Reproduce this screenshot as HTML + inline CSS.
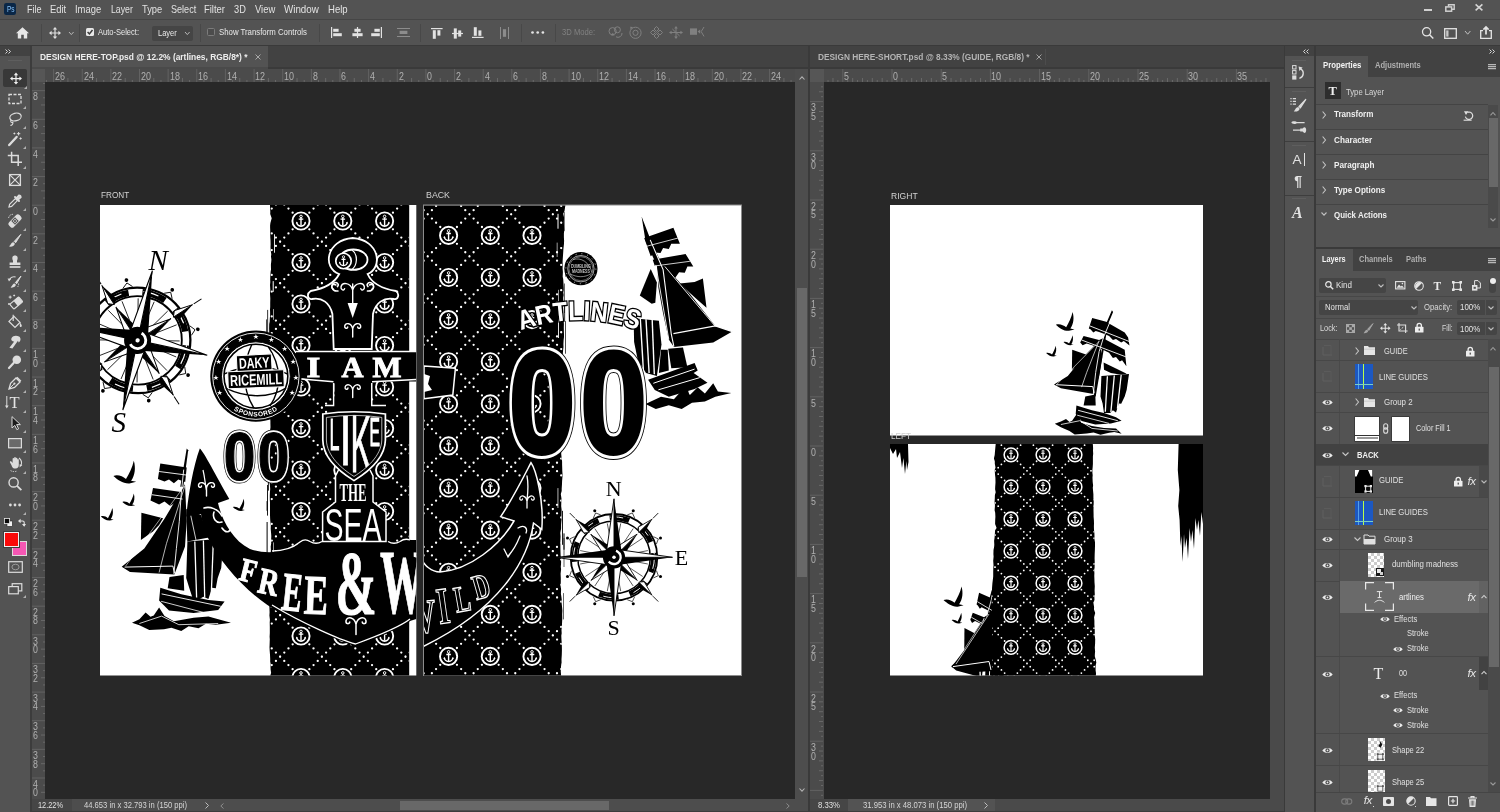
<!DOCTYPE html>
<html lang="en"><head><meta charset="utf-8"><title>Photoshop</title><style>
html,body{margin:0;padding:0;background:#535353;}
body{width:1500px;height:812px;position:relative;overflow:hidden;font-family:"Liberation Sans",sans-serif;}
#app{position:absolute;left:0;top:0;width:1500px;height:812px;will-change:transform;}
.r{position:absolute;}
.t{position:absolute;white-space:nowrap;}
svg{position:absolute;overflow:visible;}
</style></head><body>
<div id="app">
<!-- chrome_top -->
<div class="r" style="left:0px;top:0px;width:1500px;height:812px;background:#535353;"></div>
<div class="r" style="left:0px;top:19px;width:1500px;height:1px;background:#454545;"></div>
<div class="r" style="left:4px;top:3.2px;width:12px;height:12px;background:#0a2747;border-radius:2.2px"></div>
<span class="t" style="left:6.60px;top:4.88px;font-size:8.6px;line-height:9.881px;color:#86c2fa;transform:scaleX(0.7572);transform-origin:0 0;">Ps</span>
<span class="t" style="left:26.90px;top:3.33px;font-size:10.5px;line-height:12.065px;color:#e2e2e2;transform:scaleX(0.8629);transform-origin:0 0;">File</span>
<span class="t" style="left:50.10px;top:3.33px;font-size:10.5px;line-height:12.065px;color:#e2e2e2;transform:scaleX(0.8953);transform-origin:0 0;">Edit</span>
<span class="t" style="left:75.10px;top:3.33px;font-size:10.5px;line-height:12.065px;color:#e2e2e2;transform:scaleX(0.8978);transform-origin:0 0;">Image</span>
<span class="t" style="left:110.70px;top:3.33px;font-size:10.5px;line-height:12.065px;color:#e2e2e2;transform:scaleX(0.8300);transform-origin:0 0;">Layer</span>
<span class="t" style="left:141.50px;top:3.33px;font-size:10.5px;line-height:12.065px;color:#e2e2e2;transform:scaleX(0.8873);transform-origin:0 0;">Type</span>
<span class="t" style="left:170.50px;top:3.33px;font-size:10.5px;line-height:12.065px;color:#e2e2e2;transform:scaleX(0.8635);transform-origin:0 0;">Select</span>
<span class="t" style="left:204.10px;top:3.33px;font-size:10.5px;line-height:12.065px;color:#e2e2e2;transform:scaleX(0.9000);transform-origin:0 0;">Filter</span>
<span class="t" style="left:233.90px;top:3.33px;font-size:10.5px;line-height:12.065px;color:#e2e2e2;transform:scaleX(0.8791);transform-origin:0 0;">3D</span>
<span class="t" style="left:254.90px;top:3.33px;font-size:10.5px;line-height:12.065px;color:#e2e2e2;transform:scaleX(0.8950);transform-origin:0 0;">View</span>
<span class="t" style="left:283.90px;top:3.33px;font-size:10.5px;line-height:12.065px;color:#e2e2e2;transform:scaleX(0.9318);transform-origin:0 0;">Window</span>
<span class="t" style="left:327.90px;top:3.33px;font-size:10.5px;line-height:12.065px;color:#e2e2e2;transform:scaleX(0.9076);transform-origin:0 0;">Help</span>
<div class="r" style="left:0px;top:45px;width:1500px;height:1px;background:#3a3a3a;"></div>
<div class="r" style="left:0px;top:46px;width:1500px;height:22px;background:#424242;"></div>
<!-- chrome_opts -->
<div class="r" style="left:1424px;top:9px;width:8px;height:2px;background:#d0d0d0;"></div>
<svg style="left:1445px;top:4px" width="10" height="8" viewBox="0 0 10 8"><path d="M3.5 2.5 V0.8 H9.2 V5.2 H7" fill="none" stroke="#cfcfcf" stroke-width="1.4"/><rect x="0.8" y="2.9" width="5.8" height="4.3" fill="none" stroke="#cfcfcf" stroke-width="1.5"/></svg>
<svg style="left:1475px;top:4px" width="8" height="7" viewBox="0 0 8 7"><path d="M0.6 0.4 L7.4 6.4 M7.4 0.4 L0.6 6.4" stroke="#d4d4d4" stroke-width="1.6"/></svg>
<svg style="left:1421px;top:26px" width="14" height="14" viewBox="0 0 14 14"><circle cx="5.6" cy="5.8" r="4.1" fill="none" stroke="#e4e4e4" stroke-width="1.3"/><path d="M8.6 8.8 L12.3 12.5" stroke="#e4e4e4" stroke-width="1.5"/></svg>
<svg style="left:1444px;top:28px" width="13" height="11" viewBox="0 0 13 11"><rect x="0.7" y="0.7" width="11.6" height="9.6" fill="none" stroke="#e4e4e4" stroke-width="1.3"/><rect x="2.2" y="2.4" width="2.3" height="6.2" fill="#c8c8c8"/></svg>
<svg style="left:1465px;top:31px" width="5.4" height="3.2" viewBox="0 0 5.4 3.2"><path d="M0 0 L2.7 3.2 L5.4 0" fill="none" stroke="#c0c0c0" stroke-width="1"/></svg>
<svg style="left:1480px;top:26px" width="12" height="13" viewBox="0 0 12 13"><path d="M3 4.6 H0.7 V12.3 H11.3 V4.6 H9" fill="none" stroke="#e4e4e4" stroke-width="1.3"/><path d="M6 8.5 V2.2 M3.4 3.6 L6 1 L8.6 3.6" fill="none" stroke="#e4e4e4" stroke-width="1.7"/></svg>
<svg style="left:15.5px;top:26.5px" width="13" height="12" viewBox="0 0 13 12"><path d="M6.5 0.3 L0 6.2 H1.8 V11.5 H5.2 V7.8 H7.8 V11.5 H11.2 V6.2 H13 Z" fill="#e6e6e6"/></svg>
<div class="r" style="left:41px;top:24px;width:1px;height:18px;background:#484848;"></div>
<svg style="left:48.5px;top:27px" width="12" height="12" viewBox="0 0 12 12"><path d="M6 0 L8.2 2.6 H6.6 V5.4 H9.4 V3.8 L12 6 L9.4 8.2 V6.6 H6.6 V9.4 H8.2 L6 12 L3.8 9.4 H5.4 V6.6 H2.6 V8.2 L0 6 L2.6 3.8 V5.4 H5.4 V2.6 H3.8 Z" fill="#e0e0e0"/></svg>
<svg style="left:68.6px;top:32px" width="4.6" height="2.6" viewBox="0 0 4.6 2.6"><path d="M0 0 L2.3 2.6 L4.6 0" fill="none" stroke="#b8b8b8" stroke-width="1"/></svg>
<div class="r" style="left:79px;top:24px;width:1px;height:18px;background:#484848;"></div>
<div class="r" style="left:86px;top:28px;width:8px;height:8px;background:#e8e8e8;border-radius:1.5px"></div>
<svg style="left:86px;top:28px" width="8" height="8" viewBox="0 0 8 8"><path d="M1.6 4 L3.4 5.9 L6.5 2" fill="none" stroke="#3a3a3a" stroke-width="1.5"/></svg>
<span class="t" style="left:97.60px;top:27.35px;font-size:9.5px;line-height:10.915px;color:#e9e9e9;transform:scaleX(0.7923);transform-origin:0 0;">Auto-Select:</span>
<div class="r" style="left:152px;top:25.5px;width:41px;height:15px;background:#454545;border-radius:2px"></div>
<span class="t" style="left:157.60px;top:28.15px;font-size:9.5px;line-height:10.915px;color:#e9e9e9;transform:scaleX(0.7911);transform-origin:0 0;">Layer</span>
<svg style="left:185.4px;top:32px" width="4.6" height="2.6" viewBox="0 0 4.6 2.6"><path d="M0 0 L2.3 2.6 L4.6 0" fill="none" stroke="#b8b8b8" stroke-width="1"/></svg>
<div class="r" style="left:200px;top:24px;width:1px;height:18px;background:#484848;"></div>
<div class="r" style="left:207px;top:28.4px;width:5.6px;height:5.6px;border:1px solid #7c7c7c;border-radius:1.5px;background:#4c4c4c"></div>
<span class="t" style="left:218.60px;top:27.35px;font-size:9.5px;line-height:10.915px;color:#e9e9e9;transform:scaleX(0.8210);transform-origin:0 0;">Show Transform Controls</span>
<div class="r" style="left:319px;top:24px;width:1px;height:18px;background:#484848;"></div>
<svg style="left:331px;top:27px" width="12" height="11" viewBox="0 0 12 11"><rect x="0" y="0" width="1.2" height="11" fill="#e2e2e2"/><rect x="2.2" y="1.8" width="5.4" height="3" fill="#e2e2e2"/><rect x="2.2" y="6.2" width="8.6" height="3" fill="#e2e2e2"/></svg>
<svg style="left:351.5px;top:27px" width="11" height="11" viewBox="0 0 11 11"><rect x="4.9" y="0" width="1.2" height="11" fill="#e2e2e2"/><rect x="2.4" y="1.8" width="6.2" height="3" fill="#e2e2e2"/><rect x="0.4" y="6.2" width="10.2" height="3" fill="#e2e2e2"/></svg>
<svg style="left:371px;top:27px" width="11" height="11" viewBox="0 0 11 11"><rect x="9.8" y="0" width="1.2" height="11" fill="#e2e2e2"/><rect x="3.4" y="1.8" width="5.4" height="3" fill="#e2e2e2"/><rect x="0.2" y="6.2" width="8.6" height="3" fill="#e2e2e2"/></svg>
<svg style="left:396.5px;top:28px" width="13" height="9" viewBox="0 0 13 9"><rect x="0" y="0" width="13" height="1" fill="#8c8c8c"/><rect x="0" y="8" width="13" height="1" fill="#8c8c8c"/><rect x="2.6" y="2.8" width="7.8" height="3.2" fill="#8c8c8c"/></svg>
<div class="r" style="left:420px;top:24px;width:1px;height:18px;background:#484848;"></div>
<svg style="left:431px;top:28px" width="12" height="11" viewBox="0 0 12 11"><rect x="0" y="0" width="11.6" height="1.2" fill="#e2e2e2"/><rect x="1.8" y="2.2" width="3" height="8.6" fill="#e2e2e2"/><rect x="6.4" y="2.2" width="3" height="5.4" fill="#e2e2e2"/></svg>
<svg style="left:451.5px;top:27.5px" width="11" height="11" viewBox="0 0 11 11"><rect x="0" y="4.9" width="11" height="1.2" fill="#e2e2e2"/><rect x="1.8" y="0.4" width="3" height="10.2" fill="#e2e2e2"/><rect x="6.2" y="2.4" width="3" height="6.2" fill="#e2e2e2"/></svg>
<svg style="left:472px;top:27px" width="12" height="11" viewBox="0 0 12 11"><rect x="0" y="9.8" width="11.6" height="1.2" fill="#e2e2e2"/><rect x="1.8" y="0.2" width="3" height="8.6" fill="#e2e2e2"/><rect x="6.4" y="3.4" width="3" height="5.4" fill="#e2e2e2"/></svg>
<svg style="left:500px;top:26.5px" width="9" height="12" viewBox="0 0 9 12"><rect x="0" y="0" width="1" height="12" fill="#8c8c8c"/><rect x="8" y="0" width="1" height="12" fill="#8c8c8c"/><rect x="2.9" y="2.2" width="3.2" height="7.6" fill="#8c8c8c"/></svg>
<div class="r" style="left:520.5px;top:24px;width:1px;height:18px;background:#484848;"></div>
<svg style="left:531px;top:31.3px" width="14" height="3" viewBox="0 0 14 3"><circle cx="1.5" cy="1.5" r="1.35" fill="#e4e4e4"/><circle cx="6.7" cy="1.5" r="1.35" fill="#e4e4e4"/><circle cx="11.9" cy="1.5" r="1.35" fill="#e4e4e4"/></svg>
<div class="r" style="left:554.5px;top:24px;width:1px;height:18px;background:#484848;"></div>
<span class="t" style="left:562.20px;top:27.35px;font-size:9.5px;line-height:10.915px;color:#818181;transform:scaleX(0.8061);transform-origin:0 0;">3D Mode:</span>
<svg style="left:608px;top:25.5px" width="15" height="13" viewBox="0 0 15 13"><circle cx="4.6" cy="5.2" r="3.6" fill="none" stroke="#808080" stroke-width="1"/><circle cx="9.4" cy="3.8" r="3" fill="none" stroke="#808080" stroke-width="1"/><path d="M8 10.8 A4 4 0 0 0 14 7" fill="none" stroke="#808080" stroke-width="1"/><path d="M3 9.6 L6.6 9.6 L4.8 6.8Z" fill="#808080"/></svg>
<svg style="left:629px;top:25.5px" width="13" height="13" viewBox="0 0 13 13"><circle cx="6.5" cy="6.8" r="5.6" fill="none" stroke="#808080" stroke-width="1"/><circle cx="6.5" cy="6.8" r="2.6" fill="none" stroke="#808080" stroke-width="1"/><path d="M1.2 0.8 L4 1 L1.6 3.4Z" fill="#808080"/></svg>
<svg style="left:649.5px;top:25.5px" width="13" height="13" viewBox="0 0 13 13"><path d="M6.5 0.5 L9 3 L6.5 5.5 L4 3Z M6.5 7.5 L9 10 L6.5 12.5 L4 10Z M0.5 6.5 L3 4 L5.5 6.5 L3 9Z M7.5 6.5 L10 4 L12.5 6.5 L10 9Z" fill="none" stroke="#808080" stroke-width="1"/></svg>
<svg style="left:669px;top:25.5px" width="14" height="13" viewBox="0 0 14 13"><path d="M7 2 V11 M2 6.5 H12 M3.4 3 L10.6 10" fill="none" stroke="#808080" stroke-width="1"/><path d="M7 0 L8.8 2.6 H5.2Z M7 13 L8.8 10.4 H5.2Z M0 6.5 L2.6 4.8 V8.2Z M14 6.5 L11.4 4.8 V8.2Z" fill="#808080"/></svg>
<svg style="left:689.5px;top:27px" width="15" height="10" viewBox="0 0 15 10"><rect x="0" y="1.4" width="7" height="6.4" fill="#808080"/><path d="M7.6 4.6 L10.2 2.4 V6.8Z" fill="#808080"/><path d="M14 0 L11.2 4.6 L14 9.4" fill="none" stroke="#808080" stroke-width="1"/></svg>
<!-- chrome_tools -->
<div class="r" style="left:0px;top:46px;width:30px;height:10px;background:#424242;"></div>
<div class="r" style="left:0px;top:56px;width:30px;height:14px;background:#535353;"></div>
<div class="r" style="left:30px;top:46px;width:2px;height:766px;background:#3c3c3c;"></div>
<svg style="left:4.5px;top:48.5px" width="6" height="5" viewBox="0 0 6 5"><path d="M0.5 0.5 L2.5 2.5 L0.5 4.5 M3.5 0.5 L5.5 2.5 L3.5 4.5" fill="none" stroke="#d8d8d8" stroke-width="1"/></svg>
<div class="r" style="left:8px;top:59.5px;width:14px;height:1px;background:#5e5e5e;"></div>
<div class="r" style="left:3px;top:69px;width:24px;height:18px;background:#383838;border-radius:2px"></div>
<svg style="left:7.5px;top:71.0px" width="16" height="16" viewBox="0 0 16 16"><path d="M6 0 L8.2 2.6 H6.6 V5.4 H9.4 V3.8 L12 6 L9.4 8.2 V6.6 H6.6 V9.4 H8.2 L6 12 L3.8 9.4 H5.4 V6.6 H2.6 V8.2 L0 6 L2.6 3.8 V5.4 H5.4 V2.6 H3.8 Z" fill="#f0f0f0" transform="translate(2,1.6)"/></svg><svg style="left:23.5px;top:86.2px" width="3" height="3" viewBox="0 0 3 3"><path d="M3 0 V3 H0Z" fill="#b0b0b0"/></svg>
<svg style="left:7.0px;top:90.5px" width="16" height="16" viewBox="0 0 16 16"><rect x="2" y="3.5" width="12" height="9" fill="none" stroke="#dcdcdc" stroke-width="1.3" stroke-dasharray="3 1.5"/></svg><svg style="left:23px;top:105.7px" width="3" height="3" viewBox="0 0 3 3"><path d="M3 0 V3 H0Z" fill="#b0b0b0"/></svg>
<svg style="left:7.0px;top:110.5px" width="16" height="16" viewBox="0 0 16 16"><ellipse cx="8.5" cy="6" rx="5.8" ry="3.8" fill="none" stroke="#dcdcdc" stroke-width="1.2" transform="rotate(-15 8.5 6)"/><path d="M4.2 8.8 C3 10.5 4.2 12.2 5.8 11.2 C6.4 12.6 5 14.4 3.4 14.4" fill="none" stroke="#dcdcdc" stroke-width="1.1"/></svg><svg style="left:23px;top:125.7px" width="3" height="3" viewBox="0 0 3 3"><path d="M3 0 V3 H0Z" fill="#b0b0b0"/></svg>
<svg style="left:7.0px;top:131.0px" width="16" height="16" viewBox="0 0 16 16"><path d="M2.2 14 L9.6 6" stroke="#dcdcdc" stroke-width="2.4" stroke-linecap="round"/><path d="M11.6 1 V4.4 M9.9 2.7 H13.3 M13.6 6.4 V8.6 M12.5 7.5 H14.7 M7.4 1.6 V3.4 M6.5 2.5 H8.3" stroke="#dcdcdc" stroke-width="1"/></svg><svg style="left:23px;top:146.2px" width="3" height="3" viewBox="0 0 3 3"><path d="M3 0 V3 H0Z" fill="#b0b0b0"/></svg>
<svg style="left:7.0px;top:151.0px" width="16" height="16" viewBox="0 0 16 16"><path d="M4.6 0.8 V11.2 H15 M0.8 4.6 H11.2 V15" fill="none" stroke="#dcdcdc" stroke-width="1.5"/></svg><svg style="left:23px;top:166.2px" width="3" height="3" viewBox="0 0 3 3"><path d="M3 0 V3 H0Z" fill="#b0b0b0"/></svg>
<svg style="left:7.0px;top:171.5px" width="16" height="16" viewBox="0 0 16 16"><rect x="2.6" y="2.6" width="10.8" height="10.8" fill="none" stroke="#dcdcdc" stroke-width="1.3"/><path d="M2.6 2.6 L13.4 13.4 M13.4 2.6 L2.6 13.4" stroke="#dcdcdc" stroke-width="1.1"/></svg>
<svg style="left:7.0px;top:192.5px" width="16" height="16" viewBox="0 0 16 16"><path d="M2 14 L2.6 11.4 L8.4 5.6 L10.4 7.6 L4.6 13.4 Z" fill="none" stroke="#dcdcdc" stroke-width="1.2"/><path d="M8 4 L12 8 M9.6 5.2 L12 2.6 A1.6 1.6 0 0 1 13.6 4.2 L11 6.6" stroke="#dcdcdc" stroke-width="2" fill="none" stroke-linecap="round"/></svg><svg style="left:23px;top:207.7px" width="3" height="3" viewBox="0 0 3 3"><path d="M3 0 V3 H0Z" fill="#b0b0b0"/></svg>
<svg style="left:7.0px;top:212.5px" width="16" height="16" viewBox="0 0 16 16"><g transform="rotate(-45 8 8)"><rect x="0.6" y="4.6" width="14.8" height="6.8" rx="2.4" fill="#dcdcdc"/><rect x="5.4" y="5.4" width="5.2" height="5.2" fill="#535353"/><circle cx="7" cy="7" r="0.7" fill="#dcdcdc"/><circle cx="9" cy="7" r="0.7" fill="#dcdcdc"/><circle cx="7" cy="9" r="0.7" fill="#dcdcdc"/><circle cx="9" cy="9" r="0.7" fill="#dcdcdc"/></g><path d="M1.6 5 A4 4 0 0 1 6 1.4" stroke="#dcdcdc" fill="none" stroke-dasharray="1.4 1"/></svg><svg style="left:23px;top:227.7px" width="3" height="3" viewBox="0 0 3 3"><path d="M3 0 V3 H0Z" fill="#b0b0b0"/></svg>
<svg style="left:7.0px;top:233.0px" width="16" height="16" viewBox="0 0 16 16"><path d="M13.8 1.4 L7.2 8.4 L8.6 9.8 Z" fill="#dcdcdc" stroke="#dcdcdc" stroke-width="1"/><path d="M6.4 9.2 C4.4 9.2 4.2 11.2 2 13.6 C5 14.2 8 12.6 7.8 10.6 Z" fill="#dcdcdc"/></svg><svg style="left:23px;top:248.2px" width="3" height="3" viewBox="0 0 3 3"><path d="M3 0 V3 H0Z" fill="#b0b0b0"/></svg>
<svg style="left:7.0px;top:253.5px" width="16" height="16" viewBox="0 0 16 16"><path d="M6 6.8 C4.6 3.6 5.4 1.4 8 1.4 C10.6 1.4 11.4 3.6 10 6.8 V8.4 H13.4 V11 H2.6 V8.4 H6 Z" fill="#dcdcdc"/><rect x="2.6" y="12.2" width="10.8" height="1.6" fill="#dcdcdc"/></svg><svg style="left:23px;top:268.7px" width="3" height="3" viewBox="0 0 3 3"><path d="M3 0 V3 H0Z" fill="#b0b0b0"/></svg>
<svg style="left:7.0px;top:274.0px" width="16" height="16" viewBox="0 0 16 16"><path d="M14 2 L8.4 8.6 L9.6 9.8 Z" fill="#dcdcdc" stroke="#dcdcdc" stroke-width="1"/><path d="M7.6 9.4 C5.8 9.4 5.6 11.2 3.6 13.6 C6.4 14 9 12.6 8.8 10.6 Z" fill="#dcdcdc"/><path d="M2.4 6 A5 5 0 0 1 8.6 3" fill="none" stroke="#dcdcdc" stroke-width="1.1"/><path d="M0.6 4.4 L4.2 4.8 L2 7.6Z" fill="#dcdcdc"/><path d="M11.6 9.6 A5 5 0 0 1 10.6 13" fill="none" stroke="#dcdcdc" stroke-dasharray="1.2 1"/></svg><svg style="left:23px;top:289.2px" width="3" height="3" viewBox="0 0 3 3"><path d="M3 0 V3 H0Z" fill="#b0b0b0"/></svg>
<svg style="left:7.0px;top:293.5px" width="16" height="16" viewBox="0 0 16 16"><g transform="rotate(-40 9 9)"><rect x="3.4" y="6" width="11.6" height="6.4" rx="1" fill="none" stroke="#dcdcdc" stroke-width="1.2"/><rect x="8.4" y="6" width="6.6" height="6.4" fill="#dcdcdc"/></g><path d="M3.2 1.6 V4.6 M1.7 3.1 H4.7 M2 9 V11 M1 10 H3 M7.2 0.6 V2.4 M6.3 1.5 H8.1" stroke="#dcdcdc" stroke-width="1"/></svg><svg style="left:23px;top:308.7px" width="3" height="3" viewBox="0 0 3 3"><path d="M3 0 V3 H0Z" fill="#b0b0b0"/></svg>
<svg style="left:7.0px;top:313.5px" width="16" height="16" viewBox="0 0 16 16"><path d="M7 2.4 L13 8.4 L8 13.4 L2 7.4 Z" fill="none" stroke="#dcdcdc" stroke-width="1.3"/><path d="M6.2 7 V0.8" stroke="#dcdcdc" stroke-width="1.2"/><path d="M13 8.4 C14.6 10.4 15.4 11.8 14.4 12.8 C13.4 13.6 12.4 12.6 12.8 11 Z" fill="#dcdcdc"/><path d="M3 7 L12 7.6 L7.6 12 Z" fill="#dcdcdc" opacity="0.0"/></svg><svg style="left:23px;top:328.7px" width="3" height="3" viewBox="0 0 3 3"><path d="M3 0 V3 H0Z" fill="#b0b0b0"/></svg>
<svg style="left:7.0px;top:334.0px" width="16" height="16" viewBox="0 0 16 16"><path d="M2.4 13.8 L7.2 7.6 C5 7.4 3.6 5.8 4.6 4 C5.8 1.8 9.4 1.2 12 2.6 C14.4 4 13.8 7.6 11.6 8.6 L11 6.8 L5.4 14.4 Z" fill="#dcdcdc"/></svg><svg style="left:23px;top:349.2px" width="3" height="3" viewBox="0 0 3 3"><path d="M3 0 V3 H0Z" fill="#b0b0b0"/></svg>
<svg style="left:7.0px;top:354.0px" width="16" height="16" viewBox="0 0 16 16"><circle cx="9.8" cy="5.8" r="4.3" fill="#dcdcdc"/><path d="M6.6 9 L2 14" stroke="#dcdcdc" stroke-width="2.2" stroke-linecap="round"/></svg><svg style="left:23px;top:369.2px" width="3" height="3" viewBox="0 0 3 3"><path d="M3 0 V3 H0Z" fill="#b0b0b0"/></svg>
<svg style="left:7.0px;top:375.0px" width="16" height="16" viewBox="0 0 16 16"><path d="M2 14 L3.6 8.4 L9 3 L13 7 L7.6 12.4 Z" fill="none" stroke="#dcdcdc" stroke-width="1.3"/><path d="M2 14 L6.8 9.2" stroke="#dcdcdc" stroke-width="1"/><circle cx="7.4" cy="8.6" r="1.1" fill="#dcdcdc"/><path d="M9.8 2.2 L13.8 6.2" stroke="#dcdcdc" stroke-width="1.6"/></svg><svg style="left:23px;top:390.2px" width="3" height="3" viewBox="0 0 3 3"><path d="M3 0 V3 H0Z" fill="#b0b0b0"/></svg>
<span class="t" style="left:9.40px;top:393.90px;font-size:16.5px;line-height:18.959px;color:#e4e4e4;font-family:'Liberation Serif',serif;">T</span>
<svg style="left:5px;top:396px" width="4" height="13" viewBox="0 0 4 13"><path d="M1.8 0 V11" stroke="#dcdcdc" stroke-width="1"/><path d="M0 9.4 H3.6 L1.8 12.6Z" fill="#dcdcdc"/></svg>
<svg style="left:23px;top:410.2px" width="3" height="3" viewBox="0 0 3 3"><path d="M3 0 V3 H0Z" fill="#b0b0b0"/></svg>
<svg style="left:7.0px;top:415.0px" width="16" height="16" viewBox="0 0 16 16"><path d="M5 1.6 V13 L7.8 10.4 L9.8 14.6 L11.6 13.8 L9.6 9.6 H13.4 Z" fill="#1c1c1c" stroke="#dcdcdc" stroke-width="1"/></svg><svg style="left:23px;top:430.2px" width="3" height="3" viewBox="0 0 3 3"><path d="M3 0 V3 H0Z" fill="#b0b0b0"/></svg>
<svg style="left:7.0px;top:435.0px" width="16" height="16" viewBox="0 0 16 16"><rect x="1.6" y="3.6" width="12.8" height="9.2" fill="#6a6a6a" stroke="#dcdcdc" stroke-width="1.2"/></svg><svg style="left:23px;top:450.2px" width="3" height="3" viewBox="0 0 3 3"><path d="M3 0 V3 H0Z" fill="#b0b0b0"/></svg>
<svg style="left:7.0px;top:455.5px" width="16" height="16" viewBox="0 0 16 16"><path d="M4.4 9 L3 6.6 C2.4 5.4 3.8 4.8 4.6 5.8 L5.6 7 V2.8 C5.6 1.6 7.2 1.6 7.2 2.8 V1.8 C7.2 0.6 8.8 0.6 8.8 1.8 V2.6 C8.8 1.6 10.4 1.6 10.4 2.8 V3.8 C10.4 2.8 11.8 2.8 11.8 4 V9 C11.8 11 10.6 12.6 8.6 12.6 H7.4 C5.8 12.6 5.2 11 4.4 9 Z" fill="#dcdcdc"/><path d="M12 2 A6.6 6.6 0 0 1 14 9.6" fill="none" stroke="#dcdcdc" stroke-width="1.1"/><path d="M12.6 11.4 L15.4 9 L12.6 8.2Z" fill="#dcdcdc"/><path d="M3.6 14.6 A7 7 0 0 0 10 15" fill="none" stroke="#dcdcdc" stroke-dasharray="1.3 1"/></svg><svg style="left:23px;top:470.7px" width="3" height="3" viewBox="0 0 3 3"><path d="M3 0 V3 H0Z" fill="#b0b0b0"/></svg>
<svg style="left:7.0px;top:476.0px" width="16" height="16" viewBox="0 0 16 16"><circle cx="6.6" cy="6.4" r="4.6" fill="none" stroke="#dcdcdc" stroke-width="1.4"/><path d="M10 9.8 L14.4 14.2" stroke="#dcdcdc" stroke-width="1.8"/></svg>
<svg style="left:7.0px;top:496.5px" width="16" height="16" viewBox="0 0 16 16"><circle cx="3.4" cy="8" r="1.4" fill="#dcdcdc"/><circle cx="8" cy="8" r="1.4" fill="#dcdcdc"/><circle cx="12.6" cy="8" r="1.4" fill="#dcdcdc"/></svg><svg style="left:23px;top:511.7px" width="3" height="3" viewBox="0 0 3 3"><path d="M3 0 V3 H0Z" fill="#b0b0b0"/></svg>
<svg style="left:4px;top:518px" width="9" height="9" viewBox="0 0 9 9"><rect x="3" y="3" width="5.4" height="5.4" fill="#f2f2f2" stroke="#222" stroke-width="0.6"/><rect x="0.4" y="0.4" width="5.2" height="5.2" fill="#0a0a0a" stroke="#e8e8e8" stroke-width="0.8"/></svg>
<svg style="left:18px;top:518px" width="8" height="9" viewBox="0 0 8 9"><path d="M1.4 3 H4.6 A1.6 1.6 0 0 1 6.2 4.6 V7.6" fill="none" stroke="#e4e4e4" stroke-width="1.1"/><path d="M2.6 0.8 L0 3 L2.6 5.2Z M4 6 L6.2 8.8 L8 6Z" fill="#e4e4e4"/></svg>
<div class="r" style="left:11.5px;top:541px;width:13px;height:13px;background:#f657b4;border:1px solid #dcdcdc"></div>
<div class="r" style="left:3.5px;top:531.5px;width:13.5px;height:13.5px;background:#fa0909;border:1px solid #efefef;box-shadow:0 0 0 1px #3c3c3c"></div>
<svg style="left:8px;top:560.5px" width="15" height="12" viewBox="0 0 15 12"><rect x="0.7" y="0.7" width="13.6" height="10.6" fill="none" stroke="#dcdcdc" stroke-width="1.2"/><ellipse cx="7.5" cy="6" rx="3.6" ry="2.8" fill="none" stroke="#9a9a9a" stroke-width="1"/></svg>
<svg style="left:8px;top:582.5px" width="15" height="12" viewBox="0 0 15 12"><rect x="4.2" y="0.7" width="9.6" height="7.2" fill="none" stroke="#dcdcdc" stroke-width="1.2"/><rect x="0.7" y="3.6" width="9.6" height="7.2" fill="#535353" stroke="#dcdcdc" stroke-width="1.2"/></svg>
<svg style="left:23px;top:595px" width="3" height="3" viewBox="0 0 3 3"><path d="M3 0 V3 H0Z" fill="#b0b0b0"/></svg>
<!-- chrome_docs -->
<div class="r" style="left:32px;top:46px;width:236px;height:22px;background:#535353;"></div>
<span class="t" style="left:39.60px;top:52.35px;font-size:9.5px;line-height:10.915px;color:#eeeeee;transform:scaleX(0.8835);transform-origin:0 0;font-weight:700;">DESIGN HERE-TOP.psd @ 12.2% (artlines, RGB/8*) *</span>
<svg style="left:254.5px;top:54px" width="6" height="6" viewBox="0 0 6 6"><path d="M0.5 0.5 L5.5 5.5 M5.5 0.5 L0.5 5.5" stroke="#a8a8a8" stroke-width="1"/></svg>
<div class="r" style="left:32px;top:67px;width:1468px;height:1.5px;background:#3a3a3a;"></div>
<div class="r" style="left:32px;top:67px;width:236px;height:1.5px;background:#4a4a4a;"></div>
<div class="r" style="left:32px;top:68.5px;width:776px;height:744px;background:#4b4b4b;"></div>
<div class="r" style="left:45px;top:82px;width:750px;height:717px;background:#282828;"></div>
<div class="r" style="left:45px;top:68.5px;width:750px;height:13.5px;background:#4b4b4b;"></div>
<svg style="left:45px;top:68.5px" width="750" height="13.5" viewBox="0 0 750 13.5"><rect x="0.92" y="11" width="1" height="2" fill="#686868"/><rect x="8.08" y="0" width="1" height="13" fill="#626262"/><rect x="15.24" y="11" width="1" height="2" fill="#686868"/><rect x="22.40" y="9" width="1" height="4" fill="#686868"/><rect x="29.56" y="11" width="1" height="2" fill="#686868"/><rect x="36.72" y="0" width="1" height="13" fill="#626262"/><rect x="43.88" y="11" width="1" height="2" fill="#686868"/><rect x="51.04" y="9" width="1" height="4" fill="#686868"/><rect x="58.20" y="11" width="1" height="2" fill="#686868"/><rect x="65.36" y="0" width="1" height="13" fill="#626262"/><rect x="72.52" y="11" width="1" height="2" fill="#686868"/><rect x="79.68" y="9" width="1" height="4" fill="#686868"/><rect x="86.84" y="11" width="1" height="2" fill="#686868"/><rect x="94.00" y="0" width="1" height="13" fill="#626262"/><rect x="101.16" y="11" width="1" height="2" fill="#686868"/><rect x="108.32" y="9" width="1" height="4" fill="#686868"/><rect x="115.48" y="11" width="1" height="2" fill="#686868"/><rect x="122.64" y="0" width="1" height="13" fill="#626262"/><rect x="129.80" y="11" width="1" height="2" fill="#686868"/><rect x="136.96" y="9" width="1" height="4" fill="#686868"/><rect x="144.12" y="11" width="1" height="2" fill="#686868"/><rect x="151.28" y="0" width="1" height="13" fill="#626262"/><rect x="158.44" y="11" width="1" height="2" fill="#686868"/><rect x="165.60" y="9" width="1" height="4" fill="#686868"/><rect x="172.76" y="11" width="1" height="2" fill="#686868"/><rect x="179.92" y="0" width="1" height="13" fill="#626262"/><rect x="187.08" y="11" width="1" height="2" fill="#686868"/><rect x="194.24" y="9" width="1" height="4" fill="#686868"/><rect x="201.40" y="11" width="1" height="2" fill="#686868"/><rect x="208.56" y="0" width="1" height="13" fill="#626262"/><rect x="215.72" y="11" width="1" height="2" fill="#686868"/><rect x="222.88" y="9" width="1" height="4" fill="#686868"/><rect x="230.04" y="11" width="1" height="2" fill="#686868"/><rect x="237.20" y="0" width="1" height="13" fill="#626262"/><rect x="244.36" y="11" width="1" height="2" fill="#686868"/><rect x="251.52" y="9" width="1" height="4" fill="#686868"/><rect x="258.68" y="11" width="1" height="2" fill="#686868"/><rect x="265.84" y="0" width="1" height="13" fill="#626262"/><rect x="273.00" y="11" width="1" height="2" fill="#686868"/><rect x="280.16" y="9" width="1" height="4" fill="#686868"/><rect x="287.32" y="11" width="1" height="2" fill="#686868"/><rect x="294.48" y="0" width="1" height="13" fill="#626262"/><rect x="301.64" y="11" width="1" height="2" fill="#686868"/><rect x="308.80" y="9" width="1" height="4" fill="#686868"/><rect x="315.96" y="11" width="1" height="2" fill="#686868"/><rect x="323.12" y="0" width="1" height="13" fill="#626262"/><rect x="330.28" y="11" width="1" height="2" fill="#686868"/><rect x="337.44" y="9" width="1" height="4" fill="#686868"/><rect x="344.60" y="11" width="1" height="2" fill="#686868"/><rect x="351.76" y="0" width="1" height="13" fill="#626262"/><rect x="358.92" y="11" width="1" height="2" fill="#686868"/><rect x="366.08" y="9" width="1" height="4" fill="#686868"/><rect x="373.24" y="11" width="1" height="2" fill="#686868"/><rect x="380.40" y="0" width="1" height="13" fill="#626262"/><rect x="387.56" y="11" width="1" height="2" fill="#686868"/><rect x="394.72" y="9" width="1" height="4" fill="#686868"/><rect x="401.88" y="11" width="1" height="2" fill="#686868"/><rect x="409.04" y="0" width="1" height="13" fill="#626262"/><rect x="416.20" y="11" width="1" height="2" fill="#686868"/><rect x="423.36" y="9" width="1" height="4" fill="#686868"/><rect x="430.52" y="11" width="1" height="2" fill="#686868"/><rect x="437.68" y="0" width="1" height="13" fill="#626262"/><rect x="444.84" y="11" width="1" height="2" fill="#686868"/><rect x="452.00" y="9" width="1" height="4" fill="#686868"/><rect x="459.16" y="11" width="1" height="2" fill="#686868"/><rect x="466.32" y="0" width="1" height="13" fill="#626262"/><rect x="473.48" y="11" width="1" height="2" fill="#686868"/><rect x="480.64" y="9" width="1" height="4" fill="#686868"/><rect x="487.80" y="11" width="1" height="2" fill="#686868"/><rect x="494.96" y="0" width="1" height="13" fill="#626262"/><rect x="502.12" y="11" width="1" height="2" fill="#686868"/><rect x="509.28" y="9" width="1" height="4" fill="#686868"/><rect x="516.44" y="11" width="1" height="2" fill="#686868"/><rect x="523.60" y="0" width="1" height="13" fill="#626262"/><rect x="530.76" y="11" width="1" height="2" fill="#686868"/><rect x="537.92" y="9" width="1" height="4" fill="#686868"/><rect x="545.08" y="11" width="1" height="2" fill="#686868"/><rect x="552.24" y="0" width="1" height="13" fill="#626262"/><rect x="559.40" y="11" width="1" height="2" fill="#686868"/><rect x="566.56" y="9" width="1" height="4" fill="#686868"/><rect x="573.72" y="11" width="1" height="2" fill="#686868"/><rect x="580.88" y="0" width="1" height="13" fill="#626262"/><rect x="588.04" y="11" width="1" height="2" fill="#686868"/><rect x="595.20" y="9" width="1" height="4" fill="#686868"/><rect x="602.36" y="11" width="1" height="2" fill="#686868"/><rect x="609.52" y="0" width="1" height="13" fill="#626262"/><rect x="616.68" y="11" width="1" height="2" fill="#686868"/><rect x="623.84" y="9" width="1" height="4" fill="#686868"/><rect x="631.00" y="11" width="1" height="2" fill="#686868"/><rect x="638.16" y="0" width="1" height="13" fill="#626262"/><rect x="645.32" y="11" width="1" height="2" fill="#686868"/><rect x="652.48" y="9" width="1" height="4" fill="#686868"/><rect x="659.64" y="11" width="1" height="2" fill="#686868"/><rect x="666.80" y="0" width="1" height="13" fill="#626262"/><rect x="673.96" y="11" width="1" height="2" fill="#686868"/><rect x="681.12" y="9" width="1" height="4" fill="#686868"/><rect x="688.28" y="11" width="1" height="2" fill="#686868"/><rect x="695.44" y="0" width="1" height="13" fill="#626262"/><rect x="702.60" y="11" width="1" height="2" fill="#686868"/><rect x="709.76" y="9" width="1" height="4" fill="#686868"/><rect x="716.92" y="11" width="1" height="2" fill="#686868"/><rect x="724.08" y="0" width="1" height="13" fill="#626262"/><rect x="731.24" y="11" width="1" height="2" fill="#686868"/><rect x="738.40" y="9" width="1" height="4" fill="#686868"/><rect x="745.56" y="11" width="1" height="2" fill="#686868"/></svg>
<span class="t" style="left:54.98px;top:70.33px;font-size:10.5px;line-height:12.065px;color:#b0b0b0;transform:scaleX(0.8562);transform-origin:0 0;">26</span>
<span class="t" style="left:83.62px;top:70.33px;font-size:10.5px;line-height:12.065px;color:#b0b0b0;transform:scaleX(0.8562);transform-origin:0 0;">24</span>
<span class="t" style="left:112.26px;top:70.33px;font-size:10.5px;line-height:12.065px;color:#b0b0b0;transform:scaleX(0.8562);transform-origin:0 0;">22</span>
<span class="t" style="left:140.90px;top:70.33px;font-size:10.5px;line-height:12.065px;color:#b0b0b0;transform:scaleX(0.8562);transform-origin:0 0;">20</span>
<span class="t" style="left:169.54px;top:70.33px;font-size:10.5px;line-height:12.065px;color:#b0b0b0;transform:scaleX(0.8562);transform-origin:0 0;">18</span>
<span class="t" style="left:198.18px;top:70.33px;font-size:10.5px;line-height:12.065px;color:#b0b0b0;transform:scaleX(0.8562);transform-origin:0 0;">16</span>
<span class="t" style="left:226.82px;top:70.33px;font-size:10.5px;line-height:12.065px;color:#b0b0b0;transform:scaleX(0.8562);transform-origin:0 0;">14</span>
<span class="t" style="left:255.46px;top:70.33px;font-size:10.5px;line-height:12.065px;color:#b0b0b0;transform:scaleX(0.8562);transform-origin:0 0;">12</span>
<span class="t" style="left:284.10px;top:70.33px;font-size:10.5px;line-height:12.065px;color:#b0b0b0;transform:scaleX(0.8562);transform-origin:0 0;">10</span>
<span class="t" style="left:312.74px;top:70.33px;font-size:10.5px;line-height:12.065px;color:#b0b0b0;transform:scaleX(0.8391);transform-origin:0 0;">8</span>
<span class="t" style="left:341.38px;top:70.33px;font-size:10.5px;line-height:12.065px;color:#b0b0b0;transform:scaleX(0.8391);transform-origin:0 0;">6</span>
<span class="t" style="left:370.02px;top:70.33px;font-size:10.5px;line-height:12.065px;color:#b0b0b0;transform:scaleX(0.8391);transform-origin:0 0;">4</span>
<span class="t" style="left:398.66px;top:70.33px;font-size:10.5px;line-height:12.065px;color:#b0b0b0;transform:scaleX(0.8391);transform-origin:0 0;">2</span>
<span class="t" style="left:427.30px;top:70.33px;font-size:10.5px;line-height:12.065px;color:#b0b0b0;transform:scaleX(0.8391);transform-origin:0 0;">0</span>
<span class="t" style="left:455.94px;top:70.33px;font-size:10.5px;line-height:12.065px;color:#b0b0b0;transform:scaleX(0.8391);transform-origin:0 0;">2</span>
<span class="t" style="left:484.58px;top:70.33px;font-size:10.5px;line-height:12.065px;color:#b0b0b0;transform:scaleX(0.8391);transform-origin:0 0;">4</span>
<span class="t" style="left:513.22px;top:70.33px;font-size:10.5px;line-height:12.065px;color:#b0b0b0;transform:scaleX(0.8391);transform-origin:0 0;">6</span>
<span class="t" style="left:541.86px;top:70.33px;font-size:10.5px;line-height:12.065px;color:#b0b0b0;transform:scaleX(0.8391);transform-origin:0 0;">8</span>
<span class="t" style="left:570.50px;top:70.33px;font-size:10.5px;line-height:12.065px;color:#b0b0b0;transform:scaleX(0.8562);transform-origin:0 0;">10</span>
<span class="t" style="left:599.14px;top:70.33px;font-size:10.5px;line-height:12.065px;color:#b0b0b0;transform:scaleX(0.8562);transform-origin:0 0;">12</span>
<span class="t" style="left:627.78px;top:70.33px;font-size:10.5px;line-height:12.065px;color:#b0b0b0;transform:scaleX(0.8562);transform-origin:0 0;">14</span>
<span class="t" style="left:656.42px;top:70.33px;font-size:10.5px;line-height:12.065px;color:#b0b0b0;transform:scaleX(0.8562);transform-origin:0 0;">16</span>
<span class="t" style="left:685.06px;top:70.33px;font-size:10.5px;line-height:12.065px;color:#b0b0b0;transform:scaleX(0.8562);transform-origin:0 0;">18</span>
<span class="t" style="left:713.70px;top:70.33px;font-size:10.5px;line-height:12.065px;color:#b0b0b0;transform:scaleX(0.8562);transform-origin:0 0;">20</span>
<span class="t" style="left:742.34px;top:70.33px;font-size:10.5px;line-height:12.065px;color:#b0b0b0;transform:scaleX(0.8562);transform-origin:0 0;">22</span>
<span class="t" style="left:770.98px;top:70.33px;font-size:10.5px;line-height:12.065px;color:#b0b0b0;transform:scaleX(0.8562);transform-origin:0 0;">24</span>
<div class="r" style="left:32px;top:82px;width:13px;height:717px;background:#4b4b4b;"></div>
<svg style="left:32px;top:82px" width="13" height="717" viewBox="0 0 13 717"><rect y="0.98" x="11" height="1" width="2" fill="#686868"/><rect y="8.14" x="0" height="1" width="13" fill="#626262"/><rect y="15.30" x="11" height="1" width="2" fill="#686868"/><rect y="22.46" x="9" height="1" width="4" fill="#686868"/><rect y="29.62" x="11" height="1" width="2" fill="#686868"/><rect y="36.78" x="0" height="1" width="13" fill="#626262"/><rect y="43.94" x="11" height="1" width="2" fill="#686868"/><rect y="51.10" x="9" height="1" width="4" fill="#686868"/><rect y="58.26" x="11" height="1" width="2" fill="#686868"/><rect y="65.42" x="0" height="1" width="13" fill="#626262"/><rect y="72.58" x="11" height="1" width="2" fill="#686868"/><rect y="79.74" x="9" height="1" width="4" fill="#686868"/><rect y="86.90" x="11" height="1" width="2" fill="#686868"/><rect y="94.06" x="0" height="1" width="13" fill="#626262"/><rect y="101.22" x="11" height="1" width="2" fill="#686868"/><rect y="108.38" x="9" height="1" width="4" fill="#686868"/><rect y="115.54" x="11" height="1" width="2" fill="#686868"/><rect y="122.70" x="0" height="1" width="13" fill="#626262"/><rect y="129.86" x="11" height="1" width="2" fill="#686868"/><rect y="137.02" x="9" height="1" width="4" fill="#686868"/><rect y="144.18" x="11" height="1" width="2" fill="#686868"/><rect y="151.34" x="0" height="1" width="13" fill="#626262"/><rect y="158.50" x="11" height="1" width="2" fill="#686868"/><rect y="165.66" x="9" height="1" width="4" fill="#686868"/><rect y="172.82" x="11" height="1" width="2" fill="#686868"/><rect y="179.98" x="0" height="1" width="13" fill="#626262"/><rect y="187.14" x="11" height="1" width="2" fill="#686868"/><rect y="194.30" x="9" height="1" width="4" fill="#686868"/><rect y="201.46" x="11" height="1" width="2" fill="#686868"/><rect y="208.62" x="0" height="1" width="13" fill="#626262"/><rect y="215.78" x="11" height="1" width="2" fill="#686868"/><rect y="222.94" x="9" height="1" width="4" fill="#686868"/><rect y="230.10" x="11" height="1" width="2" fill="#686868"/><rect y="237.26" x="0" height="1" width="13" fill="#626262"/><rect y="244.42" x="11" height="1" width="2" fill="#686868"/><rect y="251.58" x="9" height="1" width="4" fill="#686868"/><rect y="258.74" x="11" height="1" width="2" fill="#686868"/><rect y="265.90" x="0" height="1" width="13" fill="#626262"/><rect y="273.06" x="11" height="1" width="2" fill="#686868"/><rect y="280.22" x="9" height="1" width="4" fill="#686868"/><rect y="287.38" x="11" height="1" width="2" fill="#686868"/><rect y="294.54" x="0" height="1" width="13" fill="#626262"/><rect y="301.70" x="11" height="1" width="2" fill="#686868"/><rect y="308.86" x="9" height="1" width="4" fill="#686868"/><rect y="316.02" x="11" height="1" width="2" fill="#686868"/><rect y="323.18" x="0" height="1" width="13" fill="#626262"/><rect y="330.34" x="11" height="1" width="2" fill="#686868"/><rect y="337.50" x="9" height="1" width="4" fill="#686868"/><rect y="344.66" x="11" height="1" width="2" fill="#686868"/><rect y="351.82" x="0" height="1" width="13" fill="#626262"/><rect y="358.98" x="11" height="1" width="2" fill="#686868"/><rect y="366.14" x="9" height="1" width="4" fill="#686868"/><rect y="373.30" x="11" height="1" width="2" fill="#686868"/><rect y="380.46" x="0" height="1" width="13" fill="#626262"/><rect y="387.62" x="11" height="1" width="2" fill="#686868"/><rect y="394.78" x="9" height="1" width="4" fill="#686868"/><rect y="401.94" x="11" height="1" width="2" fill="#686868"/><rect y="409.10" x="0" height="1" width="13" fill="#626262"/><rect y="416.26" x="11" height="1" width="2" fill="#686868"/><rect y="423.42" x="9" height="1" width="4" fill="#686868"/><rect y="430.58" x="11" height="1" width="2" fill="#686868"/><rect y="437.74" x="0" height="1" width="13" fill="#626262"/><rect y="444.90" x="11" height="1" width="2" fill="#686868"/><rect y="452.06" x="9" height="1" width="4" fill="#686868"/><rect y="459.22" x="11" height="1" width="2" fill="#686868"/><rect y="466.38" x="0" height="1" width="13" fill="#626262"/><rect y="473.54" x="11" height="1" width="2" fill="#686868"/><rect y="480.70" x="9" height="1" width="4" fill="#686868"/><rect y="487.86" x="11" height="1" width="2" fill="#686868"/><rect y="495.02" x="0" height="1" width="13" fill="#626262"/><rect y="502.18" x="11" height="1" width="2" fill="#686868"/><rect y="509.34" x="9" height="1" width="4" fill="#686868"/><rect y="516.50" x="11" height="1" width="2" fill="#686868"/><rect y="523.66" x="0" height="1" width="13" fill="#626262"/><rect y="530.82" x="11" height="1" width="2" fill="#686868"/><rect y="537.98" x="9" height="1" width="4" fill="#686868"/><rect y="545.14" x="11" height="1" width="2" fill="#686868"/><rect y="552.30" x="0" height="1" width="13" fill="#626262"/><rect y="559.46" x="11" height="1" width="2" fill="#686868"/><rect y="566.62" x="9" height="1" width="4" fill="#686868"/><rect y="573.78" x="11" height="1" width="2" fill="#686868"/><rect y="580.94" x="0" height="1" width="13" fill="#626262"/><rect y="588.10" x="11" height="1" width="2" fill="#686868"/><rect y="595.26" x="9" height="1" width="4" fill="#686868"/><rect y="602.42" x="11" height="1" width="2" fill="#686868"/><rect y="609.58" x="0" height="1" width="13" fill="#626262"/><rect y="616.74" x="11" height="1" width="2" fill="#686868"/><rect y="623.90" x="9" height="1" width="4" fill="#686868"/><rect y="631.06" x="11" height="1" width="2" fill="#686868"/><rect y="638.22" x="0" height="1" width="13" fill="#626262"/><rect y="645.38" x="11" height="1" width="2" fill="#686868"/><rect y="652.54" x="9" height="1" width="4" fill="#686868"/><rect y="659.70" x="11" height="1" width="2" fill="#686868"/><rect y="666.86" x="0" height="1" width="13" fill="#626262"/><rect y="674.02" x="11" height="1" width="2" fill="#686868"/><rect y="681.18" x="9" height="1" width="4" fill="#686868"/><rect y="688.34" x="11" height="1" width="2" fill="#686868"/><rect y="695.50" x="0" height="1" width="13" fill="#626262"/><rect y="702.66" x="11" height="1" width="2" fill="#686868"/><rect y="709.82" x="9" height="1" width="4" fill="#686868"/></svg>
<span class="t" style="left:33.20px;top:90.37px;font-size:10.5px;line-height:12.065px;color:#b0b0b0;transform:scaleX(0.8391);transform-origin:0 0;">8</span>
<span class="t" style="left:33.20px;top:119.01px;font-size:10.5px;line-height:12.065px;color:#b0b0b0;transform:scaleX(0.8391);transform-origin:0 0;">6</span>
<span class="t" style="left:33.20px;top:147.65px;font-size:10.5px;line-height:12.065px;color:#b0b0b0;transform:scaleX(0.8391);transform-origin:0 0;">4</span>
<span class="t" style="left:33.20px;top:176.29px;font-size:10.5px;line-height:12.065px;color:#b0b0b0;transform:scaleX(0.8391);transform-origin:0 0;">2</span>
<span class="t" style="left:33.20px;top:204.93px;font-size:10.5px;line-height:12.065px;color:#b0b0b0;transform:scaleX(0.8391);transform-origin:0 0;">0</span>
<span class="t" style="left:33.20px;top:233.57px;font-size:10.5px;line-height:12.065px;color:#b0b0b0;transform:scaleX(0.8391);transform-origin:0 0;">2</span>
<span class="t" style="left:33.20px;top:262.21px;font-size:10.5px;line-height:12.065px;color:#b0b0b0;transform:scaleX(0.8391);transform-origin:0 0;">4</span>
<span class="t" style="left:33.20px;top:290.85px;font-size:10.5px;line-height:12.065px;color:#b0b0b0;transform:scaleX(0.8391);transform-origin:0 0;">6</span>
<span class="t" style="left:33.20px;top:319.49px;font-size:10.5px;line-height:12.065px;color:#b0b0b0;transform:scaleX(0.8391);transform-origin:0 0;">8</span>
<span class="t" style="left:33.20px;top:348.13px;font-size:10.5px;line-height:12.065px;color:#b0b0b0;transform:scaleX(0.8391);transform-origin:0 0;">1</span>
<span class="t" style="left:33.20px;top:356.73px;font-size:10.5px;line-height:12.065px;color:#b0b0b0;transform:scaleX(0.8391);transform-origin:0 0;">0</span>
<span class="t" style="left:33.20px;top:376.77px;font-size:10.5px;line-height:12.065px;color:#b0b0b0;transform:scaleX(0.8391);transform-origin:0 0;">1</span>
<span class="t" style="left:33.20px;top:385.37px;font-size:10.5px;line-height:12.065px;color:#b0b0b0;transform:scaleX(0.8391);transform-origin:0 0;">2</span>
<span class="t" style="left:33.20px;top:405.41px;font-size:10.5px;line-height:12.065px;color:#b0b0b0;transform:scaleX(0.8391);transform-origin:0 0;">1</span>
<span class="t" style="left:33.20px;top:414.01px;font-size:10.5px;line-height:12.065px;color:#b0b0b0;transform:scaleX(0.8391);transform-origin:0 0;">4</span>
<span class="t" style="left:33.20px;top:434.05px;font-size:10.5px;line-height:12.065px;color:#b0b0b0;transform:scaleX(0.8391);transform-origin:0 0;">1</span>
<span class="t" style="left:33.20px;top:442.65px;font-size:10.5px;line-height:12.065px;color:#b0b0b0;transform:scaleX(0.8391);transform-origin:0 0;">6</span>
<span class="t" style="left:33.20px;top:462.69px;font-size:10.5px;line-height:12.065px;color:#b0b0b0;transform:scaleX(0.8391);transform-origin:0 0;">1</span>
<span class="t" style="left:33.20px;top:471.29px;font-size:10.5px;line-height:12.065px;color:#b0b0b0;transform:scaleX(0.8391);transform-origin:0 0;">8</span>
<span class="t" style="left:33.20px;top:491.33px;font-size:10.5px;line-height:12.065px;color:#b0b0b0;transform:scaleX(0.8391);transform-origin:0 0;">2</span>
<span class="t" style="left:33.20px;top:499.93px;font-size:10.5px;line-height:12.065px;color:#b0b0b0;transform:scaleX(0.8391);transform-origin:0 0;">0</span>
<span class="t" style="left:33.20px;top:519.97px;font-size:10.5px;line-height:12.065px;color:#b0b0b0;transform:scaleX(0.8391);transform-origin:0 0;">2</span>
<span class="t" style="left:33.20px;top:528.57px;font-size:10.5px;line-height:12.065px;color:#b0b0b0;transform:scaleX(0.8391);transform-origin:0 0;">2</span>
<span class="t" style="left:33.20px;top:548.61px;font-size:10.5px;line-height:12.065px;color:#b0b0b0;transform:scaleX(0.8391);transform-origin:0 0;">2</span>
<span class="t" style="left:33.20px;top:557.21px;font-size:10.5px;line-height:12.065px;color:#b0b0b0;transform:scaleX(0.8391);transform-origin:0 0;">4</span>
<span class="t" style="left:33.20px;top:577.25px;font-size:10.5px;line-height:12.065px;color:#b0b0b0;transform:scaleX(0.8391);transform-origin:0 0;">2</span>
<span class="t" style="left:33.20px;top:585.85px;font-size:10.5px;line-height:12.065px;color:#b0b0b0;transform:scaleX(0.8391);transform-origin:0 0;">6</span>
<span class="t" style="left:33.20px;top:605.89px;font-size:10.5px;line-height:12.065px;color:#b0b0b0;transform:scaleX(0.8391);transform-origin:0 0;">2</span>
<span class="t" style="left:33.20px;top:614.49px;font-size:10.5px;line-height:12.065px;color:#b0b0b0;transform:scaleX(0.8391);transform-origin:0 0;">8</span>
<span class="t" style="left:33.20px;top:634.53px;font-size:10.5px;line-height:12.065px;color:#b0b0b0;transform:scaleX(0.8391);transform-origin:0 0;">3</span>
<span class="t" style="left:33.20px;top:643.13px;font-size:10.5px;line-height:12.065px;color:#b0b0b0;transform:scaleX(0.8391);transform-origin:0 0;">0</span>
<span class="t" style="left:33.20px;top:663.17px;font-size:10.5px;line-height:12.065px;color:#b0b0b0;transform:scaleX(0.8391);transform-origin:0 0;">3</span>
<span class="t" style="left:33.20px;top:671.77px;font-size:10.5px;line-height:12.065px;color:#b0b0b0;transform:scaleX(0.8391);transform-origin:0 0;">2</span>
<span class="t" style="left:33.20px;top:691.81px;font-size:10.5px;line-height:12.065px;color:#b0b0b0;transform:scaleX(0.8391);transform-origin:0 0;">3</span>
<span class="t" style="left:33.20px;top:700.41px;font-size:10.5px;line-height:12.065px;color:#b0b0b0;transform:scaleX(0.8391);transform-origin:0 0;">4</span>
<span class="t" style="left:33.20px;top:720.45px;font-size:10.5px;line-height:12.065px;color:#b0b0b0;transform:scaleX(0.8391);transform-origin:0 0;">3</span>
<span class="t" style="left:33.20px;top:729.05px;font-size:10.5px;line-height:12.065px;color:#b0b0b0;transform:scaleX(0.8391);transform-origin:0 0;">6</span>
<span class="t" style="left:33.20px;top:749.09px;font-size:10.5px;line-height:12.065px;color:#b0b0b0;transform:scaleX(0.8391);transform-origin:0 0;">3</span>
<span class="t" style="left:33.20px;top:757.69px;font-size:10.5px;line-height:12.065px;color:#b0b0b0;transform:scaleX(0.8391);transform-origin:0 0;">8</span>
<span class="t" style="left:33.20px;top:777.73px;font-size:10.5px;line-height:12.065px;color:#b0b0b0;transform:scaleX(0.8391);transform-origin:0 0;">4</span>
<span class="t" style="left:33.20px;top:786.33px;font-size:10.5px;line-height:12.065px;color:#b0b0b0;transform:scaleX(0.8391);transform-origin:0 0;">0</span>
<div class="r" style="left:32px;top:68.5px;width:13px;height:13.5px;background:#565656;"></div>
<div class="r" style="left:795px;top:68.5px;width:13px;height:731px;background:#4d4d4d;"></div>
<svg style="left:798.5px;top:75.5px" width="6" height="4" viewBox="0 0 6 4"><path d="M0.5 3.5 L3 0.8 L5.5 3.5" fill="none" stroke="#b4b4b4" stroke-width="1.1"/></svg>
<svg style="left:798.5px;top:788px" width="6" height="4" viewBox="0 0 6 4"><path d="M0.5 0.5 L3 3.2 L5.5 0.5" fill="none" stroke="#b4b4b4" stroke-width="1.1"/></svg>
<div class="r" style="left:797px;top:288px;width:9.5px;height:289px;background:#686868;"></div>
<div class="r" style="left:32px;top:799px;width:776px;height:13px;background:#4d4d4d;"></div>
<div class="r" style="left:32px;top:799px;width:40px;height:13px;background:#464646;"></div>
<span class="t" style="left:37.60px;top:800.67px;font-size:8.5px;line-height:9.767px;color:#e2e2e2;transform:scaleX(0.8672);transform-origin:0 0;">12.22%</span>
<span class="t" style="left:84.00px;top:800.67px;font-size:8.5px;line-height:9.767px;color:#d6d6d6;transform:scaleX(0.8969);transform-origin:0 0;">44.653 in x 32.793 in (150 ppi)</span>
<svg style="left:205px;top:802px" width="4" height="7" viewBox="0 0 4 7"><path d="M0.5 0.5 L3.5 3.5 L0.5 6.5" fill="none" stroke="#bdbdbd" stroke-width="1"/></svg>
<svg style="left:220px;top:802.5px" width="4" height="6" viewBox="0 0 4 6"><path d="M3.5 0.5 L0.8 3 L3.5 5.5" fill="none" stroke="#8d8d8d" stroke-width="1"/></svg>
<svg style="left:785.5px;top:802.5px" width="4" height="6" viewBox="0 0 4 6"><path d="M0.5 0.5 L3.2 3 L0.5 5.5" fill="none" stroke="#8d8d8d" stroke-width="1"/></svg>
<div class="r" style="left:399.5px;top:800.5px;width:209px;height:9px;background:#686868;"></div>
<div class="r" style="left:808px;top:46px;width:2px;height:766px;background:#3a3a3a;"></div>
<span class="t" style="left:818.00px;top:52.35px;font-size:9.5px;line-height:10.915px;color:#b4b4b4;transform:scaleX(0.8757);transform-origin:0 0;font-weight:700;">DESIGN HERE-SHORT.psd @ 8.33% (GUIDE, RGB/8) *</span>
<svg style="left:1035.5px;top:54px" width="6" height="6" viewBox="0 0 6 6"><path d="M0.5 0.5 L5.5 5.5 M5.5 0.5 L0.5 5.5" stroke="#a0a0a0" stroke-width="1"/></svg>
<div class="r" style="left:1045px;top:49px;width:1px;height:16px;background:#4c4c4c;"></div>
<div class="r" style="left:810px;top:68.5px;width:474px;height:744px;background:#4b4b4b;"></div>
<div class="r" style="left:823.5px;top:82px;width:446px;height:717px;background:#282828;"></div>
<div class="r" style="left:823.5px;top:68.5px;width:446.5px;height:13.5px;background:#4b4b4b;"></div>
<svg style="left:823.5px;top:68.5px" width="446.5" height="13.5" viewBox="0 0 446.5 13.5"><rect x="3.54" y="11" width="1" height="2" fill="#686868"/><rect x="8.46" y="9" width="1" height="4" fill="#686868"/><rect x="13.38" y="11" width="1" height="2" fill="#686868"/><rect x="18.30" y="0" width="1" height="13" fill="#626262"/><rect x="23.22" y="11" width="1" height="2" fill="#686868"/><rect x="28.14" y="9" width="1" height="4" fill="#686868"/><rect x="33.06" y="11" width="1" height="2" fill="#686868"/><rect x="37.98" y="9" width="1" height="4" fill="#686868"/><rect x="42.90" y="11" width="1" height="2" fill="#686868"/><rect x="47.82" y="9" width="1" height="4" fill="#686868"/><rect x="52.74" y="11" width="1" height="2" fill="#686868"/><rect x="57.66" y="9" width="1" height="4" fill="#686868"/><rect x="62.58" y="11" width="1" height="2" fill="#686868"/><rect x="67.50" y="0" width="1" height="13" fill="#626262"/><rect x="72.42" y="11" width="1" height="2" fill="#686868"/><rect x="77.34" y="9" width="1" height="4" fill="#686868"/><rect x="82.26" y="11" width="1" height="2" fill="#686868"/><rect x="87.18" y="9" width="1" height="4" fill="#686868"/><rect x="92.10" y="11" width="1" height="2" fill="#686868"/><rect x="97.02" y="9" width="1" height="4" fill="#686868"/><rect x="101.94" y="11" width="1" height="2" fill="#686868"/><rect x="106.86" y="9" width="1" height="4" fill="#686868"/><rect x="111.78" y="11" width="1" height="2" fill="#686868"/><rect x="116.70" y="0" width="1" height="13" fill="#626262"/><rect x="121.62" y="11" width="1" height="2" fill="#686868"/><rect x="126.54" y="9" width="1" height="4" fill="#686868"/><rect x="131.46" y="11" width="1" height="2" fill="#686868"/><rect x="136.38" y="9" width="1" height="4" fill="#686868"/><rect x="141.30" y="11" width="1" height="2" fill="#686868"/><rect x="146.22" y="9" width="1" height="4" fill="#686868"/><rect x="151.14" y="11" width="1" height="2" fill="#686868"/><rect x="156.06" y="9" width="1" height="4" fill="#686868"/><rect x="160.98" y="11" width="1" height="2" fill="#686868"/><rect x="165.90" y="0" width="1" height="13" fill="#626262"/><rect x="170.82" y="11" width="1" height="2" fill="#686868"/><rect x="175.74" y="9" width="1" height="4" fill="#686868"/><rect x="180.66" y="11" width="1" height="2" fill="#686868"/><rect x="185.58" y="9" width="1" height="4" fill="#686868"/><rect x="190.50" y="11" width="1" height="2" fill="#686868"/><rect x="195.42" y="9" width="1" height="4" fill="#686868"/><rect x="200.34" y="11" width="1" height="2" fill="#686868"/><rect x="205.26" y="9" width="1" height="4" fill="#686868"/><rect x="210.18" y="11" width="1" height="2" fill="#686868"/><rect x="215.10" y="0" width="1" height="13" fill="#626262"/><rect x="220.02" y="11" width="1" height="2" fill="#686868"/><rect x="224.94" y="9" width="1" height="4" fill="#686868"/><rect x="229.86" y="11" width="1" height="2" fill="#686868"/><rect x="234.78" y="9" width="1" height="4" fill="#686868"/><rect x="239.70" y="11" width="1" height="2" fill="#686868"/><rect x="244.62" y="9" width="1" height="4" fill="#686868"/><rect x="249.54" y="11" width="1" height="2" fill="#686868"/><rect x="254.46" y="9" width="1" height="4" fill="#686868"/><rect x="259.38" y="11" width="1" height="2" fill="#686868"/><rect x="264.30" y="0" width="1" height="13" fill="#626262"/><rect x="269.22" y="11" width="1" height="2" fill="#686868"/><rect x="274.14" y="9" width="1" height="4" fill="#686868"/><rect x="279.06" y="11" width="1" height="2" fill="#686868"/><rect x="283.98" y="9" width="1" height="4" fill="#686868"/><rect x="288.90" y="11" width="1" height="2" fill="#686868"/><rect x="293.82" y="9" width="1" height="4" fill="#686868"/><rect x="298.74" y="11" width="1" height="2" fill="#686868"/><rect x="303.66" y="9" width="1" height="4" fill="#686868"/><rect x="308.58" y="11" width="1" height="2" fill="#686868"/><rect x="313.50" y="0" width="1" height="13" fill="#626262"/><rect x="318.42" y="11" width="1" height="2" fill="#686868"/><rect x="323.34" y="9" width="1" height="4" fill="#686868"/><rect x="328.26" y="11" width="1" height="2" fill="#686868"/><rect x="333.18" y="9" width="1" height="4" fill="#686868"/><rect x="338.10" y="11" width="1" height="2" fill="#686868"/><rect x="343.02" y="9" width="1" height="4" fill="#686868"/><rect x="347.94" y="11" width="1" height="2" fill="#686868"/><rect x="352.86" y="9" width="1" height="4" fill="#686868"/><rect x="357.78" y="11" width="1" height="2" fill="#686868"/><rect x="362.70" y="0" width="1" height="13" fill="#626262"/><rect x="367.62" y="11" width="1" height="2" fill="#686868"/><rect x="372.54" y="9" width="1" height="4" fill="#686868"/><rect x="377.46" y="11" width="1" height="2" fill="#686868"/><rect x="382.38" y="9" width="1" height="4" fill="#686868"/><rect x="387.30" y="11" width="1" height="2" fill="#686868"/><rect x="392.22" y="9" width="1" height="4" fill="#686868"/><rect x="397.14" y="11" width="1" height="2" fill="#686868"/><rect x="402.06" y="9" width="1" height="4" fill="#686868"/><rect x="406.98" y="11" width="1" height="2" fill="#686868"/><rect x="411.90" y="0" width="1" height="13" fill="#626262"/><rect x="416.82" y="11" width="1" height="2" fill="#686868"/><rect x="421.74" y="9" width="1" height="4" fill="#686868"/><rect x="426.66" y="11" width="1" height="2" fill="#686868"/><rect x="431.58" y="9" width="1" height="4" fill="#686868"/><rect x="436.50" y="11" width="1" height="2" fill="#686868"/><rect x="441.42" y="9" width="1" height="4" fill="#686868"/></svg>
<span class="t" style="left:843.70px;top:70.33px;font-size:10.5px;line-height:12.065px;color:#b0b0b0;transform:scaleX(0.8391);transform-origin:0 0;">5</span>
<span class="t" style="left:892.90px;top:70.33px;font-size:10.5px;line-height:12.065px;color:#b0b0b0;transform:scaleX(0.8391);transform-origin:0 0;">0</span>
<span class="t" style="left:942.10px;top:70.33px;font-size:10.5px;line-height:12.065px;color:#b0b0b0;transform:scaleX(0.8391);transform-origin:0 0;">5</span>
<span class="t" style="left:991.30px;top:70.33px;font-size:10.5px;line-height:12.065px;color:#b0b0b0;transform:scaleX(0.8562);transform-origin:0 0;">10</span>
<span class="t" style="left:1040.50px;top:70.33px;font-size:10.5px;line-height:12.065px;color:#b0b0b0;transform:scaleX(0.8562);transform-origin:0 0;">15</span>
<span class="t" style="left:1089.70px;top:70.33px;font-size:10.5px;line-height:12.065px;color:#b0b0b0;transform:scaleX(0.8562);transform-origin:0 0;">20</span>
<span class="t" style="left:1138.90px;top:70.33px;font-size:10.5px;line-height:12.065px;color:#b0b0b0;transform:scaleX(0.8562);transform-origin:0 0;">25</span>
<span class="t" style="left:1188.10px;top:70.33px;font-size:10.5px;line-height:12.065px;color:#b0b0b0;transform:scaleX(0.8562);transform-origin:0 0;">30</span>
<span class="t" style="left:1237.30px;top:70.33px;font-size:10.5px;line-height:12.065px;color:#b0b0b0;transform:scaleX(0.8562);transform-origin:0 0;">35</span>
<div class="r" style="left:810px;top:82px;width:13.5px;height:717px;background:#4b4b4b;"></div>
<svg style="left:810px;top:82px" width="13.5" height="717" viewBox="0 0 13.5 717"><rect y="4.34" x="11" height="1" width="2" fill="#686868"/><rect y="9.26" x="9" height="1" width="4" fill="#686868"/><rect y="14.18" x="11" height="1" width="2" fill="#686868"/><rect y="19.10" x="0" height="1" width="13" fill="#626262"/><rect y="24.02" x="11" height="1" width="2" fill="#686868"/><rect y="28.94" x="9" height="1" width="4" fill="#686868"/><rect y="33.86" x="11" height="1" width="2" fill="#686868"/><rect y="38.78" x="9" height="1" width="4" fill="#686868"/><rect y="43.70" x="11" height="1" width="2" fill="#686868"/><rect y="48.62" x="9" height="1" width="4" fill="#686868"/><rect y="53.54" x="11" height="1" width="2" fill="#686868"/><rect y="58.46" x="9" height="1" width="4" fill="#686868"/><rect y="63.38" x="11" height="1" width="2" fill="#686868"/><rect y="68.30" x="0" height="1" width="13" fill="#626262"/><rect y="73.22" x="11" height="1" width="2" fill="#686868"/><rect y="78.14" x="9" height="1" width="4" fill="#686868"/><rect y="83.06" x="11" height="1" width="2" fill="#686868"/><rect y="87.98" x="9" height="1" width="4" fill="#686868"/><rect y="92.90" x="11" height="1" width="2" fill="#686868"/><rect y="97.82" x="9" height="1" width="4" fill="#686868"/><rect y="102.74" x="11" height="1" width="2" fill="#686868"/><rect y="107.66" x="9" height="1" width="4" fill="#686868"/><rect y="112.58" x="11" height="1" width="2" fill="#686868"/><rect y="117.50" x="0" height="1" width="13" fill="#626262"/><rect y="122.42" x="11" height="1" width="2" fill="#686868"/><rect y="127.34" x="9" height="1" width="4" fill="#686868"/><rect y="132.26" x="11" height="1" width="2" fill="#686868"/><rect y="137.18" x="9" height="1" width="4" fill="#686868"/><rect y="142.10" x="11" height="1" width="2" fill="#686868"/><rect y="147.02" x="9" height="1" width="4" fill="#686868"/><rect y="151.94" x="11" height="1" width="2" fill="#686868"/><rect y="156.86" x="9" height="1" width="4" fill="#686868"/><rect y="161.78" x="11" height="1" width="2" fill="#686868"/><rect y="166.70" x="0" height="1" width="13" fill="#626262"/><rect y="171.62" x="11" height="1" width="2" fill="#686868"/><rect y="176.54" x="9" height="1" width="4" fill="#686868"/><rect y="181.46" x="11" height="1" width="2" fill="#686868"/><rect y="186.38" x="9" height="1" width="4" fill="#686868"/><rect y="191.30" x="11" height="1" width="2" fill="#686868"/><rect y="196.22" x="9" height="1" width="4" fill="#686868"/><rect y="201.14" x="11" height="1" width="2" fill="#686868"/><rect y="206.06" x="9" height="1" width="4" fill="#686868"/><rect y="210.98" x="11" height="1" width="2" fill="#686868"/><rect y="215.90" x="0" height="1" width="13" fill="#626262"/><rect y="220.82" x="11" height="1" width="2" fill="#686868"/><rect y="225.74" x="9" height="1" width="4" fill="#686868"/><rect y="230.66" x="11" height="1" width="2" fill="#686868"/><rect y="235.58" x="9" height="1" width="4" fill="#686868"/><rect y="240.50" x="11" height="1" width="2" fill="#686868"/><rect y="245.42" x="9" height="1" width="4" fill="#686868"/><rect y="250.34" x="11" height="1" width="2" fill="#686868"/><rect y="255.26" x="9" height="1" width="4" fill="#686868"/><rect y="260.18" x="11" height="1" width="2" fill="#686868"/><rect y="265.10" x="0" height="1" width="13" fill="#626262"/><rect y="270.02" x="11" height="1" width="2" fill="#686868"/><rect y="274.94" x="9" height="1" width="4" fill="#686868"/><rect y="279.86" x="11" height="1" width="2" fill="#686868"/><rect y="284.78" x="9" height="1" width="4" fill="#686868"/><rect y="289.70" x="11" height="1" width="2" fill="#686868"/><rect y="294.62" x="9" height="1" width="4" fill="#686868"/><rect y="299.54" x="11" height="1" width="2" fill="#686868"/><rect y="304.46" x="9" height="1" width="4" fill="#686868"/><rect y="309.38" x="11" height="1" width="2" fill="#686868"/><rect y="314.30" x="0" height="1" width="13" fill="#626262"/><rect y="319.22" x="11" height="1" width="2" fill="#686868"/><rect y="324.14" x="9" height="1" width="4" fill="#686868"/><rect y="329.06" x="11" height="1" width="2" fill="#686868"/><rect y="333.98" x="9" height="1" width="4" fill="#686868"/><rect y="338.90" x="11" height="1" width="2" fill="#686868"/><rect y="343.82" x="9" height="1" width="4" fill="#686868"/><rect y="348.74" x="11" height="1" width="2" fill="#686868"/><rect y="353.66" x="9" height="1" width="4" fill="#686868"/><rect y="358.58" x="11" height="1" width="2" fill="#686868"/><rect y="363.50" x="0" height="1" width="13" fill="#626262"/><rect y="368.42" x="11" height="1" width="2" fill="#686868"/><rect y="373.34" x="9" height="1" width="4" fill="#686868"/><rect y="378.26" x="11" height="1" width="2" fill="#686868"/><rect y="383.18" x="9" height="1" width="4" fill="#686868"/><rect y="388.10" x="11" height="1" width="2" fill="#686868"/><rect y="393.02" x="9" height="1" width="4" fill="#686868"/><rect y="397.94" x="11" height="1" width="2" fill="#686868"/><rect y="402.86" x="9" height="1" width="4" fill="#686868"/><rect y="407.78" x="11" height="1" width="2" fill="#686868"/><rect y="412.70" x="0" height="1" width="13" fill="#626262"/><rect y="417.62" x="11" height="1" width="2" fill="#686868"/><rect y="422.54" x="9" height="1" width="4" fill="#686868"/><rect y="427.46" x="11" height="1" width="2" fill="#686868"/><rect y="432.38" x="9" height="1" width="4" fill="#686868"/><rect y="437.30" x="11" height="1" width="2" fill="#686868"/><rect y="442.22" x="9" height="1" width="4" fill="#686868"/><rect y="447.14" x="11" height="1" width="2" fill="#686868"/><rect y="452.06" x="9" height="1" width="4" fill="#686868"/><rect y="456.98" x="11" height="1" width="2" fill="#686868"/><rect y="461.90" x="0" height="1" width="13" fill="#626262"/><rect y="466.82" x="11" height="1" width="2" fill="#686868"/><rect y="471.74" x="9" height="1" width="4" fill="#686868"/><rect y="476.66" x="11" height="1" width="2" fill="#686868"/><rect y="481.58" x="9" height="1" width="4" fill="#686868"/><rect y="486.50" x="11" height="1" width="2" fill="#686868"/><rect y="491.42" x="9" height="1" width="4" fill="#686868"/><rect y="496.34" x="11" height="1" width="2" fill="#686868"/><rect y="501.26" x="9" height="1" width="4" fill="#686868"/><rect y="506.18" x="11" height="1" width="2" fill="#686868"/><rect y="511.10" x="0" height="1" width="13" fill="#626262"/><rect y="516.02" x="11" height="1" width="2" fill="#686868"/><rect y="520.94" x="9" height="1" width="4" fill="#686868"/><rect y="525.86" x="11" height="1" width="2" fill="#686868"/><rect y="530.78" x="9" height="1" width="4" fill="#686868"/><rect y="535.70" x="11" height="1" width="2" fill="#686868"/><rect y="540.62" x="9" height="1" width="4" fill="#686868"/><rect y="545.54" x="11" height="1" width="2" fill="#686868"/><rect y="550.46" x="9" height="1" width="4" fill="#686868"/><rect y="555.38" x="11" height="1" width="2" fill="#686868"/><rect y="560.30" x="0" height="1" width="13" fill="#626262"/><rect y="565.22" x="11" height="1" width="2" fill="#686868"/><rect y="570.14" x="9" height="1" width="4" fill="#686868"/><rect y="575.06" x="11" height="1" width="2" fill="#686868"/><rect y="579.98" x="9" height="1" width="4" fill="#686868"/><rect y="584.90" x="11" height="1" width="2" fill="#686868"/><rect y="589.82" x="9" height="1" width="4" fill="#686868"/><rect y="594.74" x="11" height="1" width="2" fill="#686868"/><rect y="599.66" x="9" height="1" width="4" fill="#686868"/><rect y="604.58" x="11" height="1" width="2" fill="#686868"/><rect y="609.50" x="0" height="1" width="13" fill="#626262"/><rect y="614.42" x="11" height="1" width="2" fill="#686868"/><rect y="619.34" x="9" height="1" width="4" fill="#686868"/><rect y="624.26" x="11" height="1" width="2" fill="#686868"/><rect y="629.18" x="9" height="1" width="4" fill="#686868"/><rect y="634.10" x="11" height="1" width="2" fill="#686868"/><rect y="639.02" x="9" height="1" width="4" fill="#686868"/><rect y="643.94" x="11" height="1" width="2" fill="#686868"/><rect y="648.86" x="9" height="1" width="4" fill="#686868"/><rect y="653.78" x="11" height="1" width="2" fill="#686868"/><rect y="658.70" x="0" height="1" width="13" fill="#626262"/><rect y="663.62" x="11" height="1" width="2" fill="#686868"/><rect y="668.54" x="9" height="1" width="4" fill="#686868"/><rect y="673.46" x="11" height="1" width="2" fill="#686868"/><rect y="678.38" x="9" height="1" width="4" fill="#686868"/><rect y="683.30" x="11" height="1" width="2" fill="#686868"/><rect y="688.22" x="9" height="1" width="4" fill="#686868"/><rect y="693.14" x="11" height="1" width="2" fill="#686868"/><rect y="698.06" x="9" height="1" width="4" fill="#686868"/><rect y="702.98" x="11" height="1" width="2" fill="#686868"/><rect y="707.90" x="0" height="1" width="13" fill="#626262"/><rect y="712.82" x="11" height="1" width="2" fill="#686868"/></svg>
<span class="t" style="left:811.20px;top:101.33px;font-size:10.5px;line-height:12.065px;color:#b0b0b0;transform:scaleX(0.8391);transform-origin:0 0;">3</span>
<span class="t" style="left:811.20px;top:109.93px;font-size:10.5px;line-height:12.065px;color:#b0b0b0;transform:scaleX(0.8391);transform-origin:0 0;">5</span>
<span class="t" style="left:811.20px;top:150.53px;font-size:10.5px;line-height:12.065px;color:#b0b0b0;transform:scaleX(0.8391);transform-origin:0 0;">3</span>
<span class="t" style="left:811.20px;top:159.13px;font-size:10.5px;line-height:12.065px;color:#b0b0b0;transform:scaleX(0.8391);transform-origin:0 0;">0</span>
<span class="t" style="left:811.20px;top:199.73px;font-size:10.5px;line-height:12.065px;color:#b0b0b0;transform:scaleX(0.8391);transform-origin:0 0;">2</span>
<span class="t" style="left:811.20px;top:208.33px;font-size:10.5px;line-height:12.065px;color:#b0b0b0;transform:scaleX(0.8391);transform-origin:0 0;">5</span>
<span class="t" style="left:811.20px;top:248.93px;font-size:10.5px;line-height:12.065px;color:#b0b0b0;transform:scaleX(0.8391);transform-origin:0 0;">2</span>
<span class="t" style="left:811.20px;top:257.53px;font-size:10.5px;line-height:12.065px;color:#b0b0b0;transform:scaleX(0.8391);transform-origin:0 0;">0</span>
<span class="t" style="left:811.20px;top:298.13px;font-size:10.5px;line-height:12.065px;color:#b0b0b0;transform:scaleX(0.8391);transform-origin:0 0;">1</span>
<span class="t" style="left:811.20px;top:306.73px;font-size:10.5px;line-height:12.065px;color:#b0b0b0;transform:scaleX(0.8391);transform-origin:0 0;">5</span>
<span class="t" style="left:811.20px;top:347.33px;font-size:10.5px;line-height:12.065px;color:#b0b0b0;transform:scaleX(0.8391);transform-origin:0 0;">1</span>
<span class="t" style="left:811.20px;top:355.93px;font-size:10.5px;line-height:12.065px;color:#b0b0b0;transform:scaleX(0.8391);transform-origin:0 0;">0</span>
<span class="t" style="left:811.20px;top:396.53px;font-size:10.5px;line-height:12.065px;color:#b0b0b0;transform:scaleX(0.8391);transform-origin:0 0;">5</span>
<span class="t" style="left:811.20px;top:445.73px;font-size:10.5px;line-height:12.065px;color:#b0b0b0;transform:scaleX(0.8391);transform-origin:0 0;">0</span>
<span class="t" style="left:811.20px;top:494.93px;font-size:10.5px;line-height:12.065px;color:#b0b0b0;transform:scaleX(0.8391);transform-origin:0 0;">5</span>
<span class="t" style="left:811.20px;top:544.13px;font-size:10.5px;line-height:12.065px;color:#b0b0b0;transform:scaleX(0.8391);transform-origin:0 0;">1</span>
<span class="t" style="left:811.20px;top:552.73px;font-size:10.5px;line-height:12.065px;color:#b0b0b0;transform:scaleX(0.8391);transform-origin:0 0;">0</span>
<span class="t" style="left:811.20px;top:593.33px;font-size:10.5px;line-height:12.065px;color:#b0b0b0;transform:scaleX(0.8391);transform-origin:0 0;">1</span>
<span class="t" style="left:811.20px;top:601.93px;font-size:10.5px;line-height:12.065px;color:#b0b0b0;transform:scaleX(0.8391);transform-origin:0 0;">5</span>
<span class="t" style="left:811.20px;top:642.53px;font-size:10.5px;line-height:12.065px;color:#b0b0b0;transform:scaleX(0.8391);transform-origin:0 0;">2</span>
<span class="t" style="left:811.20px;top:651.13px;font-size:10.5px;line-height:12.065px;color:#b0b0b0;transform:scaleX(0.8391);transform-origin:0 0;">0</span>
<span class="t" style="left:811.20px;top:691.73px;font-size:10.5px;line-height:12.065px;color:#b0b0b0;transform:scaleX(0.8391);transform-origin:0 0;">2</span>
<span class="t" style="left:811.20px;top:700.33px;font-size:10.5px;line-height:12.065px;color:#b0b0b0;transform:scaleX(0.8391);transform-origin:0 0;">5</span>
<span class="t" style="left:811.20px;top:740.93px;font-size:10.5px;line-height:12.065px;color:#b0b0b0;transform:scaleX(0.8391);transform-origin:0 0;">3</span>
<span class="t" style="left:811.20px;top:749.53px;font-size:10.5px;line-height:12.065px;color:#b0b0b0;transform:scaleX(0.8391);transform-origin:0 0;">0</span>
<div class="r" style="left:810px;top:68.5px;width:13.5px;height:13.5px;background:#565656;"></div>
<div class="r" style="left:1270px;top:68.5px;width:13.5px;height:731px;background:#4a4a4a;"></div>
<div class="r" style="left:810px;top:799px;width:474px;height:13px;background:#4a4a4a;"></div>
<div class="r" style="left:810px;top:799px;width:185px;height:13px;background:#535353;"></div>
<div class="r" style="left:810px;top:799px;width:38px;height:13px;background:#464646;"></div>
<span class="t" style="left:817.80px;top:800.67px;font-size:8.5px;line-height:9.767px;color:#e2e2e2;transform:scaleX(0.9128);transform-origin:0 0;">8.33%</span>
<span class="t" style="left:862.80px;top:800.67px;font-size:8.5px;line-height:9.767px;color:#d6d6d6;transform:scaleX(0.9056);transform-origin:0 0;">31.953 in x 48.073 in (150 ppi)</span>
<svg style="left:984px;top:802px" width="4" height="7" viewBox="0 0 4 7"><path d="M0.5 0.5 L3.5 3.5 L0.5 6.5" fill="none" stroke="#bdbdbd" stroke-width="1"/></svg>
<div class="r" style="left:32px;top:810.5px;width:1252px;height:1.5px;background:#3c3c3c;"></div>
<div class="r" style="left:1283.5px;top:46px;width:1.5px;height:766px;background:#3a3a3a;"></div>
<!-- chrome_panels -->
<div class="r" style="left:1285px;top:46px;width:28.5px;height:10px;background:#424242;"></div>
<div class="r" style="left:1285px;top:56px;width:28.5px;height:756px;background:#535353;"></div>
<svg style="left:1303.3px;top:48.5px" width="6" height="5" viewBox="0 0 6 5"><path d="M2.5 0.5 L0.5 2.5 L2.5 4.5 M5.5 0.5 L3.5 2.5 L5.5 4.5" fill="none" stroke="#d8d8d8" stroke-width="1"/></svg>
<div class="r" style="left:1285px;top:86.5px;width:28.5px;height:1.5px;background:#3e3e3e;"></div>
<div class="r" style="left:1285px;top:140.5px;width:28.5px;height:1.5px;background:#3e3e3e;"></div>
<div class="r" style="left:1285px;top:194.5px;width:28.5px;height:1.5px;background:#3e3e3e;"></div>
<div class="r" style="left:1292px;top:59.5px;width:14px;height:1px;background:#5e5e5e;"></div>
<div class="r" style="left:1292px;top:90.5px;width:14px;height:1px;background:#5e5e5e;"></div>
<div class="r" style="left:1292px;top:144.5px;width:14px;height:1px;background:#5e5e5e;"></div>
<div class="r" style="left:1292px;top:198px;width:14px;height:1px;background:#5e5e5e;"></div>
<svg style="left:1292px;top:65px" width="15" height="15" viewBox="0 0 15 15"><rect x="0.6" y="0.6" width="3.4" height="3.4" fill="none" stroke="#dcdcdc" stroke-width="1"/><rect x="0.6" y="5.6" width="3.4" height="3.4" fill="none" stroke="#dcdcdc" stroke-width="1"/><rect x="0.2" y="10.4" width="4.2" height="4.2" fill="#dcdcdc"/><path d="M7.4 13.4 C12 12 12.6 6 8.4 3.6" fill="none" stroke="#dcdcdc" stroke-width="1.4"/><path d="M6.6 1.4 L10.6 2.6 L7.4 6Z" fill="#dcdcdc"/></svg>
<svg style="left:1290px;top:97px" width="17" height="16" viewBox="0 0 17 16"><path d="M0.4 1.6 H1.6 M2.8 1.6 H6 M0.4 4.4 H1.6 M2.8 4.4 H6 M0.4 7.2 H1.6 M2.8 7.2 H6" stroke="#dcdcdc" stroke-width="1.2"/><path d="M16 2.2 L9 9.4 L10.4 10.8 Z" fill="#dcdcdc" stroke="#dcdcdc" stroke-width="1.2"/><path d="M8.2 10 C6 10 5.8 12.2 3.8 14.4 C6.8 15 9.8 13.4 9.6 11.4Z" fill="#dcdcdc"/></svg>
<svg style="left:1291px;top:120px" width="16" height="14" viewBox="0 0 16 14"><path d="M0.4 2.6 C0.4 1 5 1 5.8 2 H13.6 V3.2 H5.8 C5 4.4 0.4 4.2 0.4 2.6Z" fill="#dcdcdc"/><path d="M2 9.6 H9.2 V8.4 L11.6 8.6 C13.2 6.4 15 6.6 15.2 10 C15 13.6 13.2 13.6 11.6 11.6 L9.2 11.6 V10.8 H2Z" fill="#dcdcdc"/></svg>
<span class="t" style="left:1292.40px;top:152.07px;font-size:13.5px;line-height:15.511px;color:#e2e2e2;">A</span>
<div class="r" style="left:1303.5px;top:152.5px;width:1.1px;height:13.5px;background:#e2e2e2;"></div>
<span class="t" style="left:1294.20px;top:173.21px;font-size:14px;line-height:16.086px;color:#e2e2e2;font-weight:700;">¶</span>
<span class="t" style="left:1292px;top:204px;font-size:16px;line-height:18px;font-family:'Liberation Serif',serif;font-style:italic;font-weight:700;color:#e2e2e2">A</span>
<div class="r" style="left:1313.5px;top:46px;width:2.5px;height:766px;background:#3a3a3a;"></div>
<div class="r" style="left:1316px;top:46px;width:184px;height:10px;background:#424242;"></div>
<svg style="left:1489px;top:48.5px" width="6" height="5" viewBox="0 0 6 5"><path d="M0.5 0.5 L2.5 2.5 L0.5 4.5 M3.5 0.5 L5.5 2.5 L3.5 4.5" fill="none" stroke="#d8d8d8" stroke-width="1"/></svg>
<div class="r" style="left:1316px;top:56px;width:184px;height:21px;background:#424242;"></div>
<div class="r" style="left:1316px;top:56px;width:51.5px;height:21px;background:#535353;"></div>
<div class="r" style="left:1316px;top:77px;width:184px;height:170px;background:#535353;"></div>
<span class="t" style="left:1322.60px;top:60.15px;font-size:9.5px;line-height:10.915px;color:#f4f4f4;transform:scaleX(0.8172);transform-origin:0 0;font-weight:700;">Properties</span>
<span class="t" style="left:1374.50px;top:60.15px;font-size:9.5px;line-height:10.915px;color:#b0b0b0;transform:scaleX(0.7960);transform-origin:0 0;font-weight:700;">Adjustments</span>
<svg style="left:1488px;top:63.5px" width="8" height="6" viewBox="0 0 8 6"><path d="M0 0.6 H8 M0 2.6 H8 M0 4.6 H8" stroke="#b8b8b8" stroke-width="1.1"/></svg>
<div class="r" style="left:1324.7px;top:82.4px;width:16.8px;height:16.4px;background:#2e2e2e;"></div>
<span class="t" style="left:1328.60px;top:84.39px;font-size:12.5px;line-height:14.363px;color:#f0f0f0;font-family:'Liberation Serif',serif;font-weight:700;">T</span>
<span class="t" style="left:1346.20px;top:86.55px;font-size:9.5px;line-height:10.915px;color:#d8d8d8;transform:scaleX(0.8085);transform-origin:0 0;">Type Layer</span>
<div class="r" style="left:1316px;top:103.5px;width:172px;height:1px;background:#444444;"></div>
<span class="t" style="left:1334.00px;top:109.45px;font-size:9.5px;line-height:10.915px;color:#f0f0f0;transform:scaleX(0.8481);transform-origin:0 0;font-weight:700;">Transform</span>
<svg style="left:1322px;top:110.5px" width="4" height="8" viewBox="0 0 4 8"><path d="M0.6 0.5 L3.5 4 L0.6 7.5" fill="none" stroke="#c4c4c4" stroke-width="1.1"/></svg>
<div class="r" style="left:1316px;top:128.5px;width:172px;height:1px;background:#444444;"></div>
<span class="t" style="left:1334.00px;top:134.55px;font-size:9.5px;line-height:10.915px;color:#f0f0f0;transform:scaleX(0.8612);transform-origin:0 0;font-weight:700;">Character</span>
<svg style="left:1322px;top:135.60000000000002px" width="4" height="8" viewBox="0 0 4 8"><path d="M0.6 0.5 L3.5 4 L0.6 7.5" fill="none" stroke="#c4c4c4" stroke-width="1.1"/></svg>
<div class="r" style="left:1316px;top:153.5px;width:172px;height:1px;background:#444444;"></div>
<span class="t" style="left:1334.00px;top:159.75px;font-size:9.5px;line-height:10.915px;color:#f0f0f0;transform:scaleX(0.8597);transform-origin:0 0;font-weight:700;">Paragraph</span>
<svg style="left:1322px;top:160.8px" width="4" height="8" viewBox="0 0 4 8"><path d="M0.6 0.5 L3.5 4 L0.6 7.5" fill="none" stroke="#c4c4c4" stroke-width="1.1"/></svg>
<div class="r" style="left:1316px;top:178.5px;width:172px;height:1px;background:#444444;"></div>
<span class="t" style="left:1334.00px;top:184.95px;font-size:9.5px;line-height:10.915px;color:#f0f0f0;transform:scaleX(0.8534);transform-origin:0 0;font-weight:700;">Type Options</span>
<svg style="left:1322px;top:186.0px" width="4" height="8" viewBox="0 0 4 8"><path d="M0.6 0.5 L3.5 4 L0.6 7.5" fill="none" stroke="#c4c4c4" stroke-width="1.1"/></svg>
<div class="r" style="left:1316px;top:203.5px;width:172px;height:1px;background:#444444;"></div>
<span class="t" style="left:1334.00px;top:209.65px;font-size:9.5px;line-height:10.915px;color:#f0f0f0;transform:scaleX(0.8343);transform-origin:0 0;font-weight:700;">Quick Actions</span>
<svg style="left:1321.4px;top:211.5px" width="6" height="3.6" viewBox="0 0 6 3.6"><path d="M0.5 0.5 L3.0 3.1 L5.5 0.5" fill="none" stroke="#c0c0c0" stroke-width="1.1"/></svg>
<svg style="left:1462.5px;top:109.5px" width="11.5" height="11" viewBox="0 0 11.5 11"><path d="M2.4 6.6 A3.7 3.7 0 1 0 4.4 2.4" fill="none" stroke="#e0e0e0" stroke-width="1.2"/><path d="M1 1.2 L5.4 1.2 L3 5Z" fill="#e0e0e0"/><path d="M0.6 10.2 H8.6" stroke="#e0e0e0" stroke-width="1.1"/></svg>
<div class="r" style="left:1488px;top:104.5px;width:10px;height:123px;background:#4a4a4a;"></div>
<div class="r" style="left:1488.5px;top:118px;width:9px;height:69px;background:#686868;"></div>
<svg style="left:1490px;top:111.5px" width="6" height="3.5" viewBox="0 0 6 3.5"><path d="M0.5 3.3 L3.0 0.5 L5.5 3.3" fill="none" stroke="#9a9a9a" stroke-width="1.1"/></svg>
<svg style="left:1490px;top:217.5px" width="6" height="3.5" viewBox="0 0 6 3.5"><path d="M0.5 0.5 L3.0 3.0 L5.5 0.5" fill="none" stroke="#9a9a9a" stroke-width="1.1"/></svg>
<div class="r" style="left:1316px;top:247px;width:184px;height:2px;background:#3a3a3a;"></div>
<div class="r" style="left:1316px;top:249px;width:184px;height:22px;background:#424242;"></div>
<div class="r" style="left:1316px;top:249px;width:36.5px;height:22px;background:#535353;"></div>
<div class="r" style="left:1316px;top:271px;width:184px;height:541px;background:#535353;"></div>
<span class="t" style="left:1322.20px;top:253.75px;font-size:9.5px;line-height:10.915px;color:#f4f4f4;transform:scaleX(0.7704);transform-origin:0 0;font-weight:700;">Layers</span>
<span class="t" style="left:1358.80px;top:253.75px;font-size:9.5px;line-height:10.915px;color:#b0b0b0;transform:scaleX(0.7905);transform-origin:0 0;font-weight:700;">Channels</span>
<span class="t" style="left:1405.80px;top:253.75px;font-size:9.5px;line-height:10.915px;color:#b0b0b0;transform:scaleX(0.7885);transform-origin:0 0;font-weight:700;">Paths</span>
<svg style="left:1488px;top:257.5px" width="8" height="6" viewBox="0 0 8 6"><path d="M0 0.6 H8 M0 2.6 H8 M0 4.6 H8" stroke="#b8b8b8" stroke-width="1.1"/></svg>
<div class="r" style="left:1318.8px;top:278px;width:67px;height:14.8px;background:#454545;border-radius:2px"></div>
<svg style="left:1325px;top:281px" width="9" height="9" viewBox="0 0 9 9"><circle cx="3.4" cy="3.4" r="2.7" fill="none" stroke="#e6e6e6" stroke-width="1.2"/><path d="M5.4 5.4 L8.2 8.2" stroke="#e6e6e6" stroke-width="1.4"/></svg>
<span class="t" style="left:1335.60px;top:280.25px;font-size:9.5px;line-height:10.915px;color:#e4e4e4;transform:scaleX(0.8414);transform-origin:0 0;">Kind</span>
<svg style="left:1378.4px;top:284px" width="6" height="3.5" viewBox="0 0 6 3.5"><path d="M0.5 0.5 L3.0 3.0 L5.5 0.5" fill="none" stroke="#c0c0c0" stroke-width="1.1"/></svg>
<svg style="left:1395px;top:281px" width="10.5" height="8.5" viewBox="0 0 10.5 8.5"><rect x="0.6" y="0.6" width="9.3" height="7.3" fill="none" stroke="#e4e4e4" stroke-width="1.1"/><path d="M1.6 6.8 L4 3.6 L5.8 5.6 L7 4.6 L9 6.8Z" fill="#e4e4e4"/><circle cx="7.4" cy="2.6" r="0.8" fill="#e4e4e4"/></svg>
<svg style="left:1414px;top:280.5px" width="10" height="10" viewBox="0 0 10 10"><circle cx="5" cy="5" r="4.3" fill="none" stroke="#e4e4e4" stroke-width="1.1"/><path d="M2 8 A4.3 4.3 0 0 1 8 2 Z" fill="#e4e4e4"/></svg>
<span class="t" style="left:1433.60px;top:279.51px;font-size:11.5px;line-height:13.213px;color:#eaeaea;font-family:'Liberation Serif',serif;font-weight:700;">T</span>
<svg style="left:1451.8px;top:280.5px" width="10" height="10" viewBox="0 0 10 10"><rect x="1.6" y="1.6" width="6.8" height="6.8" fill="none" stroke="#e4e4e4" stroke-width="1.1"/><rect x="0" y="0" width="2.6" height="2.6" fill="#e4e4e4"/><rect x="7.4" y="0" width="2.6" height="2.6" fill="#e4e4e4"/><rect x="0" y="7.4" width="2.6" height="2.6" fill="#e4e4e4"/><rect x="7.4" y="7.4" width="2.6" height="2.6" fill="#e4e4e4"/></svg>
<svg style="left:1472px;top:280px" width="9" height="11" viewBox="0 0 9 11"><path d="M2.6 0.6 H6 L8.4 3 V8 H2.6Z" fill="none" stroke="#e4e4e4" stroke-width="1"/><rect x="0" y="5" width="5.4" height="5.6" fill="#e4e4e4"/><rect x="1.6" y="6.8" width="2.2" height="2" fill="#535353"/></svg>
<div class="r" style="left:1489px;top:278px;width:7px;height:15px;background:#444;border-radius:3.5px"></div>
<div class="r" style="left:1489.6px;top:278.4px;width:6px;height:6px;background:#ededed;border-radius:3px"></div>
<div class="r" style="left:1316px;top:296px;width:184px;height:1px;background:#474747;"></div>
<div class="r" style="left:1318.8px;top:300.2px;width:99.6px;height:14.8px;background:#454545;border-radius:2px"></div>
<span class="t" style="left:1324.60px;top:301.95px;font-size:9.5px;line-height:10.915px;color:#e4e4e4;transform:scaleX(0.8165);transform-origin:0 0;">Normal</span>
<svg style="left:1411px;top:306px" width="6" height="3.5" viewBox="0 0 6 3.5"><path d="M0.5 0.5 L3.0 3.0 L5.5 0.5" fill="none" stroke="#c0c0c0" stroke-width="1.1"/></svg>
<span class="t" style="left:1424.20px;top:301.95px;font-size:9.5px;line-height:10.915px;color:#d8d8d8;transform:scaleX(0.8093);transform-origin:0 0;">Opacity:</span>
<div class="r" style="left:1456.5px;top:300.2px;width:28px;height:14.8px;background:#454545;border-radius:2px 0 0 2px"></div>
<div class="r" style="left:1485.5px;top:300.2px;width:11px;height:14.8px;background:#454545;border-radius:0 2px 2px 0"></div>
<span class="t" style="left:1460.00px;top:301.95px;font-size:9.5px;line-height:10.915px;color:#e4e4e4;transform:scaleX(0.8314);transform-origin:0 0;">100%</span>
<svg style="left:1488px;top:306px" width="6" height="3.5" viewBox="0 0 6 3.5"><path d="M0.5 0.5 L3.0 3.0 L5.5 0.5" fill="none" stroke="#c0c0c0" stroke-width="1.1"/></svg>
<div class="r" style="left:1316px;top:318px;width:184px;height:1px;background:#474747;"></div>
<span class="t" style="left:1320.40px;top:323.35px;font-size:9.5px;line-height:10.915px;color:#d8d8d8;transform:scaleX(0.7751);transform-origin:0 0;">Lock:</span>
<svg style="left:1346.4px;top:323.5px" width="9" height="9" viewBox="0 0 9 9"><rect x="0.5" y="0.5" width="8" height="8" fill="none" stroke="#a8a8a8" stroke-width="1"/><rect x="0.5" y="0.5" width="2.7" height="2.7" fill="#a8a8a8"/><rect x="5.8" y="0.5" width="2.7" height="2.7" fill="#a8a8a8"/><rect x="3.2" y="3.2" width="2.7" height="2.7" fill="#a8a8a8"/><rect x="0.5" y="5.8" width="2.7" height="2.7" fill="#a8a8a8"/><rect x="5.8" y="5.8" width="2.7" height="2.7" fill="#a8a8a8"/></svg>
<svg style="left:1363px;top:322.5px" width="11" height="11" viewBox="0 0 11 11"><path d="M10 0.6 L4.6 6.2 L5.8 7.4 Z" fill="#a4a4a4" stroke="#a4a4a4" stroke-width="1"/><path d="M4 6.8 C2.4 6.8 2.2 8.4 0.6 10.2 C3 10.6 5.2 9.4 5.2 7.8Z" fill="#a4a4a4"/></svg>
<svg style="left:1379.6px;top:322.8px" width="11" height="11" viewBox="0 0 11 11"><path d="M6 0 L8.2 2.6 H6.6 V5.4 H9.4 V3.8 L12 6 L9.4 8.2 V6.6 H6.6 V9.4 H8.2 L6 12 L3.8 9.4 H5.4 V6.6 H2.6 V8.2 L0 6 L2.6 3.8 V5.4 H5.4 V2.6 H3.8 Z" fill="#e4e4e4" transform="scale(0.88)"/></svg>
<svg style="left:1397px;top:323px" width="11" height="10" viewBox="0 0 11 10"><path d="M2 0 V8 H10.6 M0 2 H8.6 V10" fill="none" stroke="#e0e0e0" stroke-width="1.1"/><path d="M3.4 6.6 L7.2 3.4" stroke="#e0e0e0" stroke-width="1" stroke-dasharray="1.2 1"/></svg>
<svg style="left:1415.3px;top:323.2px" width="8.5" height="9.5" viewBox="0 0 8.5 9.5"><path d="M2.1 4 V2.6 A2.1 2.1 0 0 1 6.4 2.6 V4" fill="none" stroke="#eeeeee" stroke-width="1.3"/><rect x="0" y="3.8" width="8.5" height="5.7" rx="0.6" fill="#eeeeee"/><rect x="3.6" y="5.6" width="1.3" height="2" fill="#535353"/></svg>
<span class="t" style="left:1441.60px;top:323.35px;font-size:9.5px;line-height:10.915px;color:#d8d8d8;transform:scaleX(0.7310);transform-origin:0 0;">Fill:</span>
<div class="r" style="left:1456.5px;top:322.2px;width:28px;height:13px;background:#454545;border-radius:2px 0 0 2px"></div>
<div class="r" style="left:1485.5px;top:322.2px;width:11px;height:13px;background:#454545;border-radius:0 2px 2px 0"></div>
<span class="t" style="left:1460.00px;top:323.55px;font-size:9.5px;line-height:10.915px;color:#e4e4e4;transform:scaleX(0.8314);transform-origin:0 0;">100%</span>
<svg style="left:1488px;top:327px" width="6" height="3.5" viewBox="0 0 6 3.5"><path d="M0.5 0.5 L3.0 3.0 L5.5 0.5" fill="none" stroke="#c0c0c0" stroke-width="1.1"/></svg>
<div class="r" style="left:1316px;top:339px;width:172px;height:1px;background:#474747;"></div>
<div class="r" style="left:1339px;top:339px;width:1px;height:453px;background:#4a4a4a;"></div>
<div class="r" style="left:1316px;top:359.5px;width:172px;height:1px;background:#474747;"></div>
<div class="r" style="left:1316px;top:391.5px;width:172px;height:1px;background:#474747;"></div>
<div class="r" style="left:1316px;top:411.5px;width:172px;height:1px;background:#474747;"></div>
<div class="r" style="left:1316px;top:443.5px;width:172px;height:1px;background:#474747;"></div>
<div class="r" style="left:1316px;top:465px;width:172px;height:1px;background:#474747;"></div>
<div class="r" style="left:1316px;top:497px;width:172px;height:1px;background:#474747;"></div>
<div class="r" style="left:1316px;top:529px;width:172px;height:1px;background:#474747;"></div>
<div class="r" style="left:1316px;top:548.5px;width:172px;height:1px;background:#474747;"></div>
<div class="r" style="left:1316px;top:580.5px;width:172px;height:1px;background:#474747;"></div>
<div class="r" style="left:1316px;top:656.3px;width:172px;height:1px;background:#474747;"></div>
<div class="r" style="left:1316px;top:732.7px;width:172px;height:1px;background:#474747;"></div>
<div class="r" style="left:1316px;top:765.2px;width:172px;height:1px;background:#474747;"></div>
<svg style="left:1322px;top:345px" width="11" height="11" viewBox="0 0 11 11"><path d="M1 2 V10 H10" fill="none" stroke="#606060" stroke-width="1"/><path d="M2 0.5 H9 V9" fill="none" stroke="#5b5b5b" stroke-width="1"/></svg>
<svg style="left:1355.4px;top:346.5px" width="4" height="8" viewBox="0 0 4 8"><path d="M0.6 0.5 L3.5 4 L0.6 7.5" fill="none" stroke="#c4c4c4" stroke-width="1.1"/></svg>
<svg style="left:1364px;top:346.4px" width="11" height="9" viewBox="0 0 11 9"><path d="M0 9 V0 H4 L5 1.2 H11 V9Z" fill="#e6e6e6"/><path d="M0 3.2 H11" stroke="#c4c4c4" stroke-width="0.8"/></svg>
<span class="t" style="left:1384.20px;top:345.75px;font-size:9.5px;line-height:10.915px;color:#e0e0e0;transform:scaleX(0.7844);transform-origin:0 0;">GUIDE</span>
<svg style="left:1466px;top:347px" width="8.5" height="9.5" viewBox="0 0 8.5 9.5"><path d="M2.1 4 V2.6 A2.1 2.1 0 0 1 6.4 2.6 V4" fill="none" stroke="#eeeeee" stroke-width="1.3"/><rect x="0" y="3.8" width="8.5" height="5.7" rx="0.6" fill="#eeeeee"/><rect x="3.6" y="5.6" width="1.3" height="2" fill="#535353"/></svg>
<svg style="left:1322px;top:371px" width="11" height="11" viewBox="0 0 11 11"><path d="M1 2 V10 H10" fill="none" stroke="#606060" stroke-width="1"/><path d="M2 0.5 H9 V9" fill="none" stroke="#5b5b5b" stroke-width="1"/></svg>
<div class="r" style="left:1355.2px;top:364px;width:17.5px;height:24.5px;background:#1c58c2;"></div><div class="r" style="left:1362.8px;top:364px;width:1.1px;height:24.5px;background:#b8ff4a;"></div><div class="r" style="left:1358.4px;top:364px;width:0.8px;height:24.5px;background:#55a0e8;"></div><div class="r" style="left:1355.2px;top:384.4px;width:17.5px;height:0.9px;background:#7fd0c0;"></div>
<span class="t" style="left:1379.30px;top:371.55px;font-size:9.5px;line-height:10.915px;color:#e0e0e0;transform:scaleX(0.8109);transform-origin:0 0;">LINE GUIDES</span>
<svg style="left:1322.2px;top:399.0px" width="11" height="7" viewBox="0 0 11 7"><path d="M0.3 3.5 C2.4 0.2 8.6 0.2 10.7 3.5 C8.6 6.8 2.4 6.8 0.3 3.5Z" fill="#eaeaea"/><circle cx="5.5" cy="3.4" r="2.1" fill="#4a4a4a"/><circle cx="5.5" cy="3.4" r="0.9" fill="#eaeaea"/></svg>
<svg style="left:1355.4px;top:398px" width="4" height="8" viewBox="0 0 4 8"><path d="M0.6 0.5 L3.5 4 L0.6 7.5" fill="none" stroke="#c4c4c4" stroke-width="1.1"/></svg>
<svg style="left:1364px;top:397.6px" width="11" height="9" viewBox="0 0 11 9"><path d="M0 9 V0 H4 L5 1.2 H11 V9Z" fill="#e6e6e6"/><path d="M0 3.2 H11" stroke="#c4c4c4" stroke-width="0.8"/></svg>
<span class="t" style="left:1384.20px;top:397.45px;font-size:9.5px;line-height:10.915px;color:#e0e0e0;transform:scaleX(0.8332);transform-origin:0 0;">Group 2</span>
<svg style="left:1322.2px;top:425.0px" width="11" height="7" viewBox="0 0 11 7"><path d="M0.3 3.5 C2.4 0.2 8.6 0.2 10.7 3.5 C8.6 6.8 2.4 6.8 0.3 3.5Z" fill="#eaeaea"/><circle cx="5.5" cy="3.4" r="2.1" fill="#4a4a4a"/><circle cx="5.5" cy="3.4" r="0.9" fill="#eaeaea"/></svg>
<div class="r" style="left:1355.2px;top:416.5px;width:24.2px;height:24px;background:#ffffff;box-shadow:0 0 0 0.6px #2a2a2a"></div>
<div class="r" style="left:1355.2px;top:435.2px;width:24.2px;height:1px;background:#333;"></div>
<div class="r" style="left:1356.5px;top:437.4px;width:21.5px;height:2px;background:#9a9a9a;"></div>
<svg style="left:1382.6px;top:423px" width="5.4" height="11" viewBox="0 0 5.4 11"><rect x="0.7" y="0.7" width="4" height="5.4" rx="2" fill="none" stroke="#dcdcdc" stroke-width="1.1"/><rect x="0.7" y="4.9" width="4" height="5.4" rx="2" fill="none" stroke="#dcdcdc" stroke-width="1.1"/></svg>
<div class="r" style="left:1391.7px;top:416.5px;width:17.3px;height:24px;background:#ffffff;box-shadow:0 0 0 0.6px #2a2a2a"></div>
<span class="t" style="left:1416.30px;top:422.65px;font-size:9.5px;line-height:10.915px;color:#e0e0e0;transform:scaleX(0.7621);transform-origin:0 0;">Color Fill 1</span>
<div class="r" style="left:1316px;top:444px;width:172px;height:21px;background:#424242;"></div>
<svg style="left:1322.2px;top:452.0px" width="11" height="7" viewBox="0 0 11 7"><path d="M0.3 3.5 C2.4 0.2 8.6 0.2 10.7 3.5 C8.6 6.8 2.4 6.8 0.3 3.5Z" fill="#eaeaea"/><circle cx="5.5" cy="3.4" r="2.1" fill="#4a4a4a"/><circle cx="5.5" cy="3.4" r="0.9" fill="#eaeaea"/></svg>
<svg style="left:1341.8px;top:452.4px" width="7" height="4" viewBox="0 0 7 4"><path d="M0.5 0.5 L3.5 3.5 L6.5 0.5" fill="none" stroke="#c8c8c8" stroke-width="1.1"/></svg>
<span class="t" style="left:1356.50px;top:449.65px;font-size:9.5px;line-height:10.915px;color:#f2f2f2;transform:scaleX(0.7944);transform-origin:0 0;font-weight:700;">BACK</span>
<div class="r" style="left:1479.2px;top:465.5px;width:8.6px;height:31.5px;background:#494949;"></div>
<svg style="left:1322px;top:476px" width="11" height="11" viewBox="0 0 11 11"><path d="M1 2 V10 H10" fill="none" stroke="#606060" stroke-width="1"/><path d="M2 0.5 H9 V9" fill="none" stroke="#5b5b5b" stroke-width="1"/></svg>
<div class="r" style="left:1355.2px;top:469.9px;width:17.4px;height:23px;background:#000;"></div>
<svg style="left:1355.2px;top:469.9px" width="17.4" height="23" viewBox="0 0 17.4 23"><path d="M0 0 H4.4 L1.6 6.6 H0Z M17.4 0 H13 L15.8 6.6 H17.4Z" fill="#fff"/><rect x="9" y="14.6" width="8.4" height="8.4" fill="#0a0a0a"/><rect x="10.6" y="16.2" width="5.2" height="5.2" fill="none" stroke="#e8e8e8" stroke-width="1"/><rect x="9.4" y="15" width="2.2" height="2.2" fill="#e8e8e8"/><rect x="14.8" y="15" width="2.2" height="2.2" fill="#e8e8e8"/><rect x="9.4" y="20.4" width="2.2" height="2.2" fill="#e8e8e8"/><rect x="14.8" y="20.4" width="2.2" height="2.2" fill="#e8e8e8"/></svg>
<span class="t" style="left:1379.30px;top:475.25px;font-size:9.5px;line-height:10.915px;color:#e0e0e0;transform:scaleX(0.8110);transform-origin:0 0;">GUIDE</span>
<svg style="left:1453.7px;top:476.6px" width="8.5" height="9.5" viewBox="0 0 8.5 9.5"><path d="M2.1 4 V2.6 A2.1 2.1 0 0 1 6.4 2.6 V4" fill="none" stroke="#eeeeee" stroke-width="1.3"/><rect x="0" y="3.8" width="8.5" height="5.7" rx="0.6" fill="#eeeeee"/><rect x="3.6" y="5.6" width="1.3" height="2" fill="#535353"/></svg>
<span class="t" style="left:1467.4px;top:474.6px;font-size:11.5px;line-height:12px;font-style:italic;color:#e6e6e6;letter-spacing:-0.4px">fx</span>
<svg style="left:1480.6px;top:480px" width="6" height="3.4" viewBox="0 0 6 3.4"><path d="M0.5 0.5 L3.0 2.9 L5.5 0.5" fill="none" stroke="#b8b8b8" stroke-width="1.1"/></svg>
<svg style="left:1322px;top:508px" width="11" height="11" viewBox="0 0 11 11"><path d="M1 2 V10 H10" fill="none" stroke="#606060" stroke-width="1"/><path d="M2 0.5 H9 V9" fill="none" stroke="#5b5b5b" stroke-width="1"/></svg>
<div class="r" style="left:1355.2px;top:500.7px;width:17.5px;height:24.5px;background:#1c58c2;"></div><div class="r" style="left:1362.8px;top:500.7px;width:1.1px;height:24.5px;background:#b8ff4a;"></div><div class="r" style="left:1358.4px;top:500.7px;width:0.8px;height:24.5px;background:#55a0e8;"></div><div class="r" style="left:1355.2px;top:521.1px;width:17.5px;height:0.9px;background:#7fd0c0;"></div>
<span class="t" style="left:1379.30px;top:507.25px;font-size:9.5px;line-height:10.915px;color:#e0e0e0;transform:scaleX(0.8109);transform-origin:0 0;">LINE GUIDES</span>
<svg style="left:1322.2px;top:536.0px" width="11" height="7" viewBox="0 0 11 7"><path d="M0.3 3.5 C2.4 0.2 8.6 0.2 10.7 3.5 C8.6 6.8 2.4 6.8 0.3 3.5Z" fill="#eaeaea"/><circle cx="5.5" cy="3.4" r="2.1" fill="#4a4a4a"/><circle cx="5.5" cy="3.4" r="0.9" fill="#eaeaea"/></svg>
<svg style="left:1353.6px;top:537.4px" width="7" height="4" viewBox="0 0 7 4"><path d="M0.5 0.5 L3.5 3.5 L6.5 0.5" fill="none" stroke="#c8c8c8" stroke-width="1.1"/></svg>
<svg style="left:1364px;top:534.8px" width="11" height="9" viewBox="0 0 11 9"><path d="M0 9 V0 H4 L5 1.2 H11 V9Z" fill="none" stroke="#e0e0e0" stroke-width="1"/><path d="M0 9 V4 H11 V9Z" fill="#e0e0e0"/></svg>
<span class="t" style="left:1384.20px;top:533.65px;font-size:9.5px;line-height:10.915px;color:#e0e0e0;transform:scaleX(0.8332);transform-origin:0 0;">Group 3</span>
<svg style="left:1322.2px;top:561.5px" width="11" height="7" viewBox="0 0 11 7"><path d="M0.3 3.5 C2.4 0.2 8.6 0.2 10.7 3.5 C8.6 6.8 2.4 6.8 0.3 3.5Z" fill="#eaeaea"/><circle cx="5.5" cy="3.4" r="2.1" fill="#4a4a4a"/><circle cx="5.5" cy="3.4" r="0.9" fill="#eaeaea"/></svg>
<div class="r" style="left:1367.7px;top:552.5px;width:16.7px;height:24px;background-color:#fff;background-image:linear-gradient(45deg,#ccc 25%,transparent 25%,transparent 75%,#ccc 75%),linear-gradient(45deg,#ccc 25%,transparent 25%,transparent 75%,#ccc 75%);background-size:6px 6px;background-position:0 0,3px 3px"></div>
<div class="r" style="left:1375.6px;top:567.6px;width:8.8px;height:8.9px;background:#1a1a1a;"></div>
<div class="r" style="left:1377px;top:569px;width:4px;height:3.6px;background:#e8e8e8;"></div>
<div class="r" style="left:1380px;top:572.4px;width:3.2px;height:3px;background:#d0d0d0;"></div>
<span class="t" style="left:1392.00px;top:559.45px;font-size:9.5px;line-height:10.915px;color:#e0e0e0;transform:scaleX(0.8277);transform-origin:0 0;">dumbling madness</span>
<div class="r" style="left:1339.5px;top:581px;width:139.7px;height:31.8px;background:#6a6a6a;"></div>
<div class="r" style="left:1479.2px;top:581px;width:8.6px;height:31.8px;background:#626262;"></div>
<svg style="left:1322.2px;top:593.5px" width="11" height="7" viewBox="0 0 11 7"><path d="M0.3 3.5 C2.4 0.2 8.6 0.2 10.7 3.5 C8.6 6.8 2.4 6.8 0.3 3.5Z" fill="#eaeaea"/><circle cx="5.5" cy="3.4" r="2.1" fill="#4a4a4a"/><circle cx="5.5" cy="3.4" r="0.9" fill="#eaeaea"/></svg>
<svg style="left:1365.3px;top:582px" width="29" height="29" viewBox="0 0 29 29"><path d="M0.6 7.4 V0.6 H9 M20 0.6 H28.4 V7.4 M28.4 21.6 V28.4 H20 M9 28.4 H0.6 V21.6" fill="none" stroke="#e8e8e8" stroke-width="1.2"/><path d="M11.8 9.6 H17.2 M14.5 9.6 V15.6 M12.6 15.6 H16.4" fill="none" stroke="#e8e8e8" stroke-width="1"/><path d="M9.6 20.4 C12.6 17.6 16.4 17.6 19.4 20.4" fill="none" stroke="#e0e0e0" stroke-width="1"/></svg>
<span class="t" style="left:1399.00px;top:591.95px;font-size:9.5px;line-height:10.915px;color:#f0f0f0;transform:scaleX(0.8163);transform-origin:0 0;">artlines</span>
<span class="t" style="left:1467.4px;top:591.2px;font-size:11.5px;line-height:12px;font-style:italic;color:#e6e6e6;letter-spacing:-0.4px">fx</span>
<svg style="left:1480.6px;top:595px" width="6" height="3.4" viewBox="0 0 6 3.4"><path d="M0.5 3.1999999999999997 L3.0 0.5 L5.5 3.1999999999999997" fill="none" stroke="#d0d0d0" stroke-width="1.1"/></svg>
<svg style="left:1380px;top:616.3px" width="10" height="6.4" viewBox="0 0 10 6.4"><path d="M0.3 3.2 C2.2 0.2 7.8 0.2 9.7 3.2 C7.8 6.2 2.2 6.2 0.3 3.2Z" fill="#eaeaea"/><circle cx="5" cy="3.1" r="1.9" fill="#4a4a4a"/><circle cx="5" cy="3.1" r="0.8" fill="#eaeaea"/></svg>
<span class="t" style="left:1393.80px;top:613.75px;font-size:9.5px;line-height:10.915px;color:#e0e0e0;transform:scaleX(0.8037);transform-origin:0 0;">Effects</span>
<span class="t" style="left:1407.20px;top:628.45px;font-size:9.5px;line-height:10.915px;color:#e0e0e0;transform:scaleX(0.7903);transform-origin:0 0;">Stroke</span>
<svg style="left:1392.6px;top:645.8px" width="10" height="6.4" viewBox="0 0 10 6.4"><path d="M0.3 3.2 C2.2 0.2 7.8 0.2 9.7 3.2 C7.8 6.2 2.2 6.2 0.3 3.2Z" fill="#eaeaea"/><circle cx="5" cy="3.1" r="1.9" fill="#4a4a4a"/><circle cx="5" cy="3.1" r="0.8" fill="#eaeaea"/></svg>
<span class="t" style="left:1407.20px;top:643.25px;font-size:9.5px;line-height:10.915px;color:#e0e0e0;transform:scaleX(0.7903);transform-origin:0 0;">Stroke</span>
<div class="r" style="left:1479.2px;top:656.8px;width:8.6px;height:33.4px;background:#424242;"></div>
<svg style="left:1322.2px;top:670.5px" width="11" height="7" viewBox="0 0 11 7"><path d="M0.3 3.5 C2.4 0.2 8.6 0.2 10.7 3.5 C8.6 6.8 2.4 6.8 0.3 3.5Z" fill="#eaeaea"/><circle cx="5.5" cy="3.4" r="2.1" fill="#4a4a4a"/><circle cx="5.5" cy="3.4" r="0.9" fill="#eaeaea"/></svg>
<span class="t" style="left:1373.40px;top:664.76px;font-size:16px;line-height:18.384px;color:#ececec;font-family:'Liberation Serif',serif;">T</span>
<span class="t" style="left:1399.20px;top:667.95px;font-size:9.5px;line-height:10.915px;color:#e0e0e0;transform:scaleX(0.7571);transform-origin:0 0;">00</span>
<span class="t" style="left:1467.4px;top:667.4px;font-size:11.5px;line-height:12px;font-style:italic;color:#e6e6e6;letter-spacing:-0.4px">fx</span>
<svg style="left:1480.6px;top:671.4px" width="6" height="3.4" viewBox="0 0 6 3.4"><path d="M0.5 3.1999999999999997 L3.0 0.5 L5.5 3.1999999999999997" fill="none" stroke="#d0d0d0" stroke-width="1.1"/></svg>
<svg style="left:1380px;top:692.8px" width="10" height="6.4" viewBox="0 0 10 6.4"><path d="M0.3 3.2 C2.2 0.2 7.8 0.2 9.7 3.2 C7.8 6.2 2.2 6.2 0.3 3.2Z" fill="#eaeaea"/><circle cx="5" cy="3.1" r="1.9" fill="#4a4a4a"/><circle cx="5" cy="3.1" r="0.8" fill="#eaeaea"/></svg>
<span class="t" style="left:1393.80px;top:690.15px;font-size:9.5px;line-height:10.915px;color:#e0e0e0;transform:scaleX(0.8037);transform-origin:0 0;">Effects</span>
<svg style="left:1392.6px;top:707.4px" width="10" height="6.4" viewBox="0 0 10 6.4"><path d="M0.3 3.2 C2.2 0.2 7.8 0.2 9.7 3.2 C7.8 6.2 2.2 6.2 0.3 3.2Z" fill="#eaeaea"/><circle cx="5" cy="3.1" r="1.9" fill="#4a4a4a"/><circle cx="5" cy="3.1" r="0.8" fill="#eaeaea"/></svg>
<span class="t" style="left:1407.20px;top:704.95px;font-size:9.5px;line-height:10.915px;color:#e0e0e0;transform:scaleX(0.7903);transform-origin:0 0;">Stroke</span>
<svg style="left:1392.6px;top:722.1999999999999px" width="10" height="6.4" viewBox="0 0 10 6.4"><path d="M0.3 3.2 C2.2 0.2 7.8 0.2 9.7 3.2 C7.8 6.2 2.2 6.2 0.3 3.2Z" fill="#eaeaea"/><circle cx="5" cy="3.1" r="1.9" fill="#4a4a4a"/><circle cx="5" cy="3.1" r="0.8" fill="#eaeaea"/></svg>
<span class="t" style="left:1407.20px;top:719.75px;font-size:9.5px;line-height:10.915px;color:#e0e0e0;transform:scaleX(0.7903);transform-origin:0 0;">Stroke</span>
<svg style="left:1322.2px;top:746.5px" width="11" height="7" viewBox="0 0 11 7"><path d="M0.3 3.5 C2.4 0.2 8.6 0.2 10.7 3.5 C8.6 6.8 2.4 6.8 0.3 3.5Z" fill="#eaeaea"/><circle cx="5.5" cy="3.4" r="2.1" fill="#4a4a4a"/><circle cx="5.5" cy="3.4" r="0.9" fill="#eaeaea"/></svg>
<div class="r" style="left:1368px;top:738px;width:16.5px;height:23px;background-color:#fff;background-image:linear-gradient(45deg,#ccc 25%,transparent 25%,transparent 75%,#ccc 75%),linear-gradient(45deg,#ccc 25%,transparent 25%,transparent 75%,#ccc 75%);background-size:6px 6px;background-position:0 0,3px 3px"></div>
<svg style="left:1368px;top:738px" width="16.5" height="23" viewBox="0 0 16.5 23"><path d="M11.5 2.6 L14.4 6.4 L12.6 9.8 L10.4 8 L12 5.6Z" fill="#111"/><rect x="8" y="14.4" width="8.5" height="8.6" fill="#f4f4f4"/><rect x="9.8" y="16.2" width="5" height="5" fill="none" stroke="#555" stroke-width="0.9"/><rect x="8.8" y="15.2" width="1.8" height="1.8" fill="#555"/><rect x="14" y="15.2" width="1.8" height="1.8" fill="#555"/><rect x="8.8" y="20.4" width="1.8" height="1.8" fill="#555"/><rect x="14" y="20.4" width="1.8" height="1.8" fill="#555"/></svg>
<span class="t" style="left:1392.30px;top:744.75px;font-size:9.5px;line-height:10.915px;color:#e0e0e0;transform:scaleX(0.7916);transform-origin:0 0;">Shape 22</span>
<svg style="left:1322.2px;top:779.0px" width="11" height="7" viewBox="0 0 11 7"><path d="M0.3 3.5 C2.4 0.2 8.6 0.2 10.7 3.5 C8.6 6.8 2.4 6.8 0.3 3.5Z" fill="#eaeaea"/><circle cx="5.5" cy="3.4" r="2.1" fill="#4a4a4a"/><circle cx="5.5" cy="3.4" r="0.9" fill="#eaeaea"/></svg>
<div class="r" style="left:1368px;top:770px;width:16.5px;height:21.5px;background-color:#fff;background-image:linear-gradient(45deg,#ccc 25%,transparent 25%,transparent 75%,#ccc 75%),linear-gradient(45deg,#ccc 25%,transparent 25%,transparent 75%,#ccc 75%);background-size:6px 6px;background-position:0 0,3px 3px"></div>
<svg style="left:1368px;top:770px" width="16.5" height="21.5" viewBox="0 0 16.5 21.5"><rect x="8" y="14.4" width="8.5" height="7.1" fill="#f4f4f4"/><rect x="9.8" y="16.2" width="5" height="5" fill="none" stroke="#555" stroke-width="0.9"/><rect x="8.8" y="15.2" width="1.8" height="1.8" fill="#555"/><rect x="14" y="15.2" width="1.8" height="1.8" fill="#555"/></svg>
<span class="t" style="left:1392.30px;top:776.95px;font-size:9.5px;line-height:10.915px;color:#e0e0e0;transform:scaleX(0.7916);transform-origin:0 0;">Shape 25</span>
<div class="r" style="left:1488px;top:339px;width:12px;height:453px;background:#4a4a4a;"></div>
<div class="r" style="left:1489px;top:367.4px;width:9.5px;height:300px;background:#686868;"></div>
<svg style="left:1490.4px;top:346.6px" width="6" height="3.5" viewBox="0 0 6 3.5"><path d="M0.5 3.3 L3.0 0.5 L5.5 3.3" fill="none" stroke="#9a9a9a" stroke-width="1.1"/></svg>
<svg style="left:1490.4px;top:782px" width="6" height="3.5" viewBox="0 0 6 3.5"><path d="M0.5 0.5 L3.0 3.0 L5.5 0.5" fill="none" stroke="#9a9a9a" stroke-width="1.1"/></svg>
<div class="r" style="left:1316px;top:791.5px;width:184px;height:1px;background:#454545;"></div>
<svg style="left:1341.4px;top:797.5px" width="11.5" height="7" viewBox="0 0 11.5 7"><rect x="0.7" y="0.9" width="6" height="5.2" rx="2.6" fill="none" stroke="#7c7c7c" stroke-width="1.1"/><rect x="4.8" y="0.9" width="6" height="5.2" rx="2.6" fill="none" stroke="#7c7c7c" stroke-width="1.1"/></svg>
<span class="t" style="left:1363.8px;top:794px;font-size:11.5px;line-height:12px;font-style:italic;color:#e6e6e6;letter-spacing:-0.4px">fx</span>
<div class="r" style="left:1373px;top:806px;width:1.4px;height:1.4px;background:#d8d8d8;"></div>
<svg style="left:1383.3px;top:796.5px" width="11" height="9" viewBox="0 0 11 9"><rect x="0" y="0" width="11" height="9" rx="0.8" fill="#e4e4e4"/><circle cx="5.5" cy="4.5" r="2.5" fill="#4a4a4a"/></svg>
<svg style="left:1405.8px;top:796.2px" width="10" height="10" viewBox="0 0 10 10"><circle cx="5" cy="5" r="4.2" fill="none" stroke="#e4e4e4" stroke-width="1.1"/><path d="M2 8 A4.2 4.2 0 0 1 8 2 Z" fill="#e4e4e4"/></svg>
<div class="r" style="left:1415px;top:806px;width:1.4px;height:1.4px;background:#d8d8d8;"></div>
<svg style="left:1426.4px;top:796.6px" width="10.5" height="9" viewBox="0 0 10.5 9"><path d="M0 9 V0 H4 L5 1.2 H10.5 V9Z" fill="#e6e6e6"/></svg>
<svg style="left:1447.6px;top:796.2px" width="10" height="10" viewBox="0 0 10 10"><rect x="0.6" y="0.6" width="8.8" height="8.8" rx="0.8" fill="none" stroke="#e4e4e4" stroke-width="1.2"/><path d="M5 2.8 V7.2 M2.8 5 H7.2" stroke="#e4e4e4" stroke-width="1.2"/></svg>
<svg style="left:1468.3px;top:795.6px" width="9" height="11" viewBox="0 0 9 11"><path d="M0 2 H9 M3 2 V0.6 H6 V2" fill="none" stroke="#e4e4e4" stroke-width="1.1"/><path d="M1 3.2 H8 L7.4 11 H1.6Z" fill="#e4e4e4"/><path d="M3.2 4.6 V9.6 M4.5 4.6 V9.6 M5.8 4.6 V9.6" stroke="#535353" stroke-width="0.7"/></svg>
<!-- art -->
<svg style="left:0;top:0" width="1500" height="812" viewBox="0 0 1500 812">
<defs><g id="anc">
<circle cx="0" cy="0" r="8.6" fill="#000" stroke="#fff" stroke-width="1.9"/>
<circle cx="0" cy="-4.6" r="1.25" fill="none" stroke="#fff" stroke-width="1.0"/>
<path d="M0 -3.3 V4.8 M-2.3 -1.9 H2.3" stroke="#fff" stroke-width="1.4" fill="none"/>
<path d="M-4.3 1.4 C-4 4.2 -1.6 5 0 5.2 C1.6 5 4 4.2 4.3 1.4" stroke="#fff" stroke-width="1.4" fill="none"/>
<path d="M-5.2 2.6 L-4.4 0.6 L-3 2.2Z M5.2 2.6 L4.4 0.6 L3 2.2Z" fill="#fff"/>
</g><g id="compass"><path d="M5.9 -29.4 L11.5 -57.9 M16.7 -24.9 L32.8 -49.1 M24.9 -16.7 L49.1 -32.8 M29.4 -5.9 L57.9 -11.5 M29.4 5.9 L57.9 11.5 M24.9 16.7 L49.1 32.8 M16.7 24.9 L32.8 49.1 M5.9 29.4 L11.5 57.9 M-5.9 29.4 L-11.5 57.9 M-16.7 24.9 L-32.8 49.1 M-24.9 16.7 L-49.1 32.8 M-29.4 5.9 L-57.9 11.5 M-29.4 -5.9 L-57.9 -11.5 M-24.9 -16.7 L-49.1 -32.8 M-16.7 -24.9 L-32.8 -49.1 M-5.9 -29.4 L-11.5 -57.9" stroke="#000" stroke-width="1.1" fill="none"/><circle r="74" fill="none" stroke="#000" stroke-width="3.2"/><circle r="62" fill="none" stroke="#000" stroke-width="2.6"/><circle r="68" fill="none" stroke="#000" stroke-width="9" stroke-dasharray="34 19.4" stroke-dashoffset="8"/><circle r="69" fill="none" stroke="#fff" stroke-width="1.6" stroke-dasharray="22 31.4" stroke-dashoffset="2"/><circle cx="32.9" cy="-79.5" r="2.6" fill="#000"/><path d="M22.7 -72.5 L31.4 -75.8 L35.3 -67.3" fill="none" stroke="#000" stroke-width="1.2"/><circle cx="79.5" cy="-32.9" r="2.6" fill="#000"/><path d="M67.3 -35.3 L75.8 -31.4 L72.5 -22.7" fill="none" stroke="#000" stroke-width="1.2"/><circle cx="79.5" cy="32.9" r="2.6" fill="#000"/><path d="M72.5 22.7 L75.8 31.4 L67.3 35.3" fill="none" stroke="#000" stroke-width="1.2"/><circle cx="32.9" cy="79.5" r="2.6" fill="#000"/><path d="M35.3 67.3 L31.4 75.8 L22.7 72.5" fill="none" stroke="#000" stroke-width="1.2"/><circle cx="-32.9" cy="79.5" r="2.6" fill="#000"/><path d="M-22.7 72.5 L-31.4 75.8 L-35.3 67.3" fill="none" stroke="#000" stroke-width="1.2"/><circle cx="-79.5" cy="32.9" r="2.6" fill="#000"/><path d="M-67.3 35.3 L-75.8 31.4 L-72.5 22.7" fill="none" stroke="#000" stroke-width="1.2"/><circle cx="-79.5" cy="-32.9" r="2.6" fill="#000"/><path d="M-72.5 -22.7 L-75.8 -31.4 L-67.3 -35.3" fill="none" stroke="#000" stroke-width="1.2"/><circle cx="-32.9" cy="-79.5" r="2.6" fill="#000"/><path d="M-35.3 -67.3 L-31.4 -75.8 L-22.7 -72.5" fill="none" stroke="#000" stroke-width="1.2"/><g transform="rotate(45)"><path d="M0 -92 L7 -66 L0 -60 L-7 -66Z" fill="#000"/><path d="M0 -92 L-7 -66 L0 -60Z" fill="#fff" stroke="#000" stroke-width="1.2"/><path d="M0 -94 V-107" stroke="#000" stroke-width="1.4"/></g><g transform="rotate(135)"><path d="M0 -92 L7 -66 L0 -60 L-7 -66Z" fill="#000"/><path d="M0 -92 L-7 -66 L0 -60Z" fill="#fff" stroke="#000" stroke-width="1.2"/><path d="M0 -94 V-107" stroke="#000" stroke-width="1.4"/></g><g transform="rotate(225)"><path d="M0 -92 L7 -66 L0 -60 L-7 -66Z" fill="#000"/><path d="M0 -92 L-7 -66 L0 -60Z" fill="#fff" stroke="#000" stroke-width="1.2"/><path d="M0 -94 V-107" stroke="#000" stroke-width="1.4"/></g><g transform="rotate(315)"><path d="M0 -92 L7 -66 L0 -60 L-7 -66Z" fill="#000"/><path d="M0 -92 L-7 -66 L0 -60Z" fill="#fff" stroke="#000" stroke-width="1.2"/><path d="M0 -94 V-107" stroke="#000" stroke-width="1.4"/></g><g transform="rotate(45)"><path d="M0 -56 L9 -18 L0 0Z" fill="#000"/><path d="M0 -56 L-9 -18 L0 0Z" fill="#fff" stroke="#000" stroke-width="1.4"/></g><g transform="rotate(135)"><path d="M0 -56 L9 -18 L0 0Z" fill="#000"/><path d="M0 -56 L-9 -18 L0 0Z" fill="#fff" stroke="#000" stroke-width="1.4"/></g><g transform="rotate(225)"><path d="M0 -56 L9 -18 L0 0Z" fill="#000"/><path d="M0 -56 L-9 -18 L0 0Z" fill="#fff" stroke="#000" stroke-width="1.4"/></g><g transform="rotate(315)"><path d="M0 -56 L9 -18 L0 0Z" fill="#000"/><path d="M0 -56 L-9 -18 L0 0Z" fill="#fff" stroke="#000" stroke-width="1.4"/></g><g transform="rotate(0)"><path d="M0 -100 L12.5 -12.5 L0 0Z" fill="#000"/><path d="M0 -100 L-12.5 -12.5 L0 0Z" fill="#fff" stroke="#000" stroke-width="1.6"/></g><g transform="rotate(90)"><path d="M0 -100 L12.5 -12.5 L0 0Z" fill="#000"/><path d="M0 -100 L-12.5 -12.5 L0 0Z" fill="#fff" stroke="#000" stroke-width="1.6"/></g><g transform="rotate(180)"><path d="M0 -100 L12.5 -12.5 L0 0Z" fill="#000"/><path d="M0 -100 L-12.5 -12.5 L0 0Z" fill="#fff" stroke="#000" stroke-width="1.6"/></g><g transform="rotate(270)"><path d="M0 -100 L12.5 -12.5 L0 0Z" fill="#000"/><path d="M0 -100 L-12.5 -12.5 L0 0Z" fill="#fff" stroke="#000" stroke-width="1.6"/></g><circle r="19" fill="#000"/><circle r="11.5" fill="none" stroke="#fff" stroke-width="4" stroke-dasharray="40 29.1" transform="rotate(-60)"/><circle r="3" fill="#fff"/></g><g id="ship"><polygon points="76.9,10.3 78.1,12.1 73.1,24.1 60.7,96.6 58.6,96.6 71.4,23.1" fill="#000" /><polygon points="57.2,17.9 72.1,22.1 74.5,23.8 89.7,32.4 93.1,37.6 94.5,45.5 88.8,41.0 86.2,42.4 81.0,39.0 77.9,40.0 74.1,35.9 69.0,33.8 64.1,32.1 60.7,31.0 58.3,32.4 55.5,29.3 53.8,28.6" fill="#000" /><polygon points="48.6,35.9 64.1,40.0 68.1,38.3 89.7,49.7 91.4,66.2 87.1,60.3 84.8,61.4 81.0,56.9 77.9,57.9 74.1,52.8 66.4,49.1 60.3,46.2 51.7,43.4 47.6,45.2 45.2,42.4" fill="#000" /><polygon points="68.6,62.4 81.0,68.6 91.7,73.8 86.2,74.8 75.9,73.1 69.0,69.7" fill="#000" /><polygon points="37.2,49.7 51.7,54.8 49.3,59.5 45.2,64.1 36.9,69.7" fill="#000" /><polygon points="64.1,40.7 67.2,56.9 64.1,75.9 58.6,94.1 25.9,88.3 19.0,84.5 32.8,75.9 48.3,56.9" fill="#000" /><polygon points="66.4,75.9 94.0,74.1 91.7,89.7 89.7,96.6 86.2,103.8 83.8,103.4 81.0,112.4 77.9,110.3 75.2,113.1 69.0,112.9 67.6,103.4 65.5,96.6" fill="#000" /><polygon points="50.3,96.6 60.3,94.5 60.7,105.5 48.6,105.5" fill="#000" /><polygon points="41.4,105.5 56.9,110.3 69.0,112.9 81.0,117.2 86.6,120.7 75.9,123.4 60.3,124.5 46.6,121.0 40.7,114.1" fill="#000" /><polygon points="19.8,123.8 25.9,121.6 31.0,119.0 34.5,122.1 37.1,120.7 43.1,112.1 46.2,122.8 56.9,125.9 69.0,127.9 81.0,128.6 86.6,133.8 79.3,132.1 74.1,132.8 65.5,134.8 58.6,132.4 51.7,133.4 39.7,134.5 34.5,131.0 25.9,127.2" fill="#000" /><polyline points="75.5,20.7 68.6,37.1 64.1,51.7 60.7,72.4 58.3,94.0" fill="none" stroke="#fff" stroke-width="0.9"/><polyline points="64.1,40.7 51.7,72.4 46.6,87.1" fill="none" stroke="#fff" stroke-width="0.7"/><polyline points="21.0,84.7 57.8,86.6 59.0,93.1" fill="none" stroke="#fff" stroke-width="1.0"/><polyline points="64.1,41.4 22.1,84.1" fill="none" stroke="#fff" stroke-width="0.6"/><polyline points="72.4,76.2 70.3,111.7" fill="none" stroke="#fff" stroke-width="1.3"/><polyline points="79.3,75.5 75.9,112.1" fill="none" stroke="#fff" stroke-width="1.3"/><polyline points="86.2,74.8 82.4,108.6" fill="none" stroke="#fff" stroke-width="1.3"/><polyline points="54.8,25.9 94.0,41.4" fill="none" stroke="#fff" stroke-width="0.9"/><polyline points="46.6,40.0 91.0,56.9" fill="none" stroke="#fff" stroke-width="0.9"/><polyline points="43.1,110.3 82.8,120.7" fill="none" stroke="#fff" stroke-width="0.9"/><polyline points="42.2,115.2 74.1,123.4" fill="none" stroke="#fff" stroke-width="0.8"/><polyline points="25.9,124.5 44.8,120.7 56.9,128.4 82.8,131.0" fill="none" stroke="#fff" stroke-width="0.8"/></g><g id="shipb"><polygon points="11.6,11.6 20.7,34.9 34.1,64.6 28.9,65.1 15.5,35.7" fill="#000" /><polygon points="14.2,33.1 43.4,22.7 49.9,38.8 41.3,38.8 38.8,43.9 33.1,42.9 30.5,48.1 25.3,47.5 20.7,51.2" fill="#000" /><polygon points="22.7,54.8 55.6,49.1 63.3,61.5 57.4,61.5 54.8,67.7 49.1,67.2 44.4,73.9 36.2,67.7 32.6,61.5 24.8,61.0" fill="#000" /><polygon points="49.6,78.6 64.6,77.0 72.9,73.4 76.5,102.8 67.7,95.1 59.9,87.9" fill="#000" /><polygon points="20.7,64.1 26.9,77.5 25.3,97.7 21.7,98.7 9.8,90.4" fill="#000" /><polygon points="26.9,59.9 34.9,61.0 59.9,89.1 85.3,120.9 102.3,126.6 83.2,137.5 43.9,142.1 38.8,134.4 33.1,108.5 28.4,82.7" fill="#000" /><polygon points="3.6,113.2 28.9,115.8 31.5,139.5 26.9,171.1 16.0,168.0 7.8,155.0 4.1,137.0" fill="#000" /><polygon points="38.2,143.7 53.0,142.6 57.4,162.3 41.3,163.3" fill="#000" /><polygon points="31.0,144.7 37.7,144.7 38.8,165.4 28.9,168.0" fill="#000" /><polygon points="18.1,174.7 64.6,158.1 67.7,165.4 63.6,168.0 77.5,177.8 64.6,184.0 38.8,191.7 24.8,185.0" fill="#000" /><polygon points="15.5,199.0 31.0,191.7 43.9,194.3 53.0,184.0 59.9,189.9 67.7,182.2 74.9,188.6 83.2,178.3 87.9,186.6 101.3,188.1 85.3,191.7 74.9,196.4 62.0,197.7 51.7,204.1 38.8,200.3 25.8,204.1" fill="#000" /><polygon points="49.1,192.5 55.6,178.3 59.9,191.2" fill="#000" /><polyline points="20.2,34.9 33.1,64.6 41.3,129.2 43.9,141.6" fill="none" stroke="#fff" stroke-width="1.1"/><polyline points="25.8,59.9 38.8,134.4" fill="none" stroke="#fff" stroke-width="0.9"/><polyline points="34.9,61.5 85.3,121.4" fill="none" stroke="#fff" stroke-width="0.9"/><polyline points="43.4,128.7 85.3,120.9 102.3,126.6" fill="none" stroke="#fff" stroke-width="1.2"/><polyline points="10.3,113.7 13.4,165.4" fill="none" stroke="#fff" stroke-width="1.4"/><polyline points="16.0,114.2 19.1,168.0" fill="none" stroke="#fff" stroke-width="1.4"/><polyline points="22.2,115.0 24.3,169.3" fill="none" stroke="#fff" stroke-width="1.4"/><polyline points="16.5,41.3 47.8,33.1" fill="none" stroke="#fff" stroke-width="0.8"/><polyline points="24.5,61.0 59.9,56.3" fill="none" stroke="#fff" stroke-width="0.8"/><polyline points="23.3,178.3 64.6,164.1" fill="none" stroke="#fff" stroke-width="1.0"/><polyline points="28.4,184.8 69.8,172.6" fill="none" stroke="#fff" stroke-width="1.0"/></g>
<clipPath id="sf"><polygon points="270.0,205.0 270.1,208.4 270.3,211.8 270.2,214.1 271.7,218.3 270.4,222.9 270.1,225.4 270.1,227.6 270.2,229.8 270.2,234.1 270.3,237.4 270.5,240.2 270.6,244.5 270.5,247.2 270.8,251.3 271.3,254.3 271.0,256.4 271.4,259.7 271.2,262.0 270.9,264.8 271.0,269.4 270.6,272.1 270.3,276.2 270.2,279.5 270.3,281.9 270.0,285.1 270.3,289.7 270.0,294.1 270.3,298.4 270.2,303.0 270.2,307.1 270.0,309.4 270.1,312.1 270.1,315.3 269.8,318.9 269.7,321.4 269.2,324.1 269.1,328.7 269.3,333.0 269.1,335.4 269.5,338.1 269.7,342.3 269.9,344.8 270.0,347.5 270.0,351.2 269.9,353.8 270.0,357.0 270.2,360.1 270.3,363.1 270.1,366.9 270.8,369.3 270.6,373.2 270.2,376.6 270.1,381.2 270.7,385.2 270.9,389.1 271.1,392.1 271.1,396.5 271.2,400.8 271.1,403.9 271.1,406.2 270.9,410.5 270.6,414.5 270.2,418.8 270.4,421.0 270.4,423.6 270.5,427.3 270.2,429.4 270.2,432.0 270.4,435.8 270.6,438.7 270.6,442.0 270.3,446.3 270.1,449.2 270.1,453.5 269.6,458.0 269.4,461.3 269.4,464.4 269.4,467.3 270.0,470.6 269.4,472.8 268.7,475.7 269.3,478.9 269.5,481.6 269.9,485.3 270.2,489.1 269.9,493.0 269.8,495.5 269.8,499.5 270.0,502.4 270.0,506.1 270.0,510.3 270.0,514.8 270.1,518.0 270.3,521.1 270.8,525.2 270.7,529.0 271.1,533.2 271.3,535.9 271.1,540.5 271.2,543.4 270.7,546.4 270.9,549.9 270.8,552.0 270.3,556.2 270.2,560.3 270.5,563.7 270.7,567.6 270.4,572.2 270.6,575.6 270.7,579.4 270.5,582.9 270.6,587.2 270.4,591.5 269.7,595.0 270.9,598.4 269.4,601.8 269.4,605.4 269.4,607.6 269.6,612.2 269.4,615.5 269.9,619.7 269.7,622.6 269.8,627.1 269.8,629.2 269.8,633.1 269.6,636.8 269.8,639.2 269.7,641.8 269.6,644.9 269.5,647.3 269.7,651.1 270.0,654.8 270.2,658.8 270.2,661.7 270.7,664.3 270.5,666.7 270.6,669.5 271.1,672.7 270.3,675.8 270.2,676.0 409.2,676.0 409.2,205.0"/></clipPath>
<clipPath id="sb"><polygon points="424.0,205.0 565.4,205.0 564.9,208.6 564.5,211.0 563.2,213.7 564.1,217.6 563.9,221.6 564.0,225.7 564.2,229.4 563.9,233.5 563.9,237.3 564.1,240.6 564.0,243.8 563.7,246.4 563.4,249.0 563.3,251.1 563.0,255.4 562.8,258.2 562.6,261.7 562.7,265.8 562.6,268.5 562.9,272.1 562.7,276.7 563.2,278.9 563.5,283.5 563.7,287.0 563.8,290.0 563.3,292.5 563.7,295.1 563.2,297.8 563.3,300.3 563.2,303.0 563.0,306.3 563.3,310.5 563.3,313.6 563.1,317.4 563.6,320.5 563.9,324.0 563.8,327.7 563.9,332.0 564.0,334.3 564.0,337.0 563.6,340.2 563.4,344.3 563.5,346.9 563.1,350.2 562.8,354.1 562.7,357.6 562.8,360.4 562.7,364.8 562.7,368.9 562.5,371.7 562.9,374.6 562.5,377.7 562.5,381.0 562.1,383.8 562.3,386.6 561.9,388.9 561.6,392.5 561.6,395.2 562.1,399.9 560.9,402.7 560.7,406.9 561.1,410.0 561.4,412.3 561.5,414.8 561.1,417.4 561.6,419.8 561.7,423.8 561.8,428.0 561.5,430.9 561.4,435.2 561.6,438.1 561.3,442.4 561.4,446.2 561.5,449.1 561.2,453.7 561.6,457.8 562.1,461.8 562.1,464.4 562.2,467.3 562.3,470.9 562.5,473.8 562.5,476.4 562.1,481.0 562.0,484.1 561.7,488.8 561.7,491.0 560.8,494.1 561.5,498.7 561.3,502.5 561.2,506.2 561.6,509.6 561.6,511.8 561.5,515.6 561.6,519.6 561.3,522.2 561.1,525.0 561.1,528.5 560.3,533.1 560.6,536.6 560.4,540.5 560.4,542.9 560.4,545.3 560.4,547.5 560.5,552.1 560.6,554.9 561.0,558.7 561.1,562.7 560.8,566.9 561.1,569.1 560.6,573.7 560.8,577.8 560.8,581.9 560.6,586.1 561.1,589.5 560.9,593.8 561.5,597.6 561.8,600.2 561.6,602.7 562.1,607.3 562.4,610.7 562.2,614.2 562.3,618.3 562.1,622.0 561.9,626.5 561.5,629.9 561.7,633.3 561.3,635.7 561.5,640.0 561.8,643.5 561.9,648.2 561.9,650.7 561.8,654.7 561.5,659.2 561.6,662.5 561.2,664.8 560.8,669.0 560.8,672.0 561.2,676.0 424.0,676.0"/></clipPath>
<clipPath id="sl"><polygon points="995.7,444.0 995.3,448.0 994.9,452.5 994.7,454.9 993.9,458.4 994.8,461.2 994.8,463.7 995.5,467.4 994.7,470.0 995.0,474.4 995.4,477.8 995.5,482.4 995.2,486.8 995.1,489.3 995.7,492.2 994.9,495.1 994.8,498.4 994.5,502.4 994.9,504.5 994.9,506.6 994.6,510.2 995.2,512.8 995.4,516.8 995.2,519.8 995.1,523.9 996.6,528.0 995.1,530.3 994.8,534.8 994.5,538.3 994.1,540.8 994.3,544.7 994.1,546.9 993.5,550.1 993.4,554.3 993.6,556.5 993.2,560.8 993.5,565.3 993.3,567.7 993.2,572.0 993.2,576.6 992.8,579.9 992.4,583.2 992.2,585.7 992.0,590.3 991.5,593.2 991.8,597.3 991.7,601.5 991.8,605.3 991.8,609.2 992.2,613.3 992.3,617.8 992.3,619.9 992.2,623.7 992.2,627.5 992.0,631.2 992.0,634.2 991.9,638.1 991.6,641.5 991.9,645.8 992.0,649.7 992.1,652.2 992.1,656.0 992.4,660.1 992.2,662.2 992.2,666.0 991.9,669.7 991.8,672.4 991.6,675.3 991.0,676.0 1095.5,676.0 1095.9,675.7 1096.0,673.0 1095.6,670.3 1095.6,666.1 1096.3,662.5 1095.7,659.5 1094.8,656.2 1094.9,653.7 1095.1,651.4 1094.8,647.7 1095.1,643.4 1095.2,639.2 1094.8,636.1 1094.8,632.4 1094.7,628.5 1094.4,624.5 1094.4,620.8 1094.1,617.3 1095.2,612.9 1094.0,609.4 1094.1,606.9 1093.5,603.6 1094.5,599.5 1094.4,597.0 1094.8,594.6 1094.6,590.6 1094.8,586.2 1094.5,582.3 1094.4,578.4 1094.3,575.9 1094.4,572.9 1094.2,569.8 1094.6,567.7 1094.7,563.2 1094.7,561.0 1094.6,558.5 1094.7,554.1 1094.9,549.5 1095.0,545.6 1095.0,542.2 1094.6,540.0 1094.5,536.3 1094.4,533.1 1094.0,530.1 1093.9,526.6 1094.0,523.3 1093.9,520.3 1093.6,516.7 1093.6,514.5 1093.5,510.0 1093.6,505.3 1093.7,502.8 1093.7,500.6 1093.4,498.1 1093.4,494.3 1093.0,489.9 1092.8,487.7 1093.1,485.6 1092.7,482.1 1092.6,479.7 1092.5,477.5 1092.7,475.3 1092.4,472.7 1092.4,470.1 1092.7,466.9 1092.9,464.1 1092.9,461.0 1092.9,456.5 1093.2,453.8 1093.0,450.6 1093.1,448.4 1093.0,446.1 1092.8,444.0"/></clipPath>
<clipPath id="cf"><rect x="100" y="205" width="316.3" height="470.5"/></clipPath>
<clipPath id="cb"><rect x="424" y="205.5" width="317" height="470"/></clipPath>
<clipPath id="cr"><rect x="890" y="205" width="313" height="230.5"/></clipPath>
<clipPath id="cl"><rect x="890" y="444" width="313" height="231.5"/></clipPath>
</defs>
<rect x="100" y="205" width="316.3" height="470.5" fill="#fff"/>
<rect x="423.5" y="205" width="318" height="470.5" fill="#fff" stroke="#8c8c8c" stroke-width="1"/>
<rect x="890" y="205" width="313" height="230.5" fill="#fff"/>
<rect x="890" y="444" width="313" height="231.5" fill="#fff"/>
<g clip-path="url(#cf)">
<g clip-path="url(#sf)"><rect x="260" y="205" width="156" height="471" fill="#000"/><path d="M-367.80 138.00 L217.40 719.00 M-367.80 138.00 L-953.00 719.00 M-326.00 138.00 L259.20 719.00 M-326.00 138.00 L-911.20 719.00 M-284.20 138.00 L301.00 719.00 M-284.20 138.00 L-869.40 719.00 M-242.40 138.00 L342.80 719.00 M-242.40 138.00 L-827.60 719.00 M-200.60 138.00 L384.60 719.00 M-200.60 138.00 L-785.80 719.00 M-158.80 138.00 L426.40 719.00 M-158.80 138.00 L-744.00 719.00 M-117.00 138.00 L468.20 719.00 M-117.00 138.00 L-702.20 719.00 M-75.20 138.00 L510.00 719.00 M-75.20 138.00 L-660.40 719.00 M-33.40 138.00 L551.80 719.00 M-33.40 138.00 L-618.60 719.00 M8.40 138.00 L593.60 719.00 M8.40 138.00 L-576.80 719.00 M50.20 138.00 L635.40 719.00 M50.20 138.00 L-535.00 719.00 M92.00 138.00 L677.20 719.00 M92.00 138.00 L-493.20 719.00 M133.80 138.00 L719.00 719.00 M133.80 138.00 L-451.40 719.00 M175.60 138.00 L760.80 719.00 M175.60 138.00 L-409.60 719.00 M217.40 138.00 L802.60 719.00 M217.40 138.00 L-367.80 719.00 M259.20 138.00 L844.40 719.00 M259.20 138.00 L-326.00 719.00 M301.00 138.00 L886.20 719.00 M301.00 138.00 L-284.20 719.00 M342.80 138.00 L928.00 719.00 M342.80 138.00 L-242.40 719.00 M384.60 138.00 L969.80 719.00 M384.60 138.00 L-200.60 719.00 M426.40 138.00 L1011.60 719.00 M426.40 138.00 L-158.80 719.00 M468.20 138.00 L1053.40 719.00 M468.20 138.00 L-117.00 719.00 M510.00 138.00 L1095.20 719.00 M510.00 138.00 L-75.20 719.00 M551.80 138.00 L1137.00 719.00 M551.80 138.00 L-33.40 719.00 M593.60 138.00 L1178.80 719.00 M593.60 138.00 L8.40 719.00 M635.40 138.00 L1220.60 719.00 M635.40 138.00 L50.20 719.00 M677.20 138.00 L1262.40 719.00 M677.20 138.00 L92.00 719.00 M719.00 138.00 L1304.20 719.00 M719.00 138.00 L133.80 719.00 M760.80 138.00 L1346.00 719.00 M760.80 138.00 L175.60 719.00 M802.60 138.00 L1387.80 719.00 M802.60 138.00 L217.40 719.00 M844.40 138.00 L1429.60 719.00 M844.40 138.00 L259.20 719.00 M886.20 138.00 L1471.40 719.00 M886.20 138.00 L301.00 719.00 M928.00 138.00 L1513.20 719.00 M928.00 138.00 L342.80 719.00 M969.80 138.00 L1555.00 719.00 M969.80 138.00 L384.60 719.00 M1011.60 138.00 L1596.80 719.00 M1011.60 138.00 L426.40 719.00 M1053.40 138.00 L1638.60 719.00 M1053.40 138.00 L468.20 719.00" stroke="#fff" stroke-width="2.3" stroke-linecap="round" stroke-dasharray="0 5.890" fill="none"/><use href="#anc" transform="translate(259.2 221.0) scale(1.0)"/><use href="#anc" transform="translate(259.2 262.5) scale(1.0)"/><use href="#anc" transform="translate(259.2 304.0) scale(1.0)"/><use href="#anc" transform="translate(259.2 345.5) scale(1.0)"/><use href="#anc" transform="translate(259.2 387.0) scale(1.0)"/><use href="#anc" transform="translate(259.2 428.5) scale(1.0)"/><use href="#anc" transform="translate(259.2 470.0) scale(1.0)"/><use href="#anc" transform="translate(259.2 511.5) scale(1.0)"/><use href="#anc" transform="translate(259.2 553.0) scale(1.0)"/><use href="#anc" transform="translate(259.2 594.5) scale(1.0)"/><use href="#anc" transform="translate(259.2 636.0) scale(1.0)"/><use href="#anc" transform="translate(259.2 677.5) scale(1.0)"/><use href="#anc" transform="translate(301.0 221.0) scale(1.0)"/><use href="#anc" transform="translate(301.0 262.5) scale(1.0)"/><use href="#anc" transform="translate(301.0 304.0) scale(1.0)"/><use href="#anc" transform="translate(301.0 345.5) scale(1.0)"/><use href="#anc" transform="translate(301.0 387.0) scale(1.0)"/><use href="#anc" transform="translate(301.0 428.5) scale(1.0)"/><use href="#anc" transform="translate(301.0 470.0) scale(1.0)"/><use href="#anc" transform="translate(301.0 511.5) scale(1.0)"/><use href="#anc" transform="translate(301.0 553.0) scale(1.0)"/><use href="#anc" transform="translate(301.0 594.5) scale(1.0)"/><use href="#anc" transform="translate(301.0 636.0) scale(1.0)"/><use href="#anc" transform="translate(301.0 677.5) scale(1.0)"/><use href="#anc" transform="translate(342.8 221.0) scale(1.0)"/><use href="#anc" transform="translate(342.8 262.5) scale(1.0)"/><use href="#anc" transform="translate(342.8 304.0) scale(1.0)"/><use href="#anc" transform="translate(342.8 345.5) scale(1.0)"/><use href="#anc" transform="translate(342.8 387.0) scale(1.0)"/><use href="#anc" transform="translate(342.8 428.5) scale(1.0)"/><use href="#anc" transform="translate(342.8 470.0) scale(1.0)"/><use href="#anc" transform="translate(342.8 511.5) scale(1.0)"/><use href="#anc" transform="translate(342.8 553.0) scale(1.0)"/><use href="#anc" transform="translate(342.8 594.5) scale(1.0)"/><use href="#anc" transform="translate(342.8 636.0) scale(1.0)"/><use href="#anc" transform="translate(342.8 677.5) scale(1.0)"/><use href="#anc" transform="translate(384.6 221.0) scale(1.0)"/><use href="#anc" transform="translate(384.6 262.5) scale(1.0)"/><use href="#anc" transform="translate(384.6 304.0) scale(1.0)"/><use href="#anc" transform="translate(384.6 345.5) scale(1.0)"/><use href="#anc" transform="translate(384.6 387.0) scale(1.0)"/><use href="#anc" transform="translate(384.6 428.5) scale(1.0)"/><use href="#anc" transform="translate(384.6 470.0) scale(1.0)"/><use href="#anc" transform="translate(384.6 511.5) scale(1.0)"/><use href="#anc" transform="translate(384.6 553.0) scale(1.0)"/><use href="#anc" transform="translate(384.6 594.5) scale(1.0)"/><use href="#anc" transform="translate(384.6 636.0) scale(1.0)"/><use href="#anc" transform="translate(384.6 677.5) scale(1.0)"/></g>
<rect x="267.3" y="309.9" width="0.8" height="22.1" fill="#000"/><rect x="267.9" y="480.9" width="0.9" height="9.7" fill="#000"/><rect x="266.3" y="319.4" width="0.7" height="14.1" fill="#000"/><rect x="267.1" y="573.9" width="0.6" height="20.4" fill="#000"/><rect x="267.0" y="485.0" width="0.9" height="30.6" fill="#000"/><rect x="266.6" y="501.1" width="0.8" height="9.7" fill="#000"/><rect x="266.5" y="337.9" width="0.7" height="8.8" fill="#000"/><rect x="266.6" y="522.0" width="1.0" height="30.8" fill="#000"/><rect x="267.0" y="379.2" width="1.0" height="28.8" fill="#000"/><rect x="267.9" y="592.6" width="0.6" height="10.5" fill="#000"/><rect x="273.0" y="309.1" width="0.6" height="10.7" fill="#fff"/><rect x="274.0" y="234.3" width="0.9" height="18.4" fill="#fff"/><rect x="273.3" y="542.4" width="0.6" height="13.8" fill="#fff"/><rect x="272.7" y="281.1" width="1.0" height="10.8" fill="#fff"/><rect x="273.7" y="570.6" width="0.6" height="29.0" fill="#fff"/><rect x="273.6" y="341.6" width="0.9" height="24.3" fill="#fff"/>
<use href="#compass" transform="translate(137.6 340.4) rotate(12) scale(0.712)"/><text x="148.4" y="270.0" font-size="29" font-family="'Liberation Serif',serif" font-weight="400" fill="#000" text-anchor="start" font-style="italic">N</text><text x="111.6" y="432.4" font-size="29" font-family="'Liberation Serif',serif" font-weight="400" fill="#000" text-anchor="start" font-style="italic">S</text><polygon points="186.7,448.6 188.2,450.3 183.3,486.8 180.3,486.8" fill="#000"/><polygon points="160.3,463.4 186.7,467.6 185.2,481.9 178.3,479.4 173.9,483.3 169.0,479.4 164.5,481.4 157.9,478.9" fill="#000"/><polygon points="153.0,488.0 182.8,492.2 181.8,506.0 175.1,502.8 170.2,506.0 164.5,501.6 159.1,504.5 150.5,500.6" fill="#000"/><polygon points="141.4,512.7 163.1,518.3 159.1,525.0 153.0,531.6 140.9,540.0" fill="#000"/><polygon points="185.0,484.3 186.7,521.3 185.0,546.4 174.4,574.5 130.0,572.0 121.7,566.8 144.3,548.4 164.5,518.8" fill="#000"/><polygon points="187.4,541.5 208.4,539.8 223.2,544.7 221.2,568.1 217.7,577.9 215.8,588.3 212.1,587.8 208.4,599.1 203.4,596.7 198.5,599.6 192.4,597.6 189.2,587.8 186.2,577.9" fill="#000"/><polygon points="169.5,576.9 183.7,575.0 184.2,590.7 167.7,588.3" fill="#000"/><polygon points="186.2,509 201,515 209,537.5 187.3,541.5" fill="#000"/><polyline points="190,512 196,540" fill="none" stroke="#fff" stroke-width="0.8"/><polygon points="160.3,587.8 181.3,594.2 208.4,600.1 224.6,601.6 218.2,610.0 193.6,612.9 169.0,610.4 159.1,600.6" fill="#000"/><polygon points="132.0,622.8 139.4,619.3 145.6,612.4 150.5,616.8 153.7,615.4 159.1,607.5 164.5,615.9 173.9,621.3 193.6,617.8 208.4,616.4 231.0,622.8 215.8,624.7 205.9,623.7 198.5,628.2 188.7,626.2 181.3,631.1 171.4,627.7 164.0,629.2 149.3,630.1 139.4,625.2" fill="#000"/><polyline points="183.7,469.6 181.3,493.0 179.3,521.3 176.4,548.4 173.9,574.2" fill="none" stroke="#fff" stroke-width="0.9"/><polyline points="185.0,485.6 166.5,543.4 159.1,572.5" fill="none" stroke="#fff" stroke-width="0.7"/><polyline points="124.6,567.1 172.9,566.1 174.4,573.0" fill="none" stroke="#fff" stroke-width="1.0"/><polyline points="184.5,485.8 125.6,566.1" fill="none" stroke="#fff" stroke-width="0.6"/><polyline points="194.8,541.5 196.6,597.6" fill="none" stroke="#fff" stroke-width="1.3"/><polyline points="203.4,540.5 204.7,597.6" fill="none" stroke="#fff" stroke-width="1.3"/><polyline points="213.3,541.5 211.3,593.9" fill="none" stroke="#fff" stroke-width="1.3"/><polyline points="159.1,471.5 186.2,475.0" fill="none" stroke="#fff" stroke-width="0.9"/><polyline points="151.7,494.7 182.5,499.1" fill="none" stroke="#fff" stroke-width="0.9"/><polyline points="161.6,593.9 220.7,606.3" fill="none" stroke="#fff" stroke-width="0.9"/><polyline points="161.1,601.3 203.4,612.4" fill="none" stroke="#fff" stroke-width="0.8"/><polyline points="139.4,623.5 161.6,616.1 178.8,624.7 218.2,623.5" fill="none" stroke="#fff" stroke-width="0.8"/><path transform="translate(127.0 477.0) scale(1.70 1.70)" d="M-8 -0.6 C-5.4 -1.6 -2.6 -0.4 -0.6 1.2 C1.2 -2 3.2 -5.6 4 -9.6 C5.2 -5.6 4.8 -1 2.4 2.2 L5.4 2.8 L1.4 3.8 C-2.4 4 -5.6 1.6 -8 -0.6Z" fill="#000"/><path transform="translate(130.0 502.5) scale(0.95 0.95)" d="M-8 -0.6 C-5.4 -1.6 -2.6 -0.4 -0.6 1.2 C1.2 -2 3.2 -5.6 4 -9.6 C5.2 -5.6 4.8 -1 2.4 2.2 L5.4 2.8 L1.4 3.8 C-2.4 4 -5.6 1.6 -8 -0.6Z" fill="#000"/><path transform="translate(108.5 517.0) scale(0.95 0.95)" d="M-8 -0.6 C-5.4 -1.6 -2.6 -0.4 -0.6 1.2 C1.2 -2 3.2 -5.6 4 -9.6 C5.2 -5.6 4.8 -1 2.4 2.2 L5.4 2.8 L1.4 3.8 C-2.4 4 -5.6 1.6 -8 -0.6Z" fill="#000"/><path transform="translate(240.0 507.5) scale(0.90 0.90)" d="M-8 -0.6 C-5.4 -1.6 -2.6 -0.4 -0.6 1.2 C1.2 -2 3.2 -5.6 4 -9.6 C5.2 -5.6 4.8 -1 2.4 2.2 L5.4 2.8 L1.4 3.8 C-2.4 4 -5.6 1.6 -8 -0.6Z" fill="#000"/><path d="M199.8 448.6 C204 452 216 476 229.3 499 L218 503 C222 520 232 540 250 549 C264 554 284 554 300 543 L300 541.5 Q305 538 310 541.5 Q316 545 322 541.5 L388 541.5 Q394 545 400 541.5 Q406 538 410.7 540 L416.3 540 L416.3 619 L410.7 620.7 C400 628 380 637 355.5 646.5 C340 641 300 624 280 613 C250 596 222 566 208 538 C204 530 202 520 201 514 L186.2 516.4 C188 500 192 470 199.8 448.6Z" fill="#000"/><path d="M272 605 C300 622 340 640 355.5 644 C380 635 400 627 410 619" fill="none" stroke="#fff" stroke-width="1.3"/><path d="M272 551 C284 551 294 547 300 542 Q305 538 310 541.5 Q316 545 322 541.5 M388 541.5 Q394 545 400 541.5 Q405 538 410 540" fill="none" stroke="#fff" stroke-width="1.3"/><path transform="translate(206.5 486.0) scale(1.00)" d="M0 10 V1 M0 2 C-1 -4 -7 -5 -8 -1 C-8.4 1.6 -5.4 2.2 -5 0 M0 2 C1 -4 7 -5 8 -1 C8.4 1.6 5.4 2.2 5 0" fill="none" stroke="#fff" stroke-width="1.4" stroke-linecap="round"/><path d="M203 470 C205 478 205 484 206.5 490" fill="none" stroke="#fff" stroke-width="1.2"/><path d="M204 508 C210 506 218 509 222 516 M214 512 C212 518 216 524 222 522 M222 528 C226 534 230 532 231 528" fill="none" stroke="#fff" stroke-width="1.6" stroke-linecap="round"/><text x="238.0" y="579.5" font-size="33" font-family="'Liberation Serif',serif" font-weight="700" fill="#fff" text-anchor="start" textLength="16.0" lengthAdjust="spacingAndGlyphs" transform="rotate(14.0 238.0 579.5)" stroke="#fff" stroke-width="1.1">F</text><text x="256.5" y="592.0" font-size="37" font-family="'Liberation Serif',serif" font-weight="700" fill="#fff" text-anchor="start" textLength="20.0" lengthAdjust="spacingAndGlyphs" transform="rotate(12.0 256.5 592.0)" stroke="#fff" stroke-width="1.1">R</text><text x="280.5" y="609.5" font-size="55" font-family="'Liberation Serif',serif" font-weight="700" fill="#fff" text-anchor="start" textLength="20.0" lengthAdjust="spacingAndGlyphs" transform="rotate(6.0 280.5 609.5)" stroke="#fff" stroke-width="1.1">E</text><text x="303.5" y="613.5" font-size="56" font-family="'Liberation Serif',serif" font-weight="700" fill="#fff" text-anchor="start" textLength="24.0" lengthAdjust="spacingAndGlyphs" transform="rotate(2.0 303.5 613.5)" stroke="#fff" stroke-width="1.1">E</text><text x="335.5" y="613.5" font-size="90" font-family="'Liberation Serif',serif" font-weight="700" fill="#fff" text-anchor="start" textLength="41.0" lengthAdjust="spacingAndGlyphs" stroke="#fff" stroke-width="1.1">&amp;</text><text x="380.0" y="612.5" font-size="90" font-family="'Liberation Serif',serif" font-weight="700" fill="#fff" text-anchor="start" textLength="44.0" lengthAdjust="spacingAndGlyphs" stroke="#fff" stroke-width="1.1">W</text><path transform="translate(356.0 622.0) scale(1.25)" d="M0 10 V1 M0 2 C-1 -4 -7 -5 -8 -1 C-8.4 1.6 -5.4 2.2 -5 0 M0 2 C1 -4 7 -5 8 -1 C8.4 1.6 5.4 2.2 5 0" fill="none" stroke="#fff" stroke-width="1.2" stroke-linecap="round"/><path d="M339.2 274 C322 268 326 240 352.7 238 C380 240 383 268 367.6 274 C372 284 384 289 396 291 C400 294 398 300 394 299 C384 297 375 303 373 314 L371.7 349 L333.7 349 L332.4 314 C330 303 322 297 312 299 C308 300 306 294 310.7 291 C322 289 334 284 339.2 274Z" fill="#000" stroke="#fff" stroke-width="1.8"/><ellipse cx="353.3" cy="259.7" rx="14.2" ry="10.2" fill="#000" stroke="#fff" stroke-width="1.8"/><use href="#anc" transform="translate(343.5 261) scale(0.9)"/><path d="M352 250 C358 254 358 266 351 270" fill="none" stroke="#fff" stroke-width="1.2"/><path d="M352.7 284 V308 M352.7 290 C350 282 342 282 341 287 C340.6 290 344 291 344.6 288.6 M352.7 290 C355.4 282 363.4 282 364.4 287 C364.8 290 361.4 291 360.8 288.6 M336 285 C332 283 330 288 333.6 289.4 M369.4 285 C373.4 283 375.4 288 371.8 289.4" fill="none" stroke="#fff" stroke-width="1.4" stroke-linecap="round"/><path d="M338 291 C332 292 330 285 334 283 C337 281.6 339.6 284.6 337.4 286.6 M367.4 291 C373.4 292 375.4 285 371.4 283 C368.4 281.6 365.8 284.6 368 286.6" fill="none" stroke="#fff" stroke-width="1.5" stroke-linecap="round"/><path d="M347.6 303 L352.7 318 L357.8 303Z" fill="#fff"/><path transform="translate(352.7 327.0) scale(1.00)" d="M0 10 V1 M0 2 C-1 -4 -7 -5 -8 -1 C-8.4 1.6 -5.4 2.2 -5 0 M0 2 C1 -4 7 -5 8 -1 C8.4 1.6 5.4 2.2 5 0" fill="none" stroke="#fff" stroke-width="1.4" stroke-linecap="round"/><path d="M296 351.5 L416.3 351.5 L416.3 381.5 L372 381.5 L372 383.5 L333.5 383.5 L333.5 381.5 L296 378Z" fill="#000"/><path d="M296 351.5 H416.3 M296 378.6 L333.5 381.8 M372 381.8 L416.3 379.5" fill="none" stroke="#fff" stroke-width="1.5"/><text x="306.4" y="377.0" font-size="28.7" font-family="'Liberation Serif',serif" font-weight="700" fill="#fff" text-anchor="start" textLength="13.8" lengthAdjust="spacingAndGlyphs" stroke="#fff" stroke-width="0.9">I</text><text x="341.6" y="377.0" font-size="28.7" font-family="'Liberation Serif',serif" font-weight="700" fill="#fff" text-anchor="start" textLength="22.0" lengthAdjust="spacingAndGlyphs" stroke="#fff" stroke-width="0.9">A</text><text x="372.6" y="377.0" font-size="28.7" font-family="'Liberation Serif',serif" font-weight="700" fill="#fff" text-anchor="start" textLength="29.0" lengthAdjust="spacingAndGlyphs" stroke="#fff" stroke-width="0.9">M</text><path d="M333.7 383 V405.5 H325 M371.7 383 V405.5 H386" fill="none" stroke="#fff" stroke-width="1.6"/><rect x="334.6" y="383" width="36.2" height="30" fill="#000"/><path transform="translate(352.7 388.0) scale(0.95)" d="M0 10 V1 M0 2 C-1 -4 -7 -5 -8 -1 C-8.4 1.6 -5.4 2.2 -5 0 M0 2 C1 -4 7 -5 8 -1 C8.4 1.6 5.4 2.2 5 0" fill="none" stroke="#fff" stroke-width="1.4736842105263157" stroke-linecap="round"/><path d="M338.5 470 L335.5 476 V502 L322.6 512 V541.5 H386 V512 L373 502 V476 L370 470" fill="#000"/><path d="M338.5 470 L335.5 476 V502 L322.6 512 V541.5 H386 V512 L373 502 V476 L370 470" fill="none" stroke="#fff" stroke-width="1.5"/><path d="M322.8 414 Q354 409.5 385.4 414 V440 C385 458 368 472 354 480.6 C340 472 323 458 322.8 440Z" fill="#000" stroke="#fff" stroke-width="1.7"/><path d="M326.4 417.4 Q354 413.4 381.8 417.4 V440 C381.4 456 366 469 354 476.4 C342 469 326.8 456 326.4 440Z" fill="none" stroke="#fff" stroke-width="0.7"/><clipPath id="csh"><path d="M326.4 417.4 Q354 413.4 381.8 417.4 V440 C381.4 456 366 469 354 476.4 C342 469 326.8 456 326.4 440Z"/></clipPath><g clip-path="url(#csh)"><text x="329.4" y="450.0" font-size="45" font-family="'Liberation Sans',sans-serif" font-weight="400" fill="#fff" text-anchor="start" textLength="10.0" lengthAdjust="spacingAndGlyphs" stroke="#fff" stroke-width="1">L</text><text x="339.5" y="465.0" font-size="71" font-family="'Liberation Sans',sans-serif" font-weight="400" fill="#fff" text-anchor="start" textLength="12.0" lengthAdjust="spacingAndGlyphs" stroke="#fff" stroke-width="1">I</text><text x="350.5" y="472.0" font-size="82" font-family="'Liberation Sans',sans-serif" font-weight="400" fill="#fff" text-anchor="start" textLength="21.0" lengthAdjust="spacingAndGlyphs" stroke="#fff" stroke-width="1">K</text><text x="369.5" y="446.0" font-size="40" font-family="'Liberation Sans',sans-serif" font-weight="400" fill="#fff" text-anchor="start" textLength="10.5" lengthAdjust="spacingAndGlyphs" stroke="#fff" stroke-width="1">E</text></g><text x="339.6" y="500.6" font-size="25" font-family="'Liberation Serif',serif" font-weight="700" fill="#fff" text-anchor="start" textLength="27.0" lengthAdjust="spacingAndGlyphs" >THE</text><text x="324.6" y="540.6" font-size="46" font-family="'Liberation Sans',sans-serif" font-weight="400" fill="#fff" text-anchor="start" textLength="57.0" lengthAdjust="spacingAndGlyphs" >SEA</text><g transform="translate(255.9 376.2)"><circle r="45.6" fill="#000"/><circle r="43.2" fill="none" stroke="#fff" stroke-width="0.9"/><circle r="34.4" fill="#fff" stroke="#000" stroke-width="1"/><circle r="31.9" fill="none" stroke="#000" stroke-width="1.6"/><path d="M-32 -2 C-12 -12 12 -12 32 -2 M-30 12 C-10 22 14 22 30 12 M-4 -32 C-14 -10 -14 12 -2 32 M12 -30 C26 -10 26 12 14 30" fill="none" stroke="#000" stroke-width="1.4"/><text x="-36.2" y="19.3" font-size="7" fill="#fff" text-anchor="middle" font-family="'DejaVu Sans',sans-serif">★</text><text x="-39.9" y="3.8" font-size="7" fill="#fff" text-anchor="middle" font-family="'DejaVu Sans',sans-serif">★</text><text x="-37.2" y="-11.9" font-size="7" fill="#fff" text-anchor="middle" font-family="'DejaVu Sans',sans-serif">★</text><text x="-28.7" y="-25.3" font-size="7" fill="#fff" text-anchor="middle" font-family="'DejaVu Sans',sans-serif">★</text><text x="-15.6" y="-34.3" font-size="7" fill="#fff" text-anchor="middle" font-family="'DejaVu Sans',sans-serif">★</text><text x="0.0" y="-37.5" font-size="7" fill="#fff" text-anchor="middle" font-family="'DejaVu Sans',sans-serif">★</text><text x="15.6" y="-34.3" font-size="7" fill="#fff" text-anchor="middle" font-family="'DejaVu Sans',sans-serif">★</text><text x="28.7" y="-25.3" font-size="7" fill="#fff" text-anchor="middle" font-family="'DejaVu Sans',sans-serif">★</text><text x="37.2" y="-11.9" font-size="7" fill="#fff" text-anchor="middle" font-family="'DejaVu Sans',sans-serif">★</text><text x="39.9" y="3.8" font-size="7" fill="#fff" text-anchor="middle" font-family="'DejaVu Sans',sans-serif">★</text><text x="36.2" y="19.3" font-size="7" fill="#fff" text-anchor="middle" font-family="'DejaVu Sans',sans-serif">★</text><rect x="-18.5" y="-21.5" width="35" height="16" fill="#000" stroke="#fff" stroke-width="1" transform="rotate(-3)"/><rect x="-28" y="-5.5" width="56" height="17" fill="#000" stroke="#fff" stroke-width="1" transform="rotate(-2)"/><text x="-16.2" y="-8.2" font-size="15" font-weight="700" font-family="'Liberation Sans',sans-serif" fill="#fff" textLength="30.5" lengthAdjust="spacingAndGlyphs" transform="rotate(-3)">DAKY</text><text x="-26" y="8.8" font-size="15.5" font-weight="700" font-family="'Liberation Sans',sans-serif" fill="#fff" textLength="52" lengthAdjust="spacingAndGlyphs" transform="rotate(-2)">RICEMILL</text><path id="sparc" d="M-25.9 30.9 A40.4 40.4 0 0 0 25.9 30.9" fill="none"/><text font-size="6.6" font-weight="700" fill="#fff" font-family="'Liberation Sans','DejaVu Sans',sans-serif" letter-spacing="0.5"><textPath href="#sparc" startOffset="50%" text-anchor="middle">★ SPONSORED ★</textPath></text></g><text transform="translate(239.60 480.13) scale(0.8280 1)" x="-19.00" y="0" font-size="68.6" font-weight="700" font-family="'Liberation Sans',sans-serif" letter-spacing="2.74" fill="#000" stroke="#000" stroke-width="6.10" stroke-linejoin="round">00</text><text transform="translate(239.60 480.13) scale(0.8280 1)" x="-19.00" y="0" font-size="68.6" font-weight="700" font-family="'Liberation Sans',sans-serif" letter-spacing="2.74" fill="#fff" stroke="#fff" stroke-width="4.60" stroke-linejoin="round">00</text><text transform="translate(239.60 480.13) scale(0.8280 1)" x="-19.00" y="0" font-size="68.6" font-weight="700" font-family="'Liberation Sans',sans-serif" letter-spacing="2.74" fill="#000" stroke="#000" stroke-width="1.20" stroke-linejoin="round">00</text>
</g>
<g clip-path="url(#cb)">
<g clip-path="url(#sb)"><rect x="418" y="205" width="154" height="471" fill="#000"/><path d="M-218.60 151.20 L365.20 740.60 M-218.60 151.20 L-802.40 740.60 M-176.90 151.20 L406.90 740.60 M-176.90 151.20 L-760.70 740.60 M-135.20 151.20 L448.60 740.60 M-135.20 151.20 L-719.00 740.60 M-93.50 151.20 L490.30 740.60 M-93.50 151.20 L-677.30 740.60 M-51.80 151.20 L532.00 740.60 M-51.80 151.20 L-635.60 740.60 M-10.10 151.20 L573.70 740.60 M-10.10 151.20 L-593.90 740.60 M31.60 151.20 L615.40 740.60 M31.60 151.20 L-552.20 740.60 M73.30 151.20 L657.10 740.60 M73.30 151.20 L-510.50 740.60 M115.00 151.20 L698.80 740.60 M115.00 151.20 L-468.80 740.60 M156.70 151.20 L740.50 740.60 M156.70 151.20 L-427.10 740.60 M198.40 151.20 L782.20 740.60 M198.40 151.20 L-385.40 740.60 M240.10 151.20 L823.90 740.60 M240.10 151.20 L-343.70 740.60 M281.80 151.20 L865.60 740.60 M281.80 151.20 L-302.00 740.60 M323.50 151.20 L907.30 740.60 M323.50 151.20 L-260.30 740.60 M365.20 151.20 L949.00 740.60 M365.20 151.20 L-218.60 740.60 M406.90 151.20 L990.70 740.60 M406.90 151.20 L-176.90 740.60 M448.60 151.20 L1032.40 740.60 M448.60 151.20 L-135.20 740.60 M490.30 151.20 L1074.10 740.60 M490.30 151.20 L-93.50 740.60 M532.00 151.20 L1115.80 740.60 M532.00 151.20 L-51.80 740.60 M573.70 151.20 L1157.50 740.60 M573.70 151.20 L-10.10 740.60 M615.40 151.20 L1199.20 740.60 M615.40 151.20 L31.60 740.60 M657.10 151.20 L1240.90 740.60 M657.10 151.20 L73.30 740.60 M698.80 151.20 L1282.60 740.60 M698.80 151.20 L115.00 740.60 M740.50 151.20 L1324.30 740.60 M740.50 151.20 L156.70 740.60 M782.20 151.20 L1366.00 740.60 M782.20 151.20 L198.40 740.60 M823.90 151.20 L1407.70 740.60 M823.90 151.20 L240.10 740.60 M865.60 151.20 L1449.40 740.60 M865.60 151.20 L281.80 740.60 M907.30 151.20 L1491.10 740.60 M907.30 151.20 L323.50 740.60 M949.00 151.20 L1532.80 740.60 M949.00 151.20 L365.20 740.60 M990.70 151.20 L1574.50 740.60 M990.70 151.20 L406.90 740.60 M1032.40 151.20 L1616.20 740.60 M1032.40 151.20 L448.60 740.60 M1074.10 151.20 L1657.90 740.60 M1074.10 151.20 L490.30 740.60 M1115.80 151.20 L1699.60 740.60 M1115.80 151.20 L532.00 740.60 M1157.50 151.20 L1741.30 740.60 M1157.50 151.20 L573.70 740.60 M1199.20 151.20 L1783.00 740.60 M1199.20 151.20 L615.40 740.60" stroke="#fff" stroke-width="2.3" stroke-linecap="round" stroke-dasharray="0 5.926" fill="none"/><use href="#anc" transform="translate(448.6 193.3) scale(1.0)"/><use href="#anc" transform="translate(448.6 235.4) scale(1.0)"/><use href="#anc" transform="translate(448.6 277.5) scale(1.0)"/><use href="#anc" transform="translate(448.6 319.6) scale(1.0)"/><use href="#anc" transform="translate(448.6 361.7) scale(1.0)"/><use href="#anc" transform="translate(448.6 403.8) scale(1.0)"/><use href="#anc" transform="translate(448.6 445.9) scale(1.0)"/><use href="#anc" transform="translate(448.6 488.0) scale(1.0)"/><use href="#anc" transform="translate(448.6 530.1) scale(1.0)"/><use href="#anc" transform="translate(448.6 572.2) scale(1.0)"/><use href="#anc" transform="translate(448.6 614.3) scale(1.0)"/><use href="#anc" transform="translate(448.6 656.4) scale(1.0)"/><use href="#anc" transform="translate(490.3 193.3) scale(1.0)"/><use href="#anc" transform="translate(490.3 235.4) scale(1.0)"/><use href="#anc" transform="translate(490.3 277.5) scale(1.0)"/><use href="#anc" transform="translate(490.3 319.6) scale(1.0)"/><use href="#anc" transform="translate(490.3 361.7) scale(1.0)"/><use href="#anc" transform="translate(490.3 403.8) scale(1.0)"/><use href="#anc" transform="translate(490.3 445.9) scale(1.0)"/><use href="#anc" transform="translate(490.3 488.0) scale(1.0)"/><use href="#anc" transform="translate(490.3 530.1) scale(1.0)"/><use href="#anc" transform="translate(490.3 572.2) scale(1.0)"/><use href="#anc" transform="translate(490.3 614.3) scale(1.0)"/><use href="#anc" transform="translate(490.3 656.4) scale(1.0)"/><use href="#anc" transform="translate(532.0 193.3) scale(1.0)"/><use href="#anc" transform="translate(532.0 235.4) scale(1.0)"/><use href="#anc" transform="translate(532.0 277.5) scale(1.0)"/><use href="#anc" transform="translate(532.0 319.6) scale(1.0)"/><use href="#anc" transform="translate(532.0 361.7) scale(1.0)"/><use href="#anc" transform="translate(532.0 403.8) scale(1.0)"/><use href="#anc" transform="translate(532.0 445.9) scale(1.0)"/><use href="#anc" transform="translate(532.0 488.0) scale(1.0)"/><use href="#anc" transform="translate(532.0 530.1) scale(1.0)"/><use href="#anc" transform="translate(532.0 572.2) scale(1.0)"/><use href="#anc" transform="translate(532.0 614.3) scale(1.0)"/><use href="#anc" transform="translate(532.0 656.4) scale(1.0)"/><use href="#anc" transform="translate(573.7 193.3) scale(1.0)"/><use href="#anc" transform="translate(573.7 235.4) scale(1.0)"/><use href="#anc" transform="translate(573.7 277.5) scale(1.0)"/><use href="#anc" transform="translate(573.7 319.6) scale(1.0)"/><use href="#anc" transform="translate(573.7 361.7) scale(1.0)"/><use href="#anc" transform="translate(573.7 403.8) scale(1.0)"/><use href="#anc" transform="translate(573.7 445.9) scale(1.0)"/><use href="#anc" transform="translate(573.7 488.0) scale(1.0)"/><use href="#anc" transform="translate(573.7 530.1) scale(1.0)"/><use href="#anc" transform="translate(573.7 572.2) scale(1.0)"/><use href="#anc" transform="translate(573.7 614.3) scale(1.0)"/><use href="#anc" transform="translate(573.7 656.4) scale(1.0)"/></g>
<rect x="565.4" y="264.9" width="0.5" height="11.9" fill="#000"/><rect x="564.3" y="304.1" width="0.8" height="17.5" fill="#000"/><rect x="564.3" y="211.9" width="0.5" height="19.3" fill="#000"/><rect x="564.4" y="283.5" width="0.6" height="29.5" fill="#000"/><rect x="565.2" y="321.1" width="0.7" height="32.6" fill="#000"/><rect x="565.7" y="385.6" width="0.6" height="9.2" fill="#000"/><rect x="563.7" y="538.0" width="0.6" height="29.0" fill="#000"/><rect x="563.2" y="593.1" width="0.6" height="26.3" fill="#000"/><rect x="563.3" y="426.1" width="0.6" height="18.0" fill="#000"/><rect x="563.5" y="533.4" width="1.0" height="16.3" fill="#000"/><rect x="562.1" y="510.8" width="0.9" height="34.0" fill="#000"/><rect x="558.1" y="305.0" width="0.9" height="33.0" fill="#fff"/><rect x="556.8" y="242.6" width="0.6" height="14.4" fill="#fff"/><rect x="557.6" y="488.1" width="0.7" height="19.9" fill="#fff"/><rect x="558.4" y="289.8" width="0.6" height="29.6" fill="#fff"/><rect x="557.5" y="213.8" width="1.0" height="14.9" fill="#fff"/><rect x="557.7" y="372.2" width="1.0" height="11.0" fill="#fff"/>
<use href="#shipb" transform="translate(630 205)"/><g transform="translate(580.9 268.7)"><circle r="16.6" fill="#000"/><circle r="13.2" fill="none" stroke="#e6e6e6" stroke-width="0.7"/><circle r="12" fill="none" stroke="#cfcfcf" stroke-width="0.5"/><circle r="15" fill="none" stroke="#ddd" stroke-width="1" stroke-dasharray="0.9 5.0"/><path d="M-8 -9 C0 -12 9 -6 11 4 M-11 5 C-4 9 4 9 10 5" stroke="#d8d8d8" stroke-width="0.6" fill="none"/><text x="0" y="-1.2" font-size="5.4" font-weight="700" font-family="'Liberation Sans',sans-serif" fill="#c4c4c4" text-anchor="middle" textLength="20" lengthAdjust="spacingAndGlyphs">DUMBLING</text><text x="0" y="4.6" font-size="5.4" font-weight="700" font-family="'Liberation Sans',sans-serif" fill="#c4c4c4" text-anchor="middle" textLength="18" lengthAdjust="spacingAndGlyphs">MADNESS</text></g><use href="#compass" transform="translate(614 557.3) scale(0.585)"/><text x="613.6" y="496.0" font-size="22" font-family="'Liberation Serif',serif" font-weight="400" fill="#000" text-anchor="middle" >N</text><text x="613.6" y="634.6" font-size="22" font-family="'Liberation Serif',serif" font-weight="400" fill="#000" text-anchor="middle" >S</text><text x="674.8" y="564.8" font-size="22" font-family="'Liberation Serif',serif" font-weight="400" fill="#000" text-anchor="start" >E</text><path d="M531 462.7 C536 470 544 500 541.8 529.3 L533.5 523 C528 560 500 610 420 648 L420 556 C424 566 432 572 440 572 C470 570 500 545 514 521 L500.7 516.6 C512 500 522 480 531 462.7Z" fill="#000" stroke="#fff" stroke-width="1.5"/><path transform="translate(527.0 499.0) scale(0.90)" d="M0 10 V1 M0 2 C-1 -4 -7 -5 -8 -1 C-8.4 1.6 -5.4 2.2 -5 0 M0 2 C1 -4 7 -5 8 -1 C8.4 1.6 5.4 2.2 5 0" fill="none" stroke="#fff" stroke-width="1.4444444444444444" stroke-linecap="round"/><path d="M527 476 C528.6 484 528 492 527 500 M518 528 C524 524 528 528 526 533 M520 536 C516 546 512 552 508 556 M504 549 L508 557 L512 551" fill="none" stroke="#fff" stroke-width="1.3" stroke-linecap="round"/><text x="403.0" y="634.0" font-size="48" font-family="'Liberation Serif',serif" font-weight="700" fill="#000" text-anchor="start" textLength="34.0" lengthAdjust="spacingAndGlyphs" transform="rotate(-4.0 403.0 634.0)" stroke="#fff" stroke-width="1.3">W</text><text x="439.5" y="624.0" font-size="52" font-family="'Liberation Serif',serif" font-weight="700" fill="#000" text-anchor="start" textLength="12.0" lengthAdjust="spacingAndGlyphs" transform="rotate(-8.0 439.5 624.0)" stroke="#fff" stroke-width="1.3">I</text><text x="456.5" y="612.5" font-size="37" font-family="'Liberation Serif',serif" font-weight="700" fill="#000" text-anchor="start" textLength="16.0" lengthAdjust="spacingAndGlyphs" transform="rotate(-10.0 456.5 612.5)" stroke="#fff" stroke-width="1.3">L</text><text x="476.5" y="600.0" font-size="35" font-family="'Liberation Serif',serif" font-weight="700" fill="#000" text-anchor="start" textLength="16.5" lengthAdjust="spacingAndGlyphs" transform="rotate(-16.0 476.5 600.0)" stroke="#fff" stroke-width="1.3">D</text><path d="M424 366 L455.4 368.2 L452.8 395 L424 398.8Z" fill="#000" stroke="#fff" stroke-width="1.5"/><path d="M424 374 L430 376 L428 384 L432 390 L424 392Z" fill="#fff"/><path id="arc1" d="M519.5 331 A170 170 0 0 1 639.5 331" fill="none"/><text font-size="27" font-weight="700" font-family="'Liberation Sans',sans-serif" fill="#fff" stroke="#000" stroke-width="2.8" paint-order="stroke" textLength="119" lengthAdjust="spacingAndGlyphs"><textPath href="#arc1" startOffset="1.5">ARTLINES</textPath></text><text font-size="27" font-weight="700" font-family="'Liberation Sans',sans-serif" fill="#fff" stroke="#000" stroke-width="1.0" paint-order="stroke" textLength="119" lengthAdjust="spacingAndGlyphs"><textPath href="#arc1" startOffset="1.5">ARTLINES</textPath></text><text transform="translate(542.00 453.15) scale(0.8270 1)" x="-40.17" y="0" font-size="145.0" font-weight="700" font-family="'Liberation Sans',sans-serif" letter-spacing="5.84" fill="#000" stroke="#000" stroke-width="11.80" stroke-linejoin="round">00</text><text transform="translate(542.00 453.15) scale(0.8270 1)" x="-40.17" y="0" font-size="145.0" font-weight="700" font-family="'Liberation Sans',sans-serif" letter-spacing="5.84" fill="#fff" stroke="#fff" stroke-width="9.80" stroke-linejoin="round">00</text><text transform="translate(542.00 453.15) scale(0.8270 1)" x="-40.17" y="0" font-size="145.0" font-weight="700" font-family="'Liberation Sans',sans-serif" letter-spacing="5.84" fill="#000" stroke="#000" stroke-width="3.80" stroke-linejoin="round">00</text>
</g>
<g clip-path="url(#cr)">
<use href="#ship" transform="translate(1035 300)"/><path transform="translate(1067.0 325.5) scale(1.40 1.40)" d="M-8 -0.6 C-5.4 -1.6 -2.6 -0.4 -0.6 1.2 C1.2 -2 3.2 -5.6 4 -9.6 C5.2 -5.6 4.8 -1 2.4 2.2 L5.4 2.8 L1.4 3.8 C-2.4 4 -5.6 1.6 -8 -0.6Z" fill="#000"/><path transform="translate(1069.5 342.5) scale(0.75 0.75)" d="M-8 -0.6 C-5.4 -1.6 -2.6 -0.4 -0.6 1.2 C1.2 -2 3.2 -5.6 4 -9.6 C5.2 -5.6 4.8 -1 2.4 2.2 L5.4 2.8 L1.4 3.8 C-2.4 4 -5.6 1.6 -8 -0.6Z" fill="#000"/><path transform="translate(1052.5 353.5) scale(0.80 0.80)" d="M-8 -0.6 C-5.4 -1.6 -2.6 -0.4 -0.6 1.2 C1.2 -2 3.2 -5.6 4 -9.6 C5.2 -5.6 4.8 -1 2.4 2.2 L5.4 2.8 L1.4 3.8 C-2.4 4 -5.6 1.6 -8 -0.6Z" fill="#000"/>
</g>
<g clip-path="url(#cl)">
<use href="#ship" transform="translate(937.3 573.0) scale(0.73 1.105)"/><polygon points="972,640 989.5,612 994,612 994,671 966,672.6 951.5,667" fill="#000"/><polyline points="953,666.6 989,661.5 991,670" fill="none" stroke="#fff" stroke-width="1"/><polyline points="989,614 956,664" fill="none" stroke="#fff" stroke-width="0.7"/><path transform="translate(955.5 601.0) scale(1.50 1.50)" d="M-8 -0.6 C-5.4 -1.6 -2.6 -0.4 -0.6 1.2 C1.2 -2 3.2 -5.6 4 -9.6 C5.2 -5.6 4.8 -1 2.4 2.2 L5.4 2.8 L1.4 3.8 C-2.4 4 -5.6 1.6 -8 -0.6Z" fill="#000"/><path transform="translate(958.0 620.5) scale(0.80 0.80)" d="M-8 -0.6 C-5.4 -1.6 -2.6 -0.4 -0.6 1.2 C1.2 -2 3.2 -5.6 4 -9.6 C5.2 -5.6 4.8 -1 2.4 2.2 L5.4 2.8 L1.4 3.8 C-2.4 4 -5.6 1.6 -8 -0.6Z" fill="#000"/>
<g clip-path="url(#sl)"><rect x="980" y="444" width="126" height="232" fill="#000"/><path d="M627.00 390.60 L947.00 711.60 M627.00 390.60 L307.00 711.60 M659.00 390.60 L979.00 711.60 M659.00 390.60 L339.00 711.60 M691.00 390.60 L1011.00 711.60 M691.00 390.60 L371.00 711.60 M723.00 390.60 L1043.00 711.60 M723.00 390.60 L403.00 711.60 M755.00 390.60 L1075.00 711.60 M755.00 390.60 L435.00 711.60 M787.00 390.60 L1107.00 711.60 M787.00 390.60 L467.00 711.60 M819.00 390.60 L1139.00 711.60 M819.00 390.60 L499.00 711.60 M851.00 390.60 L1171.00 711.60 M851.00 390.60 L531.00 711.60 M883.00 390.60 L1203.00 711.60 M883.00 390.60 L563.00 711.60 M915.00 390.60 L1235.00 711.60 M915.00 390.60 L595.00 711.60 M947.00 390.60 L1267.00 711.60 M947.00 390.60 L627.00 711.60 M979.00 390.60 L1299.00 711.60 M979.00 390.60 L659.00 711.60 M1011.00 390.60 L1331.00 711.60 M1011.00 390.60 L691.00 711.60 M1043.00 390.60 L1363.00 711.60 M1043.00 390.60 L723.00 711.60 M1075.00 390.60 L1395.00 711.60 M1075.00 390.60 L755.00 711.60 M1107.00 390.60 L1427.00 711.60 M1107.00 390.60 L787.00 711.60 M1139.00 390.60 L1459.00 711.60 M1139.00 390.60 L819.00 711.60 M1171.00 390.60 L1491.00 711.60 M1171.00 390.60 L851.00 711.60 M1203.00 390.60 L1523.00 711.60 M1203.00 390.60 L883.00 711.60 M1235.00 390.60 L1555.00 711.60 M1235.00 390.60 L915.00 711.60 M1267.00 390.60 L1587.00 711.60 M1267.00 390.60 L947.00 711.60 M1299.00 390.60 L1619.00 711.60 M1299.00 390.60 L979.00 711.60 M1331.00 390.60 L1651.00 711.60 M1331.00 390.60 L1011.00 711.60 M1363.00 390.60 L1683.00 711.60 M1363.00 390.60 L1043.00 711.60 M1395.00 390.60 L1715.00 711.60 M1395.00 390.60 L1075.00 711.60 M1427.00 390.60 L1747.00 711.60 M1427.00 390.60 L1107.00 711.60 M1459.00 390.60 L1779.00 711.60 M1459.00 390.60 L1139.00 711.60" stroke="#fff" stroke-width="1.8" stroke-linecap="round" stroke-dasharray="0 4.533" fill="none"/><use href="#anc" transform="translate(979.0 454.8) scale(0.8)"/><use href="#anc" transform="translate(979.0 486.9) scale(0.8)"/><use href="#anc" transform="translate(979.0 519.0) scale(0.8)"/><use href="#anc" transform="translate(979.0 551.1) scale(0.8)"/><use href="#anc" transform="translate(979.0 583.2) scale(0.8)"/><use href="#anc" transform="translate(979.0 615.3) scale(0.8)"/><use href="#anc" transform="translate(979.0 647.4) scale(0.8)"/><use href="#anc" transform="translate(1011.0 454.8) scale(0.8)"/><use href="#anc" transform="translate(1011.0 486.9) scale(0.8)"/><use href="#anc" transform="translate(1011.0 519.0) scale(0.8)"/><use href="#anc" transform="translate(1011.0 551.1) scale(0.8)"/><use href="#anc" transform="translate(1011.0 583.2) scale(0.8)"/><use href="#anc" transform="translate(1011.0 615.3) scale(0.8)"/><use href="#anc" transform="translate(1011.0 647.4) scale(0.8)"/><use href="#anc" transform="translate(1043.0 454.8) scale(0.8)"/><use href="#anc" transform="translate(1043.0 486.9) scale(0.8)"/><use href="#anc" transform="translate(1043.0 519.0) scale(0.8)"/><use href="#anc" transform="translate(1043.0 551.1) scale(0.8)"/><use href="#anc" transform="translate(1043.0 583.2) scale(0.8)"/><use href="#anc" transform="translate(1043.0 615.3) scale(0.8)"/><use href="#anc" transform="translate(1043.0 647.4) scale(0.8)"/><use href="#anc" transform="translate(1075.0 454.8) scale(0.8)"/><use href="#anc" transform="translate(1075.0 486.9) scale(0.8)"/><use href="#anc" transform="translate(1075.0 519.0) scale(0.8)"/><use href="#anc" transform="translate(1075.0 551.1) scale(0.8)"/><use href="#anc" transform="translate(1075.0 583.2) scale(0.8)"/><use href="#anc" transform="translate(1075.0 615.3) scale(0.8)"/><use href="#anc" transform="translate(1075.0 647.4) scale(0.8)"/><use href="#anc" transform="translate(1107.0 454.8) scale(0.8)"/><use href="#anc" transform="translate(1107.0 486.9) scale(0.8)"/><use href="#anc" transform="translate(1107.0 519.0) scale(0.8)"/><use href="#anc" transform="translate(1107.0 551.1) scale(0.8)"/><use href="#anc" transform="translate(1107.0 583.2) scale(0.8)"/><use href="#anc" transform="translate(1107.0 615.3) scale(0.8)"/><use href="#anc" transform="translate(1107.0 647.4) scale(0.8)"/></g>
<path d="M890 444 H908 L908.5 462 L907 470 L906.4 461 L905 474 L903.4 458 L902 468 L900 452 L897 458 L896 449 L893 454 L890 448Z" fill="#000"/><path d="M1178.6 444 H1203 V524 L1201.4 512 L1200 536 L1198.4 520 L1197 530 L1195.4 518 L1194 549 L1192.4 530 L1191 542 L1189.6 528 L1188 559 L1186.6 538 L1185 548 L1184 534 L1182.6 562 L1181.4 536 L1180.4 546 L1179.6 520 L1178.2 506 L1179.4 490 L1177.8 470Z" fill="#000"/>
</g>
</svg>
<span class="t" style="left:101.20px;top:190.21px;font-size:9px;line-height:10.341px;color:#d2d2d2;transform:scaleX(0.9098);transform-origin:0 0;">FRONT</span>
<span class="t" style="left:425.80px;top:190.21px;font-size:9px;line-height:10.341px;color:#d2d2d2;transform:scaleX(0.9792);transform-origin:0 0;">BACK</span>
<span class="t" style="left:890.80px;top:190.81px;font-size:9px;line-height:10.341px;color:#d2d2d2;transform:scaleX(0.9501);transform-origin:0 0;">RIGHT</span>
<span class="t" style="left:890.80px;top:430.81px;font-size:9px;line-height:10.341px;color:#cfcfcf;transform:scaleX(0.9089);transform-origin:0 0;">LEFT</span>
</div>
</body></html>
